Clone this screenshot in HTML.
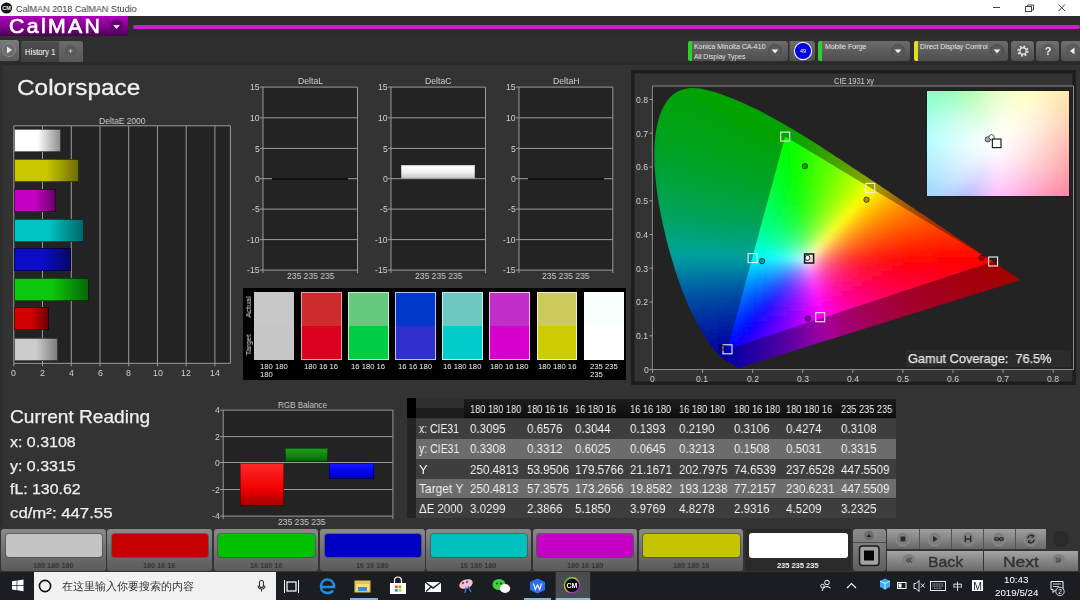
<!DOCTYPE html><html><head><meta charset="utf-8"><style>
html,body{margin:0;padding:0;width:1080px;height:600px;overflow:hidden;background:#333;font-family:"Liberation Sans",sans-serif;}
.t{position:absolute;white-space:pre;transform-origin:0 0;will-change:transform;}
svg{position:absolute;left:0;top:0;}
</style></head><body>
<div style="position:absolute;left:0px;top:0px;width:1080px;height:16px;background:#fff"></div>
<svg width="20" height="16" style="left:0;top:0"><circle cx="6.5" cy="8" r="5.6" fill="#111"/><text x="6.5" y="10" font-size="5.5" font-weight="bold" fill="#eee" text-anchor="middle" font-family="Liberation Sans">CM</text></svg>
<div class="t" style="left:15.60px;top:4.50px;font-size:9.22px;line-height:9.22px;color:#333;transform:scaleX(0.9809);">CalMAN 2018 CalMAN Studio</div>
<svg width="100" height="16" style="left:980px;top:0"><line x1="13" y1="7.5" x2="20" y2="7.5" stroke="#444" stroke-width="1"/><rect x="45.5" y="6.5" width="6" height="5" fill="none" stroke="#444"/><path d="M47.5 6.5v-1.5h6v5h-1.5" fill="none" stroke="#444"/><path d="M78.5 4.5l6.5 6.5M85 4.5l-6.5 6.5" stroke="#444" stroke-width="1"/></svg>
<div style="position:absolute;left:0px;top:16px;width:1080px;height:20px;background:#2c2c2c"></div>
<div style="position:absolute;left:0px;top:16px;width:128px;height:20.3px;background:linear-gradient(#ac00b8,#8a0096 45%,#5a0064 85%,#44004c)"></div>
<div class="t" style="left:9.00px;top:16.89px;font-size:19.97px;line-height:19.97px;color:#fff;transform:scaleX(1.0662);-webkit-text-stroke:0.7px #fff;letter-spacing:2.2px;">CalMAN</div>
<svg width="20" height="20" style="left:106px;top:16px"><circle cx="10.5" cy="10.5" r="7" fill="#5e0066" opacity="0.8"/><path d="M7 9h7l-3.5 4z" fill="#f4d8f4"/></svg>
<div style="position:absolute;left:133px;top:24.5px;width:947px;height:4px;background:#d21ad6;border-radius:2px"></div>
<div style="position:absolute;left:0px;top:36px;width:1080px;height:26px;background:#2e2e2e"></div>
<div style="position:absolute;left:0px;top:40px;width:18.5px;height:20.5px;background:linear-gradient(#7a7a7a,#5a5a5a);border-radius:0 3px 3px 0"></div>
<svg width="20" height="22" style="left:0;top:39px"><circle cx="9" cy="11" r="6.5" fill="#6c6c6c" stroke="#888" stroke-width="1"/><path d="M7 7.5l5 3.5l-5 3.5z" fill="#eee"/></svg>
<div style="position:absolute;left:20.5px;top:40.5px;width:38px;height:21px;background:linear-gradient(#4c4c4c,#3e3e3e);border-radius:3px 0 0 0;border-top:1px solid #5a5a5a"></div>
<div class="t" style="left:24.50px;top:48.03px;font-size:8.94px;line-height:8.94px;color:#e4e4e4;transform:scaleX(0.8649);-webkit-text-stroke:0.2px #e4e4e4;">History 1</div>
<div style="position:absolute;left:58.5px;top:40.5px;width:24.5px;height:21px;background:linear-gradient(#6a6a6a,#585858);border-radius:0 3px 0 0"></div>
<svg width="26" height="22" style="left:58px;top:40px"><circle cx="12.5" cy="11" r="6" fill="#5a5a5a"/><path d="M10.5 11h4M12.5 9v4" stroke="#ccc" stroke-width="0.8"/></svg>
<div style="position:absolute;left:0px;top:61.5px;width:1080px;height:3px;background:#2a2a2a"></div>
<div style="position:absolute;left:0px;top:64px;width:3px;height:463px;background:#2c2c2c"></div>
<div style="position:absolute;left:688.3px;top:40.5px;width:100.20000000000005px;height:20.5px;background:linear-gradient(#6c6c6c,#4e4e4e);border-radius:3px"></div>
<div style="position:absolute;left:688.3px;top:41px;width:4px;height:20px;background:#2ed02e;border-radius:2px 0 0 2px"></div>
<div class="t" style="left:694.20px;top:43.28px;font-size:7.82px;line-height:7.82px;color:#eee;transform:scaleX(0.8951);">Konica Minolta CA-410</div>
<div class="t" style="left:694.20px;top:52.68px;font-size:7.82px;line-height:7.82px;color:#eee;transform:scaleX(0.8669);">All Display Types</div>
<svg width="20" height="20" style="left:765.4px;top:40.8px"><circle cx="10" cy="10" r="7" fill="#5a5a5a"/><circle cx="10" cy="10" r="6.2" fill="none" stroke="#4a4a4a" stroke-width="1"/><path d="M6.6 8.6h6.8l-3.4 3.6z" fill="#f4f4f4"/></svg>
<div style="position:absolute;left:788.5px;top:40.5px;width:25.5px;height:20.5px;background:linear-gradient(#6c6c6c,#4e4e4e);border-radius:0 3px 3px 0;border-left:1px solid #444"></div>
<svg width="22" height="22" style="left:792px;top:40px"><circle cx="11" cy="11" r="8.6" fill="#0000e0" stroke="#e8e8ff" stroke-width="1.2"/><text x="11" y="13" font-size="5.5" fill="#fff" text-anchor="middle" font-family="Liberation Sans">49</text></svg>
<div style="position:absolute;left:818px;top:40.5px;width:91.60000000000002px;height:20.5px;background:linear-gradient(#6c6c6c,#4e4e4e);border-radius:3px"></div>
<div style="position:absolute;left:818px;top:41px;width:4px;height:20px;background:#2ed02e;border-radius:2px 0 0 2px"></div>
<div class="t" style="left:824.50px;top:43.28px;font-size:7.82px;line-height:7.82px;color:#eee;transform:scaleX(0.9093);">Mobile Forge</div>
<svg width="20" height="20" style="left:888px;top:40.8px"><circle cx="10" cy="10" r="7" fill="#5a5a5a"/><circle cx="10" cy="10" r="6.2" fill="none" stroke="#4a4a4a" stroke-width="1"/><path d="M6.6 8.6h6.8l-3.4 3.6z" fill="#f4f4f4"/></svg>
<div style="position:absolute;left:913.7px;top:40.5px;width:94.29999999999995px;height:20.5px;background:linear-gradient(#6c6c6c,#4e4e4e);border-radius:3px"></div>
<div style="position:absolute;left:913.7px;top:41px;width:4px;height:20px;background:#e0e020;border-radius:2px 0 0 2px"></div>
<div class="t" style="left:919.80px;top:43.28px;font-size:7.82px;line-height:7.82px;color:#eee;transform:scaleX(0.8992);">Direct Display Control</div>
<svg width="20" height="20" style="left:986.7px;top:40.8px"><circle cx="10" cy="10" r="7" fill="#5a5a5a"/><circle cx="10" cy="10" r="6.2" fill="none" stroke="#4a4a4a" stroke-width="1"/><path d="M6.6 8.6h6.8l-3.4 3.6z" fill="#f4f4f4"/></svg>
<div style="position:absolute;left:1011px;top:40.5px;width:23px;height:20px;background:linear-gradient(#707070,#505050);border-radius:3px"></div>
<svg width="24" height="22" style="left:1010.5px;top:40px"><circle cx="12" cy="11" r="7.5" fill="#5a5a5a"/><circle cx="12" cy="11" r="4.6" fill="none" stroke="#ddd" stroke-width="2.2" stroke-dasharray="1.8 1.8"/><circle cx="12" cy="11" r="3.2" fill="none" stroke="#ddd" stroke-width="1.4"/></svg>
<div style="position:absolute;left:1036px;top:40.5px;width:23px;height:20px;background:linear-gradient(#707070,#505050);border-radius:3px"></div>
<svg width="24" height="22" style="left:1035.5px;top:40px"><circle cx="12" cy="11" r="7.5" fill="#5a5a5a"/><text x="12" y="15" font-size="11" font-weight="bold" fill="#eee" text-anchor="middle" font-family="Liberation Sans">?</text></svg>
<div style="position:absolute;left:1061px;top:40.5px;width:23px;height:20px;background:linear-gradient(#707070,#505050);border-radius:3px"></div>
<svg width="24" height="22" style="left:1060.5px;top:40px"><circle cx="12" cy="11" r="7.5" fill="#5a5a5a"/><path d="M13.5 7.5v7l-4.5-3.5z" fill="#eee"/></svg>
<div class="t" style="left:16.70px;top:77.18px;font-size:22.35px;line-height:22.35px;color:#f0f0f0;transform:scaleX(1.0909);-webkit-text-stroke:0.3px #f0f0f0;">Colorspace</div>
<div style="position:absolute;left:13.8px;top:125.8px;width:216.6px;height:237.5px;background:#232323"></div>
<div class="t" style="left:98.75px;top:116.87px;font-size:8.66px;line-height:8.66px;color:#ccc;transform:scaleX(0.9757);">DeltaE 2000</div>
<svg width="1080" height="600" style="left:0;top:0"><line x1="42.5" y1="125.8" x2="42.5" y2="366.3" stroke="#9a9a9a" stroke-width="1"/><line x1="71.3" y1="125.8" x2="71.3" y2="366.3" stroke="#9a9a9a" stroke-width="1"/><line x1="100.0" y1="125.8" x2="100.0" y2="366.3" stroke="#9a9a9a" stroke-width="1"/><line x1="128.7" y1="125.8" x2="128.7" y2="366.3" stroke="#9a9a9a" stroke-width="1"/><line x1="157.4" y1="125.8" x2="157.4" y2="366.3" stroke="#9a9a9a" stroke-width="1"/><line x1="186.2" y1="125.8" x2="186.2" y2="366.3" stroke="#9a9a9a" stroke-width="1"/><line x1="214.9" y1="125.8" x2="214.9" y2="366.3" stroke="#9a9a9a" stroke-width="1"/><path d="M13.8 366.3 V125.8 H230.4 V363.3 H13.8" fill="none" stroke="#9a9a9a" stroke-width="1"/></svg>
<div class="t" style="left:11.35px;top:368.95px;font-size:8.80px;line-height:8.80px;color:#cfcfcf;transform:scaleX(1.0000);">0</div>
<div class="t" style="left:40.08px;top:368.95px;font-size:8.80px;line-height:8.80px;color:#cfcfcf;transform:scaleX(1.0000);">2</div>
<div class="t" style="left:68.81px;top:368.95px;font-size:8.80px;line-height:8.80px;color:#cfcfcf;transform:scaleX(1.0000);">4</div>
<div class="t" style="left:97.54px;top:368.95px;font-size:8.80px;line-height:8.80px;color:#cfcfcf;transform:scaleX(1.0000);">6</div>
<div class="t" style="left:126.27px;top:368.95px;font-size:8.80px;line-height:8.80px;color:#cfcfcf;transform:scaleX(1.0000);">8</div>
<div class="t" style="left:152.55px;top:368.95px;font-size:8.80px;line-height:8.80px;color:#cfcfcf;transform:scaleX(1.0000);">10</div>
<div class="t" style="left:181.28px;top:368.95px;font-size:8.80px;line-height:8.80px;color:#cfcfcf;transform:scaleX(1.0000);">12</div>
<div class="t" style="left:210.01px;top:368.95px;font-size:8.80px;line-height:8.80px;color:#cfcfcf;transform:scaleX(1.0000);">14</div>
<div style="position:absolute;left:14.3px;top:129px;width:46.4px;height:23px;background:linear-gradient(to right,#ffffff 0%,#ffffff 50%,#8a8a8a 100%);box-shadow:inset 0 0 0 1px rgba(0,0,0,0.55)"></div>
<div style="position:absolute;left:14.3px;top:159px;width:64.9px;height:23px;background:linear-gradient(to right,#c8c800 0%,#c8c800 50%,#6a6a00 100%);box-shadow:inset 0 0 0 1px rgba(0,0,0,0.55)"></div>
<div style="position:absolute;left:14.3px;top:188.5px;width:42.1px;height:23px;background:linear-gradient(to right,#c400c4 0%,#c400c4 50%,#640064 100%);box-shadow:inset 0 0 0 1px rgba(0,0,0,0.55)"></div>
<div style="position:absolute;left:14.3px;top:218.5px;width:69.3px;height:23px;background:linear-gradient(to right,#00c4c4 0%,#00c4c4 50%,#006464 100%);box-shadow:inset 0 0 0 1px rgba(0,0,0,0.55)"></div>
<div style="position:absolute;left:14.3px;top:248px;width:57.1px;height:23px;background:linear-gradient(to right,#0c0cc8 0%,#0c0cc8 50%,#060664 100%);box-shadow:inset 0 0 0 1px rgba(0,0,0,0.55)"></div>
<div style="position:absolute;left:14.3px;top:278px;width:74.5px;height:23px;background:linear-gradient(to right,#0cc80c 0%,#0cc80c 50%,#066406 100%);box-shadow:inset 0 0 0 1px rgba(0,0,0,0.55)"></div>
<div style="position:absolute;left:14.3px;top:307px;width:34.3px;height:23px;background:linear-gradient(to right,#d00000 0%,#d00000 50%,#680000 100%);box-shadow:inset 0 0 0 1px rgba(0,0,0,0.55)"></div>
<div style="position:absolute;left:14.3px;top:337.5px;width:43.5px;height:23px;background:linear-gradient(to right,#cccccc 0%,#cccccc 50%,#7a7a7a 100%);box-shadow:inset 0 0 0 1px rgba(0,0,0,0.55)"></div>
<div style="position:absolute;left:263px;top:87px;width:94.5px;height:183px;background:#232323"></div>
<svg width="1080" height="600" style="left:0;top:0"><line x1="260" y1="87.1" x2="357.5" y2="87.1" stroke="#9a9a9a" stroke-width="1"/><line x1="260" y1="117.8" x2="357.5" y2="117.8" stroke="#9a9a9a" stroke-width="1"/><line x1="260" y1="148.4" x2="357.5" y2="148.4" stroke="#9a9a9a" stroke-width="1"/><line x1="260" y1="178.7" x2="357.5" y2="178.7" stroke="#9a9a9a" stroke-width="1"/><line x1="260" y1="209.1" x2="357.5" y2="209.1" stroke="#9a9a9a" stroke-width="1"/><line x1="260" y1="239.6" x2="357.5" y2="239.6" stroke="#9a9a9a" stroke-width="1"/><line x1="260" y1="270.1" x2="357.5" y2="270.1" stroke="#9a9a9a" stroke-width="1"/><path d="M263 87.1V273.1M357.5 87.1V273.1" stroke="#9a9a9a" stroke-width="1"/></svg>
<div class="t" style="left:297.74px;top:77.37px;font-size:8.66px;line-height:8.66px;color:#cfcfcf;transform:scaleX(1.0000);">DeltaL</div>
<div class="t" style="left:249.87px;top:83.37px;font-size:8.66px;line-height:8.66px;color:#cfcfcf;transform:scaleX(1.0000);">15</div>
<div class="t" style="left:249.87px;top:114.07px;font-size:8.66px;line-height:8.66px;color:#cfcfcf;transform:scaleX(1.0000);">10</div>
<div class="t" style="left:254.68px;top:144.67px;font-size:8.66px;line-height:8.66px;color:#cfcfcf;transform:scaleX(1.0000);">5</div>
<div class="t" style="left:254.68px;top:174.97px;font-size:8.66px;line-height:8.66px;color:#cfcfcf;transform:scaleX(1.0000);">0</div>
<div class="t" style="left:251.80px;top:205.37px;font-size:8.66px;line-height:8.66px;color:#cfcfcf;transform:scaleX(1.0000);">-5</div>
<div class="t" style="left:246.99px;top:235.87px;font-size:8.66px;line-height:8.66px;color:#cfcfcf;transform:scaleX(1.0000);">-10</div>
<div class="t" style="left:246.99px;top:266.37px;font-size:8.66px;line-height:8.66px;color:#cfcfcf;transform:scaleX(1.0000);">-15</div>
<div class="t" style="left:286.50px;top:271.57px;font-size:8.66px;line-height:8.66px;color:#cfcfcf;transform:scaleX(0.9865);">235 235 235</div>
<div style="position:absolute;left:391px;top:87px;width:94.5px;height:183px;background:#232323"></div>
<svg width="1080" height="600" style="left:0;top:0"><line x1="388" y1="87.1" x2="485.5" y2="87.1" stroke="#9a9a9a" stroke-width="1"/><line x1="388" y1="117.8" x2="485.5" y2="117.8" stroke="#9a9a9a" stroke-width="1"/><line x1="388" y1="148.4" x2="485.5" y2="148.4" stroke="#9a9a9a" stroke-width="1"/><line x1="388" y1="178.7" x2="485.5" y2="178.7" stroke="#9a9a9a" stroke-width="1"/><line x1="388" y1="209.1" x2="485.5" y2="209.1" stroke="#9a9a9a" stroke-width="1"/><line x1="388" y1="239.6" x2="485.5" y2="239.6" stroke="#9a9a9a" stroke-width="1"/><line x1="388" y1="270.1" x2="485.5" y2="270.1" stroke="#9a9a9a" stroke-width="1"/><path d="M391 87.1V273.1M485.5 87.1V273.1" stroke="#9a9a9a" stroke-width="1"/></svg>
<div class="t" style="left:425.02px;top:77.37px;font-size:8.66px;line-height:8.66px;color:#cfcfcf;transform:scaleX(1.0000);">DeltaC</div>
<div class="t" style="left:377.87px;top:83.37px;font-size:8.66px;line-height:8.66px;color:#cfcfcf;transform:scaleX(1.0000);">15</div>
<div class="t" style="left:377.87px;top:114.07px;font-size:8.66px;line-height:8.66px;color:#cfcfcf;transform:scaleX(1.0000);">10</div>
<div class="t" style="left:382.68px;top:144.67px;font-size:8.66px;line-height:8.66px;color:#cfcfcf;transform:scaleX(1.0000);">5</div>
<div class="t" style="left:382.68px;top:174.97px;font-size:8.66px;line-height:8.66px;color:#cfcfcf;transform:scaleX(1.0000);">0</div>
<div class="t" style="left:379.80px;top:205.37px;font-size:8.66px;line-height:8.66px;color:#cfcfcf;transform:scaleX(1.0000);">-5</div>
<div class="t" style="left:374.99px;top:235.87px;font-size:8.66px;line-height:8.66px;color:#cfcfcf;transform:scaleX(1.0000);">-10</div>
<div class="t" style="left:374.99px;top:266.37px;font-size:8.66px;line-height:8.66px;color:#cfcfcf;transform:scaleX(1.0000);">-15</div>
<div class="t" style="left:414.50px;top:271.57px;font-size:8.66px;line-height:8.66px;color:#cfcfcf;transform:scaleX(0.9865);">235 235 235</div>
<div style="position:absolute;left:519px;top:87px;width:93.79999999999995px;height:183px;background:#232323"></div>
<svg width="1080" height="600" style="left:0;top:0"><line x1="516" y1="87.1" x2="612.8" y2="87.1" stroke="#9a9a9a" stroke-width="1"/><line x1="516" y1="117.8" x2="612.8" y2="117.8" stroke="#9a9a9a" stroke-width="1"/><line x1="516" y1="148.4" x2="612.8" y2="148.4" stroke="#9a9a9a" stroke-width="1"/><line x1="516" y1="178.7" x2="612.8" y2="178.7" stroke="#9a9a9a" stroke-width="1"/><line x1="516" y1="209.1" x2="612.8" y2="209.1" stroke="#9a9a9a" stroke-width="1"/><line x1="516" y1="239.6" x2="612.8" y2="239.6" stroke="#9a9a9a" stroke-width="1"/><line x1="516" y1="270.1" x2="612.8" y2="270.1" stroke="#9a9a9a" stroke-width="1"/><path d="M519 87.1V273.1M612.8 87.1V273.1" stroke="#9a9a9a" stroke-width="1"/></svg>
<div class="t" style="left:552.67px;top:77.37px;font-size:8.66px;line-height:8.66px;color:#cfcfcf;transform:scaleX(1.0000);">DeltaH</div>
<div class="t" style="left:505.87px;top:83.37px;font-size:8.66px;line-height:8.66px;color:#cfcfcf;transform:scaleX(1.0000);">15</div>
<div class="t" style="left:505.87px;top:114.07px;font-size:8.66px;line-height:8.66px;color:#cfcfcf;transform:scaleX(1.0000);">10</div>
<div class="t" style="left:510.68px;top:144.67px;font-size:8.66px;line-height:8.66px;color:#cfcfcf;transform:scaleX(1.0000);">5</div>
<div class="t" style="left:510.68px;top:174.97px;font-size:8.66px;line-height:8.66px;color:#cfcfcf;transform:scaleX(1.0000);">0</div>
<div class="t" style="left:507.80px;top:205.37px;font-size:8.66px;line-height:8.66px;color:#cfcfcf;transform:scaleX(1.0000);">-5</div>
<div class="t" style="left:502.99px;top:235.87px;font-size:8.66px;line-height:8.66px;color:#cfcfcf;transform:scaleX(1.0000);">-10</div>
<div class="t" style="left:502.99px;top:266.37px;font-size:8.66px;line-height:8.66px;color:#cfcfcf;transform:scaleX(1.0000);">-15</div>
<div class="t" style="left:542.15px;top:271.57px;font-size:8.66px;line-height:8.66px;color:#cfcfcf;transform:scaleX(0.9865);">235 235 235</div>
<div style="position:absolute;left:272px;top:177.7px;width:76px;height:2px;background:#111"></div>
<div style="position:absolute;left:528px;top:177.7px;width:76px;height:2px;background:#111"></div>
<div style="position:absolute;left:401px;top:165px;width:74.4px;height:13.7px;background:linear-gradient(#ffffff,#f2f2f2 50%,#bdbdbd);box-shadow:inset 0 0 0 1px rgba(0,0,0,0.2)"></div>
<div style="position:absolute;left:243.2px;top:288.2px;width:383px;height:92.2px;background:#000"></div>
<div class="t" style="left:248.6px;top:306.6px;font-size:7.6px;line-height:8px;color:#ddd;transform:translate(-50%,-50%) rotate(-90deg);transform-origin:50% 50%">Actual</div>
<div class="t" style="left:248.6px;top:345px;font-size:7.6px;line-height:8px;color:#ddd;transform:translate(-50%,-50%) rotate(-90deg);transform-origin:50% 50%">Target</div>
<div style="position:absolute;left:253.9px;top:291.6px;width:40.5px;height:68.2px;background:linear-gradient(#c8c8c8 0,#c8c8c8 50%,#c6c6c6 50%,#c6c6c6 100%);box-shadow:inset 0 0 0 1px #c8c8c8"></div>
<div class="t" style="left:260.27px;top:363.30px;font-size:7.68px;line-height:7.68px;color:#eee;transform:scaleX(1.0000);">180 180</div>
<div class="t" style="left:260.27px;top:370.70px;font-size:7.68px;line-height:7.68px;color:#eee;transform:scaleX(1.0000);">180</div>
<div style="position:absolute;left:301.0px;top:291.6px;width:40.5px;height:68.2px;background:linear-gradient(#cc2c2c 0,#cc2c2c 50%,#dc0020 50%,#dc0020 100%);box-shadow:inset 0 0 0 1px #e8a0a0"></div>
<div class="t" style="left:304.17px;top:363.30px;font-size:7.68px;line-height:7.68px;color:#eee;transform:scaleX(1.0000);">180 16 16</div>
<div style="position:absolute;left:348.1px;top:291.6px;width:40.5px;height:68.2px;background:linear-gradient(#66c97f 0,#66c97f 50%,#00cc44 50%,#00cc44 100%);box-shadow:inset 0 0 0 1px #c0f0c8"></div>
<div class="t" style="left:351.27px;top:363.30px;font-size:7.68px;line-height:7.68px;color:#eee;transform:scaleX(1.0000);">16 180 16</div>
<div style="position:absolute;left:395.20000000000005px;top:291.6px;width:40.5px;height:68.2px;background:linear-gradient(#0038cc 0,#0038cc 50%,#3030cc 50%,#3030cc 100%);box-shadow:inset 0 0 0 1px #c0c0f0"></div>
<div class="t" style="left:398.37px;top:363.30px;font-size:7.68px;line-height:7.68px;color:#eee;transform:scaleX(1.0000);">16 16 180</div>
<div style="position:absolute;left:442.3px;top:291.6px;width:40.5px;height:68.2px;background:linear-gradient(#6cc8c0 0,#6cc8c0 50%,#00cccc 50%,#00cccc 100%);box-shadow:inset 0 0 0 1px #c0f0f0"></div>
<div class="t" style="left:443.33px;top:363.30px;font-size:7.68px;line-height:7.68px;color:#eee;transform:scaleX(1.0000);">16 180 180</div>
<div style="position:absolute;left:489.4px;top:291.6px;width:40.5px;height:68.2px;background:linear-gradient(#c030c8 0,#c030c8 50%,#d800cc 50%,#d800cc 100%);box-shadow:inset 0 0 0 1px #f0c0f0"></div>
<div class="t" style="left:490.43px;top:363.30px;font-size:7.68px;line-height:7.68px;color:#eee;transform:scaleX(1.0000);">180 16 180</div>
<div style="position:absolute;left:536.5px;top:291.6px;width:40.5px;height:68.2px;background:linear-gradient(#cccc5c 0,#cccc5c 50%,#cccc00 50%,#cccc00 100%);box-shadow:inset 0 0 0 1px #f0f0c0"></div>
<div class="t" style="left:537.53px;top:363.30px;font-size:7.68px;line-height:7.68px;color:#eee;transform:scaleX(1.0000);">180 180 16</div>
<div style="position:absolute;left:583.6px;top:291.6px;width:40.5px;height:68.2px;background:linear-gradient(#f8fffc 0,#f8fffc 50%,#ffffff 50%,#ffffff 100%);box-shadow:inset 0 0 0 1px #ffffff"></div>
<div class="t" style="left:589.97px;top:363.30px;font-size:7.68px;line-height:7.68px;color:#eee;transform:scaleX(1.0000);">235 235</div>
<div class="t" style="left:589.97px;top:370.70px;font-size:7.68px;line-height:7.68px;color:#eee;transform:scaleX(1.0000);">235</div>
<div style="position:absolute;left:630.5px;top:69.5px;width:445px;height:315.5px;background:#333;box-shadow:inset 0 0 0 3.5px #1d1d1d"></div>
<div class="t" style="left:834.00px;top:76.97px;font-size:8.66px;line-height:8.66px;color:#d0d0d0;transform:scaleX(0.8480);">CIE 1931 xy</div>
<div style="position:absolute;left:652.4px;top:86px;width:421.1px;height:283.5px;background:#232323"></div>
<svg width="1080" height="600" style="left:0;top:0"><clipPath id="cL"><path d="M739.6 367.8 L739.6 367.8 L739.5 367.8 L739.4 367.9 L739.3 367.9 L739.2 367.9 L739.1 367.9 L739.1 367.9 L739.0 367.9 L738.9 367.9 L738.9 367.9 L738.8 367.9 L738.8 367.9 L738.7 367.9 L738.7 367.9 L738.6 367.9 L738.6 367.9 L738.5 367.9 L738.4 367.8 L738.4 367.8 L738.3 367.8 L738.2 367.7 L738.1 367.7 L738.0 367.7 L737.8 367.6 L737.7 367.5 L737.6 367.5 L737.5 367.4 L737.3 367.3 L737.2 367.3 L737.0 367.2 L736.8 367.1 L736.7 367.0 L736.5 366.9 L736.2 366.7 L736.0 366.6 L735.8 366.5 L735.6 366.3 L735.3 366.2 L735.0 366.0 L734.8 365.8 L734.5 365.6 L734.2 365.5 L733.8 365.3 L733.5 365.1 L733.1 364.8 L732.7 364.6 L732.3 364.4 L731.8 364.1 L731.4 363.8 L730.9 363.5 L730.3 363.2 L729.8 362.9 L729.3 362.6 L728.7 362.2 L728.1 361.8 L727.4 361.4 L726.7 361.0 L726.0 360.5 L725.3 360.0 L724.5 359.5 L723.8 358.9 L723.0 358.3 L722.1 357.6 L721.2 356.9 L720.3 356.0 L719.3 355.1 L718.2 354.0 L717.0 352.8 L715.8 351.5 L714.6 350.0 L713.3 348.4 L711.9 346.6 L710.4 344.7 L708.9 342.6 L707.3 340.2 L705.6 337.6 L703.9 334.8 L702.1 331.7 L700.1 328.4 L698.1 324.7 L696.0 320.7 L693.8 316.5 L691.5 311.9 L689.1 307.0 L686.8 301.8 L684.5 296.1 L682.1 290.1 L679.8 283.7 L677.4 277.0 L675.1 269.9 L672.9 262.5 L670.5 254.7 L668.3 246.7 L666.1 238.5 L664.2 230.2 L662.3 221.9 L660.6 213.3 L659.0 204.7 L657.6 196.1 L656.5 187.8 L655.6 179.6 L654.9 171.5 L654.4 163.6 L654.2 155.9 L654.4 148.5 L654.8 141.4 L655.5 134.6 L656.5 128.0 L657.8 121.9 L659.4 116.3 L661.3 111.2 L663.6 106.5 L666.1 102.3 L668.9 98.6 L671.9 95.4 L675.1 93.0 L678.5 91.1 L682.1 89.7 L685.8 88.7 L689.6 88.1 L693.5 87.9 L697.4 88.2 L701.5 88.8 L705.6 89.7 L709.6 90.7 L713.7 91.7 L717.8 93.0 L721.9 94.5 L725.9 96.0 L729.9 97.5 L733.8 99.0 L737.7 100.6 L741.5 102.3 L745.3 104.0 L749.0 105.7 L752.8 107.5 L756.5 109.3 L760.1 111.1 L763.8 113.0 L767.4 114.9 L771.1 116.9 L774.7 118.9 L778.3 120.9 L782.0 123.0 L785.6 125.0 L789.2 127.2 L792.8 129.3 L796.3 131.5 L799.9 133.6 L803.5 135.8 L807.1 138.1 L810.7 140.3 L814.2 142.6 L817.8 144.8 L821.4 147.1 L825.0 149.4 L828.6 151.7 L832.2 154.1 L835.7 156.4 L839.3 158.7 L842.9 161.1 L846.5 163.4 L850.0 165.8 L853.6 168.2 L857.2 170.5 L860.7 172.9 L864.3 175.2 L867.8 177.6 L871.4 179.9 L874.9 182.3 L878.4 184.6 L881.9 187.0 L885.4 189.3 L888.8 191.6 L892.3 193.9 L895.7 196.2 L899.1 198.5 L902.5 200.8 L905.8 203.0 L909.2 205.3 L912.5 207.5 L915.7 209.7 L919.0 211.9 L922.2 214.0 L925.3 216.1 L928.5 218.2 L931.6 220.3 L934.6 222.3 L937.6 224.4 L940.6 226.3 L943.5 228.3 L946.3 230.2 L949.1 232.1 L951.8 233.9 L954.5 235.7 L957.0 237.4 L959.5 239.1 L961.9 240.7 L964.2 242.2 L966.5 243.8 L968.8 245.3 L971.0 246.8 L973.1 248.2 L975.2 249.6 L977.1 250.9 L979.1 252.2 L980.9 253.4 L982.6 254.6 L984.3 255.7 L986.0 256.8 L987.5 257.8 L989.0 258.8 L990.4 259.8 L991.8 260.7 L993.1 261.6 L994.4 262.4 L995.6 263.2 L996.7 264.0 L997.8 264.7 L998.8 265.4 L999.8 266.1 L1000.8 266.7 L1001.7 267.4 L1002.6 267.9 L1003.4 268.5 L1004.2 269.0 L1005.0 269.5 L1005.7 270.0 L1006.4 270.5 L1007.1 270.9 L1007.7 271.4 L1008.4 271.8 L1009.0 272.2 L1009.5 272.6 L1010.1 273.0 L1010.6 273.4 L1011.1 273.7 L1011.6 274.0 L1012.1 274.3 L1012.6 274.7 L1013.3 275.1 L1014.0 275.6 L1014.8 276.1 L1015.5 276.6 L1016.1 277.0 L1016.6 277.4 L1017.1 277.6 L1017.4 277.9 L1017.8 278.1 L1018.1 278.4 L1018.5 278.6 L1018.9 278.9 L1019.2 279.1 L1019.6 279.3 L1019.8 279.5 L1020.0 279.7 L1020.2 279.8 L1020.3 279.9 L1020.4 279.9 L1020.5 280.0Z"/></clipPath><filter id="fL" x="-5%" y="-5%" width="110%" height="110%"><feGaussianBlur stdDeviation="6.00"/></filter><g clip-path="url(#cL)"><g filter="url(#fL)"><rect x="670" y="79" width="8" height="8" fill="#00a304"/><rect x="678" y="79" width="8" height="8" fill="#00a303"/><rect x="686" y="79" width="8" height="8" fill="#00a301"/><rect x="694" y="79" width="8" height="8" fill="#00a300"/><rect x="702" y="79" width="8" height="8" fill="#00a300"/><rect x="710" y="79" width="8" height="8" fill="#00a300"/><rect x="718" y="79" width="8" height="8" fill="#00a300"/><rect x="662" y="87" width="8" height="8" fill="#00a309"/><rect x="670" y="87" width="8" height="8" fill="#00a307"/><rect x="678" y="87" width="8" height="8" fill="#00a306"/><rect x="686" y="87" width="8" height="8" fill="#00a304"/><rect x="694" y="87" width="8" height="8" fill="#00a302"/><rect x="702" y="87" width="8" height="8" fill="#00a301"/><rect x="710" y="87" width="8" height="8" fill="#00a300"/><rect x="718" y="87" width="8" height="8" fill="#00a300"/><rect x="726" y="87" width="8" height="8" fill="#00a300"/><rect x="734" y="87" width="8" height="8" fill="#00a300"/><rect x="654" y="95" width="8" height="8" fill="#00a30e"/><rect x="662" y="95" width="8" height="8" fill="#00a30c"/><rect x="670" y="95" width="8" height="8" fill="#00a30b"/><rect x="678" y="95" width="8" height="8" fill="#00a309"/><rect x="686" y="95" width="8" height="8" fill="#00a307"/><rect x="694" y="95" width="8" height="8" fill="#00a305"/><rect x="702" y="95" width="8" height="8" fill="#00a304"/><rect x="710" y="95" width="8" height="8" fill="#00a302"/><rect x="718" y="95" width="8" height="8" fill="#00a300"/><rect x="726" y="95" width="8" height="8" fill="#00a300"/><rect x="734" y="95" width="8" height="8" fill="#00a300"/><rect x="742" y="95" width="8" height="8" fill="#00a300"/><rect x="750" y="95" width="8" height="8" fill="#00a300"/><rect x="758" y="95" width="8" height="8" fill="#00a300"/><rect x="654" y="103" width="8" height="8" fill="#00a311"/><rect x="662" y="103" width="8" height="8" fill="#00a30f"/><rect x="670" y="103" width="8" height="8" fill="#00a30e"/><rect x="678" y="103" width="8" height="8" fill="#00a30c"/><rect x="686" y="103" width="8" height="8" fill="#00a30a"/><rect x="694" y="103" width="8" height="8" fill="#00a309"/><rect x="702" y="103" width="8" height="8" fill="#00a307"/><rect x="710" y="103" width="8" height="8" fill="#00a305"/><rect x="718" y="103" width="8" height="8" fill="#00a303"/><rect x="726" y="103" width="8" height="8" fill="#00a301"/><rect x="734" y="103" width="8" height="8" fill="#00a300"/><rect x="742" y="103" width="8" height="8" fill="#00a300"/><rect x="750" y="103" width="8" height="8" fill="#00a300"/><rect x="758" y="103" width="8" height="8" fill="#00a300"/><rect x="766" y="103" width="8" height="8" fill="#00a300"/><rect x="774" y="103" width="8" height="8" fill="#00a300"/><rect x="646" y="111" width="8" height="8" fill="#00a316"/><rect x="654" y="111" width="8" height="8" fill="#00a315"/><rect x="662" y="111" width="8" height="8" fill="#00a313"/><rect x="670" y="111" width="8" height="8" fill="#00a311"/><rect x="678" y="111" width="8" height="8" fill="#00a310"/><rect x="686" y="111" width="8" height="8" fill="#00a30e"/><rect x="694" y="111" width="8" height="8" fill="#00a30c"/><rect x="702" y="111" width="8" height="8" fill="#00a30a"/><rect x="710" y="111" width="8" height="8" fill="#00a309"/><rect x="718" y="111" width="8" height="8" fill="#00a307"/><rect x="726" y="111" width="8" height="8" fill="#00a305"/><rect x="734" y="111" width="8" height="8" fill="#00a303"/><rect x="742" y="111" width="8" height="8" fill="#00a301"/><rect x="750" y="111" width="8" height="8" fill="#00a300"/><rect x="758" y="111" width="8" height="8" fill="#00a300"/><rect x="766" y="111" width="8" height="8" fill="#00a300"/><rect x="774" y="111" width="8" height="8" fill="#00a300"/><rect x="782" y="111" width="8" height="8" fill="#00a300"/><rect x="646" y="119" width="8" height="8" fill="#00a31a"/><rect x="654" y="119" width="8" height="8" fill="#00a318"/><rect x="662" y="119" width="8" height="8" fill="#00a317"/><rect x="670" y="119" width="8" height="8" fill="#00a315"/><rect x="678" y="119" width="8" height="8" fill="#00a313"/><rect x="686" y="119" width="8" height="8" fill="#00a312"/><rect x="694" y="119" width="8" height="8" fill="#00a310"/><rect x="702" y="119" width="8" height="8" fill="#00a30e"/><rect x="710" y="119" width="8" height="8" fill="#00a30c"/><rect x="718" y="119" width="8" height="8" fill="#00a30a"/><rect x="726" y="119" width="8" height="8" fill="#00a308"/><rect x="734" y="119" width="8" height="8" fill="#00a306"/><rect x="742" y="119" width="8" height="8" fill="#00a304"/><rect x="750" y="119" width="8" height="8" fill="#00a302"/><rect x="758" y="119" width="8" height="8" fill="#00a300"/><rect x="766" y="119" width="8" height="8" fill="#00a300"/><rect x="774" y="119" width="8" height="8" fill="#00a300"/><rect x="782" y="119" width="8" height="8" fill="#00a300"/><rect x="790" y="119" width="8" height="8" fill="#05a300"/><rect x="798" y="119" width="8" height="8" fill="#0ca300"/><rect x="646" y="127" width="8" height="8" fill="#00a31e"/><rect x="654" y="127" width="8" height="8" fill="#00a31c"/><rect x="662" y="127" width="8" height="8" fill="#00a31b"/><rect x="670" y="127" width="8" height="8" fill="#00a319"/><rect x="678" y="127" width="8" height="8" fill="#00a317"/><rect x="686" y="127" width="8" height="8" fill="#00a316"/><rect x="694" y="127" width="8" height="8" fill="#00a314"/><rect x="702" y="127" width="8" height="8" fill="#00a312"/><rect x="710" y="127" width="8" height="8" fill="#00a310"/><rect x="718" y="127" width="8" height="8" fill="#00a30e"/><rect x="726" y="127" width="8" height="8" fill="#00a30c"/><rect x="734" y="127" width="8" height="8" fill="#00a30a"/><rect x="742" y="127" width="8" height="8" fill="#00a308"/><rect x="750" y="127" width="8" height="8" fill="#00a306"/><rect x="758" y="127" width="8" height="8" fill="#00a304"/><rect x="766" y="127" width="8" height="8" fill="#00a302"/><rect x="774" y="127" width="8" height="8" fill="#00a300"/><rect x="782" y="127" width="8" height="8" fill="#00a300"/><rect x="790" y="127" width="8" height="8" fill="#07a300"/><rect x="798" y="127" width="8" height="8" fill="#0ea300"/><rect x="806" y="127" width="8" height="8" fill="#16a300"/><rect x="814" y="127" width="8" height="8" fill="#1ea300"/><rect x="646" y="135" width="8" height="8" fill="#00a322"/><rect x="654" y="135" width="8" height="8" fill="#00a321"/><rect x="662" y="135" width="8" height="8" fill="#00a31f"/><rect x="670" y="135" width="8" height="8" fill="#00a31d"/><rect x="678" y="135" width="8" height="8" fill="#00a31c"/><rect x="686" y="135" width="8" height="8" fill="#00a31a"/><rect x="694" y="135" width="8" height="8" fill="#00a318"/><rect x="702" y="135" width="8" height="8" fill="#00a316"/><rect x="710" y="135" width="8" height="8" fill="#00a314"/><rect x="718" y="135" width="8" height="8" fill="#00a312"/><rect x="726" y="135" width="8" height="8" fill="#00a310"/><rect x="734" y="135" width="8" height="8" fill="#00a30e"/><rect x="742" y="135" width="8" height="8" fill="#00a30c"/><rect x="750" y="135" width="8" height="8" fill="#00a30a"/><rect x="758" y="135" width="8" height="8" fill="#00a308"/><rect x="766" y="135" width="8" height="8" fill="#00a306"/><rect x="774" y="135" width="8" height="8" fill="#00a303"/><rect x="782" y="135" width="8" height="8" fill="#01a301"/><rect x="790" y="135" width="8" height="8" fill="#09a300"/><rect x="798" y="135" width="8" height="8" fill="#11a300"/><rect x="806" y="135" width="8" height="8" fill="#19a300"/><rect x="814" y="135" width="8" height="8" fill="#22a300"/><rect x="822" y="135" width="8" height="8" fill="#2ba300"/><rect x="646" y="143" width="8" height="8" fill="#00a327"/><rect x="654" y="143" width="8" height="8" fill="#00a325"/><rect x="662" y="143" width="8" height="8" fill="#00a324"/><rect x="670" y="143" width="8" height="8" fill="#00a322"/><rect x="678" y="143" width="8" height="8" fill="#00a320"/><rect x="686" y="143" width="8" height="8" fill="#00a31e"/><rect x="694" y="143" width="8" height="8" fill="#00a31d"/><rect x="702" y="143" width="8" height="8" fill="#00a31b"/><rect x="710" y="143" width="8" height="8" fill="#00a319"/><rect x="718" y="143" width="8" height="8" fill="#00a317"/><rect x="726" y="143" width="8" height="8" fill="#00a315"/><rect x="734" y="143" width="8" height="8" fill="#00a313"/><rect x="742" y="143" width="8" height="8" fill="#00a311"/><rect x="750" y="143" width="8" height="8" fill="#00a30f"/><rect x="758" y="143" width="8" height="8" fill="#00a30c"/><rect x="766" y="143" width="8" height="8" fill="#00a30a"/><rect x="774" y="143" width="8" height="8" fill="#00a308"/><rect x="782" y="143" width="8" height="8" fill="#04a305"/><rect x="790" y="143" width="8" height="8" fill="#0ca303"/><rect x="798" y="143" width="8" height="8" fill="#14a300"/><rect x="806" y="143" width="8" height="8" fill="#1da300"/><rect x="814" y="143" width="8" height="8" fill="#26a300"/><rect x="822" y="143" width="8" height="8" fill="#2fa300"/><rect x="830" y="143" width="8" height="8" fill="#39a300"/><rect x="838" y="143" width="8" height="8" fill="#42a300"/><rect x="646" y="151" width="8" height="8" fill="#00a32c"/><rect x="654" y="151" width="8" height="8" fill="#00a32a"/><rect x="662" y="151" width="8" height="8" fill="#00a329"/><rect x="670" y="151" width="8" height="8" fill="#00a327"/><rect x="678" y="151" width="8" height="8" fill="#00a325"/><rect x="686" y="151" width="8" height="8" fill="#00a323"/><rect x="694" y="151" width="8" height="8" fill="#00a322"/><rect x="702" y="151" width="8" height="8" fill="#00a320"/><rect x="710" y="151" width="8" height="8" fill="#00a31e"/><rect x="718" y="151" width="8" height="8" fill="#00a31c"/><rect x="726" y="151" width="8" height="8" fill="#00a31a"/><rect x="734" y="151" width="8" height="8" fill="#00a318"/><rect x="742" y="151" width="8" height="8" fill="#00a316"/><rect x="750" y="151" width="8" height="8" fill="#00a313"/><rect x="758" y="151" width="8" height="8" fill="#00a311"/><rect x="766" y="151" width="8" height="8" fill="#00a30f"/><rect x="774" y="151" width="8" height="8" fill="#00a30c"/><rect x="782" y="151" width="8" height="8" fill="#06a30a"/><rect x="790" y="151" width="8" height="8" fill="#0fa307"/><rect x="798" y="151" width="8" height="8" fill="#18a305"/><rect x="806" y="151" width="8" height="8" fill="#21a302"/><rect x="814" y="151" width="8" height="8" fill="#2aa300"/><rect x="822" y="151" width="8" height="8" fill="#34a300"/><rect x="830" y="151" width="8" height="8" fill="#3ea300"/><rect x="838" y="151" width="8" height="8" fill="#48a300"/><rect x="846" y="151" width="8" height="8" fill="#53a300"/><rect x="646" y="159" width="8" height="8" fill="#00a331"/><rect x="654" y="159" width="8" height="8" fill="#00a330"/><rect x="662" y="159" width="8" height="8" fill="#00a32e"/><rect x="670" y="159" width="8" height="8" fill="#00a32c"/><rect x="678" y="159" width="8" height="8" fill="#00a32b"/><rect x="686" y="159" width="8" height="8" fill="#00a329"/><rect x="694" y="159" width="8" height="8" fill="#00a327"/><rect x="702" y="159" width="8" height="8" fill="#00a325"/><rect x="710" y="159" width="8" height="8" fill="#00a323"/><rect x="718" y="159" width="8" height="8" fill="#00a321"/><rect x="726" y="159" width="8" height="8" fill="#00a31f"/><rect x="734" y="159" width="8" height="8" fill="#00a31d"/><rect x="742" y="159" width="8" height="8" fill="#00a31b"/><rect x="750" y="159" width="8" height="8" fill="#00a319"/><rect x="758" y="159" width="8" height="8" fill="#00a316"/><rect x="766" y="159" width="8" height="8" fill="#00a314"/><rect x="774" y="159" width="8" height="8" fill="#00a312"/><rect x="782" y="159" width="8" height="8" fill="#09a30f"/><rect x="790" y="159" width="8" height="8" fill="#12a30c"/><rect x="798" y="159" width="8" height="8" fill="#1ba30a"/><rect x="806" y="159" width="8" height="8" fill="#25a307"/><rect x="814" y="159" width="8" height="8" fill="#2fa304"/><rect x="822" y="159" width="8" height="8" fill="#39a301"/><rect x="830" y="159" width="8" height="8" fill="#44a300"/><rect x="838" y="159" width="8" height="8" fill="#4fa300"/><rect x="846" y="159" width="8" height="8" fill="#5aa300"/><rect x="854" y="159" width="8" height="8" fill="#66a300"/><rect x="862" y="159" width="8" height="8" fill="#73a300"/><rect x="646" y="167" width="8" height="8" fill="#00a337"/><rect x="654" y="167" width="8" height="8" fill="#00a335"/><rect x="662" y="167" width="8" height="8" fill="#00a334"/><rect x="670" y="167" width="8" height="8" fill="#00a332"/><rect x="678" y="167" width="8" height="8" fill="#00a330"/><rect x="686" y="167" width="8" height="8" fill="#00a32f"/><rect x="694" y="167" width="8" height="8" fill="#00a32d"/><rect x="702" y="167" width="8" height="8" fill="#00a32b"/><rect x="710" y="167" width="8" height="8" fill="#00a329"/><rect x="718" y="167" width="8" height="8" fill="#00a327"/><rect x="726" y="167" width="8" height="8" fill="#00a325"/><rect x="734" y="167" width="8" height="8" fill="#00a323"/><rect x="742" y="167" width="8" height="8" fill="#00a321"/><rect x="750" y="167" width="8" height="8" fill="#00a31e"/><rect x="758" y="167" width="8" height="8" fill="#00a31c"/><rect x="766" y="167" width="8" height="8" fill="#00a31a"/><rect x="774" y="167" width="8" height="8" fill="#02a317"/><rect x="782" y="167" width="8" height="8" fill="#0ca315"/><rect x="790" y="167" width="8" height="8" fill="#15a312"/><rect x="798" y="167" width="8" height="8" fill="#1fa30f"/><rect x="806" y="167" width="8" height="8" fill="#29a30c"/><rect x="814" y="167" width="8" height="8" fill="#34a30a"/><rect x="822" y="167" width="8" height="8" fill="#3fa307"/><rect x="830" y="167" width="8" height="8" fill="#4aa303"/><rect x="838" y="167" width="8" height="8" fill="#56a300"/><rect x="846" y="167" width="8" height="8" fill="#63a300"/><rect x="854" y="167" width="8" height="8" fill="#6fa300"/><rect x="862" y="167" width="8" height="8" fill="#7da300"/><rect x="870" y="167" width="8" height="8" fill="#8aa300"/><rect x="646" y="175" width="8" height="8" fill="#00a33d"/><rect x="654" y="175" width="8" height="8" fill="#00a33c"/><rect x="662" y="175" width="8" height="8" fill="#00a33a"/><rect x="670" y="175" width="8" height="8" fill="#00a338"/><rect x="678" y="175" width="8" height="8" fill="#00a337"/><rect x="686" y="175" width="8" height="8" fill="#00a335"/><rect x="694" y="175" width="8" height="8" fill="#00a333"/><rect x="702" y="175" width="8" height="8" fill="#00a331"/><rect x="710" y="175" width="8" height="8" fill="#00a32f"/><rect x="718" y="175" width="8" height="8" fill="#00a32d"/><rect x="726" y="175" width="8" height="8" fill="#00a32b"/><rect x="734" y="175" width="8" height="8" fill="#00a329"/><rect x="742" y="175" width="8" height="8" fill="#00a327"/><rect x="750" y="175" width="8" height="8" fill="#00a325"/><rect x="758" y="175" width="8" height="8" fill="#00a322"/><rect x="766" y="175" width="8" height="8" fill="#00a320"/><rect x="774" y="175" width="8" height="8" fill="#05a31d"/><rect x="782" y="175" width="8" height="8" fill="#0fa31b"/><rect x="790" y="175" width="8" height="8" fill="#19a318"/><rect x="798" y="175" width="8" height="8" fill="#24a315"/><rect x="806" y="175" width="8" height="8" fill="#2ea313"/><rect x="814" y="175" width="8" height="8" fill="#3aa310"/><rect x="822" y="175" width="8" height="8" fill="#46a30d"/><rect x="830" y="175" width="8" height="8" fill="#52a309"/><rect x="838" y="175" width="8" height="8" fill="#5ea306"/><rect x="846" y="175" width="8" height="8" fill="#6ca303"/><rect x="854" y="175" width="8" height="8" fill="#79a300"/><rect x="862" y="175" width="8" height="8" fill="#88a300"/><rect x="870" y="175" width="8" height="8" fill="#97a300"/><rect x="878" y="175" width="8" height="8" fill="#a3a000"/><rect x="886" y="175" width="8" height="8" fill="#a39200"/><rect x="646" y="183" width="8" height="8" fill="#00a344"/><rect x="654" y="183" width="8" height="8" fill="#00a342"/><rect x="662" y="183" width="8" height="8" fill="#00a341"/><rect x="670" y="183" width="8" height="8" fill="#00a33f"/><rect x="678" y="183" width="8" height="8" fill="#00a33d"/><rect x="686" y="183" width="8" height="8" fill="#00a33c"/><rect x="694" y="183" width="8" height="8" fill="#00a33a"/><rect x="702" y="183" width="8" height="8" fill="#00a338"/><rect x="710" y="183" width="8" height="8" fill="#00a336"/><rect x="718" y="183" width="8" height="8" fill="#00a334"/><rect x="726" y="183" width="8" height="8" fill="#00a332"/><rect x="734" y="183" width="8" height="8" fill="#00a330"/><rect x="742" y="183" width="8" height="8" fill="#00a32e"/><rect x="750" y="183" width="8" height="8" fill="#00a32c"/><rect x="758" y="183" width="8" height="8" fill="#00a329"/><rect x="766" y="183" width="8" height="8" fill="#00a327"/><rect x="774" y="183" width="8" height="8" fill="#08a324"/><rect x="782" y="183" width="8" height="8" fill="#13a322"/><rect x="790" y="183" width="8" height="8" fill="#1da31f"/><rect x="798" y="183" width="8" height="8" fill="#29a31c"/><rect x="806" y="183" width="8" height="8" fill="#34a319"/><rect x="814" y="183" width="8" height="8" fill="#40a316"/><rect x="822" y="183" width="8" height="8" fill="#4da313"/><rect x="830" y="183" width="8" height="8" fill="#5aa310"/><rect x="838" y="183" width="8" height="8" fill="#68a30d"/><rect x="846" y="183" width="8" height="8" fill="#76a309"/><rect x="854" y="183" width="8" height="8" fill="#85a305"/><rect x="862" y="183" width="8" height="8" fill="#95a302"/><rect x="870" y="183" width="8" height="8" fill="#a3a200"/><rect x="878" y="183" width="8" height="8" fill="#a39200"/><rect x="886" y="183" width="8" height="8" fill="#a38500"/><rect x="894" y="183" width="8" height="8" fill="#a37a00"/><rect x="646" y="191" width="8" height="8" fill="#00a34b"/><rect x="654" y="191" width="8" height="8" fill="#00a34a"/><rect x="662" y="191" width="8" height="8" fill="#00a348"/><rect x="670" y="191" width="8" height="8" fill="#00a347"/><rect x="678" y="191" width="8" height="8" fill="#00a345"/><rect x="686" y="191" width="8" height="8" fill="#00a343"/><rect x="694" y="191" width="8" height="8" fill="#00a341"/><rect x="702" y="191" width="8" height="8" fill="#00a340"/><rect x="710" y="191" width="8" height="8" fill="#00a33e"/><rect x="718" y="191" width="8" height="8" fill="#00a33c"/><rect x="726" y="191" width="8" height="8" fill="#00a33a"/><rect x="734" y="191" width="8" height="8" fill="#00a338"/><rect x="742" y="191" width="8" height="8" fill="#00a336"/><rect x="750" y="191" width="8" height="8" fill="#00a333"/><rect x="758" y="191" width="8" height="8" fill="#00a331"/><rect x="766" y="191" width="8" height="8" fill="#01a32f"/><rect x="774" y="191" width="8" height="8" fill="#0ca32c"/><rect x="782" y="191" width="8" height="8" fill="#17a32a"/><rect x="790" y="191" width="8" height="8" fill="#22a327"/><rect x="798" y="191" width="8" height="8" fill="#2ea324"/><rect x="806" y="191" width="8" height="8" fill="#3ba321"/><rect x="814" y="191" width="8" height="8" fill="#48a31e"/><rect x="822" y="191" width="8" height="8" fill="#55a31b"/><rect x="830" y="191" width="8" height="8" fill="#63a318"/><rect x="838" y="191" width="8" height="8" fill="#72a314"/><rect x="846" y="191" width="8" height="8" fill="#82a311"/><rect x="854" y="191" width="8" height="8" fill="#92a30d"/><rect x="862" y="191" width="8" height="8" fill="#a3a309"/><rect x="870" y="191" width="8" height="8" fill="#a39304"/><rect x="878" y="191" width="8" height="8" fill="#a38500"/><rect x="886" y="191" width="8" height="8" fill="#a37900"/><rect x="894" y="191" width="8" height="8" fill="#a36f00"/><rect x="902" y="191" width="8" height="8" fill="#a36500"/><rect x="910" y="191" width="8" height="8" fill="#a35d00"/><rect x="646" y="199" width="8" height="8" fill="#00a353"/><rect x="654" y="199" width="8" height="8" fill="#00a352"/><rect x="662" y="199" width="8" height="8" fill="#00a350"/><rect x="670" y="199" width="8" height="8" fill="#00a34f"/><rect x="678" y="199" width="8" height="8" fill="#00a34d"/><rect x="686" y="199" width="8" height="8" fill="#00a34b"/><rect x="694" y="199" width="8" height="8" fill="#00a34a"/><rect x="702" y="199" width="8" height="8" fill="#00a348"/><rect x="710" y="199" width="8" height="8" fill="#00a346"/><rect x="718" y="199" width="8" height="8" fill="#00a344"/><rect x="726" y="199" width="8" height="8" fill="#00a342"/><rect x="734" y="199" width="8" height="8" fill="#00a340"/><rect x="742" y="199" width="8" height="8" fill="#00a33e"/><rect x="750" y="199" width="8" height="8" fill="#00a33c"/><rect x="758" y="199" width="8" height="8" fill="#00a33a"/><rect x="766" y="199" width="8" height="8" fill="#04a337"/><rect x="774" y="199" width="8" height="8" fill="#0fa335"/><rect x="782" y="199" width="8" height="8" fill="#1ba332"/><rect x="790" y="199" width="8" height="8" fill="#28a330"/><rect x="798" y="199" width="8" height="8" fill="#34a32d"/><rect x="806" y="199" width="8" height="8" fill="#42a32a"/><rect x="814" y="199" width="8" height="8" fill="#50a327"/><rect x="822" y="199" width="8" height="8" fill="#5fa324"/><rect x="830" y="199" width="8" height="8" fill="#6ea320"/><rect x="838" y="199" width="8" height="8" fill="#7ea31d"/><rect x="846" y="199" width="8" height="8" fill="#8fa319"/><rect x="854" y="199" width="8" height="8" fill="#a1a315"/><rect x="862" y="199" width="8" height="8" fill="#a39410"/><rect x="870" y="199" width="8" height="8" fill="#a3850b"/><rect x="878" y="199" width="8" height="8" fill="#a37906"/><rect x="886" y="199" width="8" height="8" fill="#a36e02"/><rect x="894" y="199" width="8" height="8" fill="#a36400"/><rect x="902" y="199" width="8" height="8" fill="#a35b00"/><rect x="910" y="199" width="8" height="8" fill="#a35400"/><rect x="918" y="199" width="8" height="8" fill="#a34d00"/><rect x="646" y="207" width="8" height="8" fill="#00a35c"/><rect x="654" y="207" width="8" height="8" fill="#00a35b"/><rect x="662" y="207" width="8" height="8" fill="#00a359"/><rect x="670" y="207" width="8" height="8" fill="#00a358"/><rect x="678" y="207" width="8" height="8" fill="#00a356"/><rect x="686" y="207" width="8" height="8" fill="#00a355"/><rect x="694" y="207" width="8" height="8" fill="#00a353"/><rect x="702" y="207" width="8" height="8" fill="#00a351"/><rect x="710" y="207" width="8" height="8" fill="#00a350"/><rect x="718" y="207" width="8" height="8" fill="#00a34e"/><rect x="726" y="207" width="8" height="8" fill="#00a34c"/><rect x="734" y="207" width="8" height="8" fill="#00a34a"/><rect x="742" y="207" width="8" height="8" fill="#00a348"/><rect x="750" y="207" width="8" height="8" fill="#00a346"/><rect x="758" y="207" width="8" height="8" fill="#00a343"/><rect x="766" y="207" width="8" height="8" fill="#07a341"/><rect x="774" y="207" width="8" height="8" fill="#14a33f"/><rect x="782" y="207" width="8" height="8" fill="#20a33c"/><rect x="790" y="207" width="8" height="8" fill="#2ea33a"/><rect x="798" y="207" width="8" height="8" fill="#3ca337"/><rect x="806" y="207" width="8" height="8" fill="#4aa334"/><rect x="814" y="207" width="8" height="8" fill="#5aa331"/><rect x="822" y="207" width="8" height="8" fill="#6aa32e"/><rect x="830" y="207" width="8" height="8" fill="#7ba32a"/><rect x="838" y="207" width="8" height="8" fill="#8ca327"/><rect x="846" y="207" width="8" height="8" fill="#9fa323"/><rect x="854" y="207" width="8" height="8" fill="#a3951c"/><rect x="862" y="207" width="8" height="8" fill="#a38516"/><rect x="870" y="207" width="8" height="8" fill="#a37811"/><rect x="878" y="207" width="8" height="8" fill="#a36c0c"/><rect x="886" y="207" width="8" height="8" fill="#a36208"/><rect x="894" y="207" width="8" height="8" fill="#a35a04"/><rect x="902" y="207" width="8" height="8" fill="#a35201"/><rect x="910" y="207" width="8" height="8" fill="#a34b00"/><rect x="918" y="207" width="8" height="8" fill="#a34500"/><rect x="926" y="207" width="8" height="8" fill="#a33f00"/><rect x="934" y="207" width="8" height="8" fill="#a33a00"/><rect x="646" y="215" width="8" height="8" fill="#00a366"/><rect x="654" y="215" width="8" height="8" fill="#00a364"/><rect x="662" y="215" width="8" height="8" fill="#00a363"/><rect x="670" y="215" width="8" height="8" fill="#00a362"/><rect x="678" y="215" width="8" height="8" fill="#00a360"/><rect x="686" y="215" width="8" height="8" fill="#00a35f"/><rect x="694" y="215" width="8" height="8" fill="#00a35d"/><rect x="702" y="215" width="8" height="8" fill="#00a35c"/><rect x="710" y="215" width="8" height="8" fill="#00a35a"/><rect x="718" y="215" width="8" height="8" fill="#00a358"/><rect x="726" y="215" width="8" height="8" fill="#00a357"/><rect x="734" y="215" width="8" height="8" fill="#00a355"/><rect x="742" y="215" width="8" height="8" fill="#00a353"/><rect x="750" y="215" width="8" height="8" fill="#00a351"/><rect x="758" y="215" width="8" height="8" fill="#00a34f"/><rect x="766" y="215" width="8" height="8" fill="#0ba34c"/><rect x="774" y="215" width="8" height="8" fill="#18a34a"/><rect x="782" y="215" width="8" height="8" fill="#26a348"/><rect x="790" y="215" width="8" height="8" fill="#35a345"/><rect x="798" y="215" width="8" height="8" fill="#44a342"/><rect x="806" y="215" width="8" height="8" fill="#54a33f"/><rect x="814" y="215" width="8" height="8" fill="#65a33d"/><rect x="822" y="215" width="8" height="8" fill="#76a339"/><rect x="830" y="215" width="8" height="8" fill="#89a336"/><rect x="838" y="215" width="8" height="8" fill="#9da333"/><rect x="846" y="215" width="8" height="8" fill="#a3962b"/><rect x="854" y="215" width="8" height="8" fill="#a38523"/><rect x="862" y="215" width="8" height="8" fill="#a3771c"/><rect x="870" y="215" width="8" height="8" fill="#a36b17"/><rect x="878" y="215" width="8" height="8" fill="#a36112"/><rect x="886" y="215" width="8" height="8" fill="#a3580d"/><rect x="894" y="215" width="8" height="8" fill="#a35009"/><rect x="902" y="215" width="8" height="8" fill="#a34806"/><rect x="910" y="215" width="8" height="8" fill="#a34203"/><rect x="918" y="215" width="8" height="8" fill="#a33c00"/><rect x="926" y="215" width="8" height="8" fill="#a33700"/><rect x="934" y="215" width="8" height="8" fill="#a33200"/><rect x="942" y="215" width="8" height="8" fill="#a32e00"/><rect x="654" y="223" width="8" height="8" fill="#00a36f"/><rect x="662" y="223" width="8" height="8" fill="#00a36e"/><rect x="670" y="223" width="8" height="8" fill="#00a36d"/><rect x="678" y="223" width="8" height="8" fill="#00a36c"/><rect x="686" y="223" width="8" height="8" fill="#00a36a"/><rect x="694" y="223" width="8" height="8" fill="#00a369"/><rect x="702" y="223" width="8" height="8" fill="#00a367"/><rect x="710" y="223" width="8" height="8" fill="#00a366"/><rect x="718" y="223" width="8" height="8" fill="#00a364"/><rect x="726" y="223" width="8" height="8" fill="#00a363"/><rect x="734" y="223" width="8" height="8" fill="#00a361"/><rect x="742" y="223" width="8" height="8" fill="#00a35f"/><rect x="750" y="223" width="8" height="8" fill="#00a35d"/><rect x="758" y="223" width="8" height="8" fill="#02a35b"/><rect x="766" y="223" width="8" height="8" fill="#10a359"/><rect x="774" y="223" width="8" height="8" fill="#1ea357"/><rect x="782" y="223" width="8" height="8" fill="#2da355"/><rect x="790" y="223" width="8" height="8" fill="#3da352"/><rect x="798" y="223" width="8" height="8" fill="#4da350"/><rect x="806" y="223" width="8" height="8" fill="#5fa34d"/><rect x="814" y="223" width="8" height="8" fill="#72a34a"/><rect x="822" y="223" width="8" height="8" fill="#85a347"/><rect x="830" y="223" width="8" height="8" fill="#9aa344"/><rect x="838" y="223" width="8" height="8" fill="#a3973c"/><rect x="846" y="223" width="8" height="8" fill="#a38532"/><rect x="854" y="223" width="8" height="8" fill="#a37629"/><rect x="862" y="223" width="8" height="8" fill="#a36a22"/><rect x="870" y="223" width="8" height="8" fill="#a35f1c"/><rect x="878" y="223" width="8" height="8" fill="#a35517"/><rect x="886" y="223" width="8" height="8" fill="#a34d12"/><rect x="894" y="223" width="8" height="8" fill="#a3460e"/><rect x="902" y="223" width="8" height="8" fill="#a33f0b"/><rect x="910" y="223" width="8" height="8" fill="#a33a07"/><rect x="918" y="223" width="8" height="8" fill="#a33404"/><rect x="926" y="223" width="8" height="8" fill="#a33002"/><rect x="934" y="223" width="8" height="8" fill="#a32b00"/><rect x="942" y="223" width="8" height="8" fill="#a32700"/><rect x="950" y="223" width="8" height="8" fill="#a32400"/><rect x="958" y="223" width="8" height="8" fill="#a32000"/><rect x="654" y="231" width="8" height="8" fill="#00a37b"/><rect x="662" y="231" width="8" height="8" fill="#00a37a"/><rect x="670" y="231" width="8" height="8" fill="#00a379"/><rect x="678" y="231" width="8" height="8" fill="#00a378"/><rect x="686" y="231" width="8" height="8" fill="#00a377"/><rect x="694" y="231" width="8" height="8" fill="#00a376"/><rect x="702" y="231" width="8" height="8" fill="#00a375"/><rect x="710" y="231" width="8" height="8" fill="#00a373"/><rect x="718" y="231" width="8" height="8" fill="#00a372"/><rect x="726" y="231" width="8" height="8" fill="#00a370"/><rect x="734" y="231" width="8" height="8" fill="#00a36f"/><rect x="742" y="231" width="8" height="8" fill="#00a36d"/><rect x="750" y="231" width="8" height="8" fill="#00a36c"/><rect x="758" y="231" width="8" height="8" fill="#06a36a"/><rect x="766" y="231" width="8" height="8" fill="#15a368"/><rect x="774" y="231" width="8" height="8" fill="#25a366"/><rect x="782" y="231" width="8" height="8" fill="#35a364"/><rect x="790" y="231" width="8" height="8" fill="#46a362"/><rect x="798" y="231" width="8" height="8" fill="#59a35f"/><rect x="806" y="231" width="8" height="8" fill="#6ca35d"/><rect x="814" y="231" width="8" height="8" fill="#81a35a"/><rect x="822" y="231" width="8" height="8" fill="#97a358"/><rect x="830" y="231" width="8" height="8" fill="#a3984f"/><rect x="838" y="231" width="8" height="8" fill="#a38542"/><rect x="846" y="231" width="8" height="8" fill="#a37538"/><rect x="854" y="231" width="8" height="8" fill="#a3682f"/><rect x="862" y="231" width="8" height="8" fill="#a35d28"/><rect x="870" y="231" width="8" height="8" fill="#a35322"/><rect x="878" y="231" width="8" height="8" fill="#a34a1c"/><rect x="886" y="231" width="8" height="8" fill="#a34317"/><rect x="894" y="231" width="8" height="8" fill="#a33c13"/><rect x="902" y="231" width="8" height="8" fill="#a3370f"/><rect x="910" y="231" width="8" height="8" fill="#a3310c"/><rect x="918" y="231" width="8" height="8" fill="#a32c09"/><rect x="926" y="231" width="8" height="8" fill="#a32806"/><rect x="934" y="231" width="8" height="8" fill="#a32403"/><rect x="942" y="231" width="8" height="8" fill="#a32101"/><rect x="950" y="231" width="8" height="8" fill="#a31d00"/><rect x="958" y="231" width="8" height="8" fill="#a31a00"/><rect x="966" y="231" width="8" height="8" fill="#a31700"/><rect x="654" y="239" width="8" height="8" fill="#00a389"/><rect x="662" y="239" width="8" height="8" fill="#00a388"/><rect x="670" y="239" width="8" height="8" fill="#00a387"/><rect x="678" y="239" width="8" height="8" fill="#00a387"/><rect x="686" y="239" width="8" height="8" fill="#00a386"/><rect x="694" y="239" width="8" height="8" fill="#00a385"/><rect x="702" y="239" width="8" height="8" fill="#00a384"/><rect x="710" y="239" width="8" height="8" fill="#00a383"/><rect x="718" y="239" width="8" height="8" fill="#00a381"/><rect x="726" y="239" width="8" height="8" fill="#00a380"/><rect x="734" y="239" width="8" height="8" fill="#00a37f"/><rect x="742" y="239" width="8" height="8" fill="#00a37e"/><rect x="750" y="239" width="8" height="8" fill="#00a37c"/><rect x="758" y="239" width="8" height="8" fill="#0ba37b"/><rect x="766" y="239" width="8" height="8" fill="#1ba379"/><rect x="774" y="239" width="8" height="8" fill="#2ca378"/><rect x="782" y="239" width="8" height="8" fill="#3ea376"/><rect x="790" y="239" width="8" height="8" fill="#52a374"/><rect x="798" y="239" width="8" height="8" fill="#66a372"/><rect x="806" y="239" width="8" height="8" fill="#7ca370"/><rect x="814" y="239" width="8" height="8" fill="#94a36e"/><rect x="822" y="239" width="8" height="8" fill="#a39a66"/><rect x="830" y="239" width="8" height="8" fill="#a38556"/><rect x="838" y="239" width="8" height="8" fill="#a37449"/><rect x="846" y="239" width="8" height="8" fill="#a3663e"/><rect x="854" y="239" width="8" height="8" fill="#a35a35"/><rect x="862" y="239" width="8" height="8" fill="#a3502e"/><rect x="870" y="239" width="8" height="8" fill="#a34827"/><rect x="878" y="239" width="8" height="8" fill="#a34021"/><rect x="886" y="239" width="8" height="8" fill="#a3391c"/><rect x="894" y="239" width="8" height="8" fill="#a33318"/><rect x="902" y="239" width="8" height="8" fill="#a32e14"/><rect x="910" y="239" width="8" height="8" fill="#a32910"/><rect x="918" y="239" width="8" height="8" fill="#a3250d"/><rect x="926" y="239" width="8" height="8" fill="#a3210a"/><rect x="934" y="239" width="8" height="8" fill="#a31d07"/><rect x="942" y="239" width="8" height="8" fill="#a31a04"/><rect x="950" y="239" width="8" height="8" fill="#a31702"/><rect x="958" y="239" width="8" height="8" fill="#a31400"/><rect x="966" y="239" width="8" height="8" fill="#a31200"/><rect x="974" y="239" width="8" height="8" fill="#a30f00"/><rect x="982" y="239" width="8" height="8" fill="#a30d00"/><rect x="654" y="247" width="8" height="8" fill="#00a399"/><rect x="662" y="247" width="8" height="8" fill="#00a398"/><rect x="670" y="247" width="8" height="8" fill="#00a397"/><rect x="678" y="247" width="8" height="8" fill="#00a397"/><rect x="686" y="247" width="8" height="8" fill="#00a396"/><rect x="694" y="247" width="8" height="8" fill="#00a396"/><rect x="702" y="247" width="8" height="8" fill="#00a395"/><rect x="710" y="247" width="8" height="8" fill="#00a394"/><rect x="718" y="247" width="8" height="8" fill="#00a394"/><rect x="726" y="247" width="8" height="8" fill="#00a393"/><rect x="734" y="247" width="8" height="8" fill="#00a392"/><rect x="742" y="247" width="8" height="8" fill="#00a391"/><rect x="750" y="247" width="8" height="8" fill="#00a390"/><rect x="758" y="247" width="8" height="8" fill="#10a38f"/><rect x="766" y="247" width="8" height="8" fill="#22a38e"/><rect x="774" y="247" width="8" height="8" fill="#35a38d"/><rect x="782" y="247" width="8" height="8" fill="#4aa38c"/><rect x="790" y="247" width="8" height="8" fill="#60a38b"/><rect x="798" y="247" width="8" height="8" fill="#77a389"/><rect x="806" y="247" width="8" height="8" fill="#90a388"/><rect x="814" y="247" width="8" height="8" fill="#a39c80"/><rect x="822" y="247" width="8" height="8" fill="#a3856c"/><rect x="830" y="247" width="8" height="8" fill="#a3735c"/><rect x="838" y="247" width="8" height="8" fill="#a3644f"/><rect x="846" y="247" width="8" height="8" fill="#a35844"/><rect x="854" y="247" width="8" height="8" fill="#a34d3b"/><rect x="862" y="247" width="8" height="8" fill="#a34433"/><rect x="870" y="247" width="8" height="8" fill="#a33d2c"/><rect x="878" y="247" width="8" height="8" fill="#a33626"/><rect x="886" y="247" width="8" height="8" fill="#a33021"/><rect x="894" y="247" width="8" height="8" fill="#a32a1c"/><rect x="902" y="247" width="8" height="8" fill="#a32618"/><rect x="910" y="247" width="8" height="8" fill="#a32114"/><rect x="918" y="247" width="8" height="8" fill="#a31d11"/><rect x="926" y="247" width="8" height="8" fill="#a31a0d"/><rect x="934" y="247" width="8" height="8" fill="#a3170b"/><rect x="942" y="247" width="8" height="8" fill="#a31408"/><rect x="950" y="247" width="8" height="8" fill="#a31106"/><rect x="958" y="247" width="8" height="8" fill="#a30f03"/><rect x="966" y="247" width="8" height="8" fill="#a30c01"/><rect x="974" y="247" width="8" height="8" fill="#a30a00"/><rect x="982" y="247" width="8" height="8" fill="#a30800"/><rect x="990" y="247" width="8" height="8" fill="#a30600"/><rect x="662" y="255" width="8" height="8" fill="#009da3"/><rect x="670" y="255" width="8" height="8" fill="#009da3"/><rect x="678" y="255" width="8" height="8" fill="#009da3"/><rect x="686" y="255" width="8" height="8" fill="#009da3"/><rect x="694" y="255" width="8" height="8" fill="#009da3"/><rect x="702" y="255" width="8" height="8" fill="#009da3"/><rect x="710" y="255" width="8" height="8" fill="#009ea3"/><rect x="718" y="255" width="8" height="8" fill="#009ea3"/><rect x="726" y="255" width="8" height="8" fill="#009ea3"/><rect x="734" y="255" width="8" height="8" fill="#009ea3"/><rect x="742" y="255" width="8" height="8" fill="#009ea3"/><rect x="750" y="255" width="8" height="8" fill="#049fa3"/><rect x="758" y="255" width="8" height="8" fill="#179fa3"/><rect x="766" y="255" width="8" height="8" fill="#2a9fa3"/><rect x="774" y="255" width="8" height="8" fill="#3fa0a3"/><rect x="782" y="255" width="8" height="8" fill="#56a0a3"/><rect x="790" y="255" width="8" height="8" fill="#6fa0a3"/><rect x="798" y="255" width="8" height="8" fill="#89a1a3"/><rect x="806" y="255" width="8" height="8" fill="#a39ea0"/><rect x="814" y="255" width="8" height="8" fill="#a38586"/><rect x="822" y="255" width="8" height="8" fill="#a37172"/><rect x="830" y="255" width="8" height="8" fill="#a36262"/><rect x="838" y="255" width="8" height="8" fill="#a35555"/><rect x="846" y="255" width="8" height="8" fill="#a34a4a"/><rect x="854" y="255" width="8" height="8" fill="#a34140"/><rect x="862" y="255" width="8" height="8" fill="#a33938"/><rect x="870" y="255" width="8" height="8" fill="#a33231"/><rect x="878" y="255" width="8" height="8" fill="#a32c2b"/><rect x="886" y="255" width="8" height="8" fill="#a32725"/><rect x="894" y="255" width="8" height="8" fill="#a32220"/><rect x="902" y="255" width="8" height="8" fill="#a31e1c"/><rect x="910" y="255" width="8" height="8" fill="#a31a18"/><rect x="918" y="255" width="8" height="8" fill="#a31614"/><rect x="926" y="255" width="8" height="8" fill="#a31311"/><rect x="934" y="255" width="8" height="8" fill="#a3100e"/><rect x="942" y="255" width="8" height="8" fill="#a30e0b"/><rect x="950" y="255" width="8" height="8" fill="#a30b09"/><rect x="958" y="255" width="8" height="8" fill="#a30907"/><rect x="966" y="255" width="8" height="8" fill="#a30705"/><rect x="974" y="255" width="8" height="8" fill="#a30503"/><rect x="982" y="255" width="8" height="8" fill="#a30301"/><rect x="990" y="255" width="8" height="8" fill="#a30100"/><rect x="998" y="255" width="8" height="8" fill="#a30000"/><rect x="1006" y="255" width="8" height="8" fill="#a30000"/><rect x="662" y="263" width="8" height="8" fill="#008ca3"/><rect x="670" y="263" width="8" height="8" fill="#008ba3"/><rect x="678" y="263" width="8" height="8" fill="#008ba3"/><rect x="686" y="263" width="8" height="8" fill="#008ba3"/><rect x="694" y="263" width="8" height="8" fill="#008aa3"/><rect x="702" y="263" width="8" height="8" fill="#008aa3"/><rect x="710" y="263" width="8" height="8" fill="#008aa3"/><rect x="718" y="263" width="8" height="8" fill="#0089a3"/><rect x="726" y="263" width="8" height="8" fill="#0089a3"/><rect x="734" y="263" width="8" height="8" fill="#0088a3"/><rect x="742" y="263" width="8" height="8" fill="#0088a3"/><rect x="750" y="263" width="8" height="8" fill="#0987a3"/><rect x="758" y="263" width="8" height="8" fill="#1a87a3"/><rect x="766" y="263" width="8" height="8" fill="#2d86a3"/><rect x="774" y="263" width="8" height="8" fill="#4086a3"/><rect x="782" y="263" width="8" height="8" fill="#5685a3"/><rect x="790" y="263" width="8" height="8" fill="#6d84a3"/><rect x="798" y="263" width="8" height="8" fill="#8684a3"/><rect x="806" y="263" width="8" height="8" fill="#a183a3"/><rect x="814" y="263" width="8" height="8" fill="#a3708c"/><rect x="822" y="263" width="8" height="8" fill="#a35f78"/><rect x="830" y="263" width="8" height="8" fill="#a35168"/><rect x="838" y="263" width="8" height="8" fill="#a3465a"/><rect x="846" y="263" width="8" height="8" fill="#a33d4f"/><rect x="854" y="263" width="8" height="8" fill="#a33545"/><rect x="862" y="263" width="8" height="8" fill="#a32e3d"/><rect x="870" y="263" width="8" height="8" fill="#a32836"/><rect x="878" y="263" width="8" height="8" fill="#a3222f"/><rect x="886" y="263" width="8" height="8" fill="#a31e2a"/><rect x="894" y="263" width="8" height="8" fill="#a31925"/><rect x="902" y="263" width="8" height="8" fill="#a31620"/><rect x="910" y="263" width="8" height="8" fill="#a3121c"/><rect x="918" y="263" width="8" height="8" fill="#a30f18"/><rect x="926" y="263" width="8" height="8" fill="#a30c15"/><rect x="934" y="263" width="8" height="8" fill="#a30a12"/><rect x="942" y="263" width="8" height="8" fill="#a3070f"/><rect x="950" y="263" width="8" height="8" fill="#a3050c"/><rect x="958" y="263" width="8" height="8" fill="#a3030a"/><rect x="966" y="263" width="8" height="8" fill="#a30108"/><rect x="974" y="263" width="8" height="8" fill="#a30006"/><rect x="982" y="263" width="8" height="8" fill="#a30004"/><rect x="990" y="263" width="8" height="8" fill="#a30002"/><rect x="998" y="263" width="8" height="8" fill="#a30000"/><rect x="1006" y="263" width="8" height="8" fill="#a30000"/><rect x="1014" y="263" width="8" height="8" fill="#a30000"/><rect x="662" y="271" width="8" height="8" fill="#007ca3"/><rect x="670" y="271" width="8" height="8" fill="#007ba3"/><rect x="678" y="271" width="8" height="8" fill="#007aa3"/><rect x="686" y="271" width="8" height="8" fill="#007aa3"/><rect x="694" y="271" width="8" height="8" fill="#0079a3"/><rect x="702" y="271" width="8" height="8" fill="#0078a3"/><rect x="710" y="271" width="8" height="8" fill="#0077a3"/><rect x="718" y="271" width="8" height="8" fill="#0077a3"/><rect x="726" y="271" width="8" height="8" fill="#0076a3"/><rect x="734" y="271" width="8" height="8" fill="#0075a3"/><rect x="742" y="271" width="8" height="8" fill="#0074a3"/><rect x="750" y="271" width="8" height="8" fill="#0c73a3"/><rect x="758" y="271" width="8" height="8" fill="#1d71a3"/><rect x="766" y="271" width="8" height="8" fill="#2f70a3"/><rect x="774" y="271" width="8" height="8" fill="#426fa3"/><rect x="782" y="271" width="8" height="8" fill="#566da3"/><rect x="790" y="271" width="8" height="8" fill="#6b6ca3"/><rect x="798" y="271" width="8" height="8" fill="#836aa3"/><rect x="806" y="271" width="8" height="8" fill="#9c69a3"/><rect x="814" y="271" width="8" height="8" fill="#a35c92"/><rect x="822" y="271" width="8" height="8" fill="#a34d7e"/><rect x="830" y="271" width="8" height="8" fill="#a3426d"/><rect x="838" y="271" width="8" height="8" fill="#a3385f"/><rect x="846" y="271" width="8" height="8" fill="#a33054"/><rect x="854" y="271" width="8" height="8" fill="#a3294a"/><rect x="862" y="271" width="8" height="8" fill="#a32342"/><rect x="870" y="271" width="8" height="8" fill="#a31e3a"/><rect x="878" y="271" width="8" height="8" fill="#a31934"/><rect x="886" y="271" width="8" height="8" fill="#a3152e"/><rect x="894" y="271" width="8" height="8" fill="#a31129"/><rect x="902" y="271" width="8" height="8" fill="#a30e24"/><rect x="910" y="271" width="8" height="8" fill="#a30b20"/><rect x="918" y="271" width="8" height="8" fill="#a3081c"/><rect x="926" y="271" width="8" height="8" fill="#a30618"/><rect x="934" y="271" width="8" height="8" fill="#a30415"/><rect x="942" y="271" width="8" height="8" fill="#a30212"/><rect x="950" y="271" width="8" height="8" fill="#a3000f"/><rect x="958" y="271" width="8" height="8" fill="#a3000d"/><rect x="966" y="271" width="8" height="8" fill="#a3000b"/><rect x="974" y="271" width="8" height="8" fill="#a30008"/><rect x="982" y="271" width="8" height="8" fill="#a30006"/><rect x="990" y="271" width="8" height="8" fill="#a30005"/><rect x="998" y="271" width="8" height="8" fill="#a30003"/><rect x="1006" y="271" width="8" height="8" fill="#a30001"/><rect x="1014" y="271" width="8" height="8" fill="#a30000"/><rect x="1022" y="271" width="8" height="8" fill="#a30000"/><rect x="670" y="279" width="8" height="8" fill="#006ca3"/><rect x="678" y="279" width="8" height="8" fill="#006ba3"/><rect x="686" y="279" width="8" height="8" fill="#006aa3"/><rect x="694" y="279" width="8" height="8" fill="#0069a3"/><rect x="702" y="279" width="8" height="8" fill="#0068a3"/><rect x="710" y="279" width="8" height="8" fill="#0067a3"/><rect x="718" y="279" width="8" height="8" fill="#0065a3"/><rect x="726" y="279" width="8" height="8" fill="#0064a3"/><rect x="734" y="279" width="8" height="8" fill="#0063a3"/><rect x="742" y="279" width="8" height="8" fill="#0161a3"/><rect x="750" y="279" width="8" height="8" fill="#1060a3"/><rect x="758" y="279" width="8" height="8" fill="#205ea3"/><rect x="766" y="279" width="8" height="8" fill="#315ca3"/><rect x="774" y="279" width="8" height="8" fill="#425aa3"/><rect x="782" y="279" width="8" height="8" fill="#5658a3"/><rect x="790" y="279" width="8" height="8" fill="#6a56a3"/><rect x="798" y="279" width="8" height="8" fill="#8054a3"/><rect x="806" y="279" width="8" height="8" fill="#9752a3"/><rect x="814" y="279" width="8" height="8" fill="#a34997"/><rect x="822" y="279" width="8" height="8" fill="#a33d83"/><rect x="830" y="279" width="8" height="8" fill="#a33372"/><rect x="838" y="279" width="8" height="8" fill="#a32b65"/><rect x="846" y="279" width="8" height="8" fill="#a32459"/><rect x="854" y="279" width="8" height="8" fill="#a31e4f"/><rect x="862" y="279" width="8" height="8" fill="#a31946"/><rect x="870" y="279" width="8" height="8" fill="#a3143f"/><rect x="878" y="279" width="8" height="8" fill="#a31038"/><rect x="886" y="279" width="8" height="8" fill="#a30d32"/><rect x="894" y="279" width="8" height="8" fill="#a3092d"/><rect x="902" y="279" width="8" height="8" fill="#a30728"/><rect x="910" y="279" width="8" height="8" fill="#a30423"/><rect x="918" y="279" width="8" height="8" fill="#a3021f"/><rect x="926" y="279" width="8" height="8" fill="#a3001c"/><rect x="934" y="279" width="8" height="8" fill="#a30019"/><rect x="942" y="279" width="8" height="8" fill="#a30015"/><rect x="950" y="279" width="8" height="8" fill="#a30013"/><rect x="958" y="279" width="8" height="8" fill="#a30010"/><rect x="966" y="279" width="8" height="8" fill="#a3000e"/><rect x="974" y="279" width="8" height="8" fill="#a3000b"/><rect x="982" y="279" width="8" height="8" fill="#a30009"/><rect x="990" y="279" width="8" height="8" fill="#a30007"/><rect x="998" y="279" width="8" height="8" fill="#a30005"/><rect x="1006" y="279" width="8" height="8" fill="#a30004"/><rect x="1014" y="279" width="8" height="8" fill="#a30002"/><rect x="1022" y="279" width="8" height="8" fill="#a30001"/><rect x="670" y="287" width="8" height="8" fill="#005ea3"/><rect x="678" y="287" width="8" height="8" fill="#005da3"/><rect x="686" y="287" width="8" height="8" fill="#005ca3"/><rect x="694" y="287" width="8" height="8" fill="#005aa3"/><rect x="702" y="287" width="8" height="8" fill="#0059a3"/><rect x="710" y="287" width="8" height="8" fill="#0057a3"/><rect x="718" y="287" width="8" height="8" fill="#0056a3"/><rect x="726" y="287" width="8" height="8" fill="#0054a3"/><rect x="734" y="287" width="8" height="8" fill="#0052a3"/><rect x="742" y="287" width="8" height="8" fill="#0551a3"/><rect x="750" y="287" width="8" height="8" fill="#134fa3"/><rect x="758" y="287" width="8" height="8" fill="#224da3"/><rect x="766" y="287" width="8" height="8" fill="#324aa3"/><rect x="774" y="287" width="8" height="8" fill="#4348a3"/><rect x="782" y="287" width="8" height="8" fill="#5546a3"/><rect x="790" y="287" width="8" height="8" fill="#6943a3"/><rect x="798" y="287" width="8" height="8" fill="#7d40a3"/><rect x="806" y="287" width="8" height="8" fill="#933da3"/><rect x="814" y="287" width="8" height="8" fill="#a3379c"/><rect x="822" y="287" width="8" height="8" fill="#a32d88"/><rect x="830" y="287" width="8" height="8" fill="#a32577"/><rect x="838" y="287" width="8" height="8" fill="#a31e69"/><rect x="846" y="287" width="8" height="8" fill="#a3185e"/><rect x="854" y="287" width="8" height="8" fill="#a31353"/><rect x="862" y="287" width="8" height="8" fill="#a30f4b"/><rect x="870" y="287" width="8" height="8" fill="#a30b43"/><rect x="878" y="287" width="8" height="8" fill="#a3083c"/><rect x="886" y="287" width="8" height="8" fill="#a30536"/><rect x="894" y="287" width="8" height="8" fill="#a30230"/><rect x="902" y="287" width="8" height="8" fill="#a3002b"/><rect x="910" y="287" width="8" height="8" fill="#a30027"/><rect x="918" y="287" width="8" height="8" fill="#a30023"/><rect x="926" y="287" width="8" height="8" fill="#a3001f"/><rect x="934" y="287" width="8" height="8" fill="#a3001c"/><rect x="942" y="287" width="8" height="8" fill="#a30019"/><rect x="950" y="287" width="8" height="8" fill="#a30016"/><rect x="958" y="287" width="8" height="8" fill="#a30013"/><rect x="966" y="287" width="8" height="8" fill="#a30011"/><rect x="974" y="287" width="8" height="8" fill="#a3000e"/><rect x="982" y="287" width="8" height="8" fill="#a3000c"/><rect x="990" y="287" width="8" height="8" fill="#a3000a"/><rect x="998" y="287" width="8" height="8" fill="#a30008"/><rect x="1006" y="287" width="8" height="8" fill="#a30006"/><rect x="1014" y="287" width="8" height="8" fill="#a30005"/><rect x="670" y="295" width="8" height="8" fill="#0051a3"/><rect x="678" y="295" width="8" height="8" fill="#0050a3"/><rect x="686" y="295" width="8" height="8" fill="#004ea3"/><rect x="694" y="295" width="8" height="8" fill="#004da3"/><rect x="702" y="295" width="8" height="8" fill="#004ba3"/><rect x="710" y="295" width="8" height="8" fill="#0049a3"/><rect x="718" y="295" width="8" height="8" fill="#0047a3"/><rect x="726" y="295" width="8" height="8" fill="#0045a3"/><rect x="734" y="295" width="8" height="8" fill="#0043a3"/><rect x="742" y="295" width="8" height="8" fill="#0841a3"/><rect x="750" y="295" width="8" height="8" fill="#163fa3"/><rect x="758" y="295" width="8" height="8" fill="#243da3"/><rect x="766" y="295" width="8" height="8" fill="#343aa3"/><rect x="774" y="295" width="8" height="8" fill="#4437a3"/><rect x="782" y="295" width="8" height="8" fill="#5535a3"/><rect x="790" y="295" width="8" height="8" fill="#6831a3"/><rect x="798" y="295" width="8" height="8" fill="#7b2ea3"/><rect x="806" y="295" width="8" height="8" fill="#902ba3"/><rect x="814" y="295" width="8" height="8" fill="#a327a0"/><rect x="822" y="295" width="8" height="8" fill="#a31e8c"/><rect x="830" y="295" width="8" height="8" fill="#a3187c"/><rect x="838" y="295" width="8" height="8" fill="#a3126e"/><rect x="846" y="295" width="8" height="8" fill="#a30d62"/><rect x="854" y="295" width="8" height="8" fill="#a30958"/><rect x="862" y="295" width="8" height="8" fill="#a3054f"/><rect x="870" y="295" width="8" height="8" fill="#a30247"/><rect x="878" y="295" width="8" height="8" fill="#a30040"/><rect x="886" y="295" width="8" height="8" fill="#a3003a"/><rect x="894" y="295" width="8" height="8" fill="#a30034"/><rect x="902" y="295" width="8" height="8" fill="#a3002f"/><rect x="910" y="295" width="8" height="8" fill="#a3002a"/><rect x="918" y="295" width="8" height="8" fill="#a30026"/><rect x="926" y="295" width="8" height="8" fill="#a30022"/><rect x="934" y="295" width="8" height="8" fill="#a3001f"/><rect x="942" y="295" width="8" height="8" fill="#a3001c"/><rect x="950" y="295" width="8" height="8" fill="#a30019"/><rect x="958" y="295" width="8" height="8" fill="#a30016"/><rect x="966" y="295" width="8" height="8" fill="#a30013"/><rect x="974" y="295" width="8" height="8" fill="#a30011"/><rect x="982" y="295" width="8" height="8" fill="#a3000f"/><rect x="990" y="295" width="8" height="8" fill="#a3000d"/><rect x="678" y="303" width="8" height="8" fill="#0044a3"/><rect x="686" y="303" width="8" height="8" fill="#0042a3"/><rect x="694" y="303" width="8" height="8" fill="#0040a3"/><rect x="702" y="303" width="8" height="8" fill="#003ea3"/><rect x="710" y="303" width="8" height="8" fill="#003ca3"/><rect x="718" y="303" width="8" height="8" fill="#003aa3"/><rect x="726" y="303" width="8" height="8" fill="#0038a3"/><rect x="734" y="303" width="8" height="8" fill="#0036a3"/><rect x="742" y="303" width="8" height="8" fill="#0b33a3"/><rect x="750" y="303" width="8" height="8" fill="#1831a3"/><rect x="758" y="303" width="8" height="8" fill="#262ea3"/><rect x="766" y="303" width="8" height="8" fill="#352ba3"/><rect x="774" y="303" width="8" height="8" fill="#4528a3"/><rect x="782" y="303" width="8" height="8" fill="#5525a3"/><rect x="790" y="303" width="8" height="8" fill="#6722a3"/><rect x="798" y="303" width="8" height="8" fill="#791ea3"/><rect x="806" y="303" width="8" height="8" fill="#8d1ba3"/><rect x="814" y="303" width="8" height="8" fill="#a217a3"/><rect x="822" y="303" width="8" height="8" fill="#a31091"/><rect x="830" y="303" width="8" height="8" fill="#a30b80"/><rect x="838" y="303" width="8" height="8" fill="#a30672"/><rect x="846" y="303" width="8" height="8" fill="#a30266"/><rect x="854" y="303" width="8" height="8" fill="#a3005c"/><rect x="862" y="303" width="8" height="8" fill="#a30053"/><rect x="870" y="303" width="8" height="8" fill="#a3004b"/><rect x="878" y="303" width="8" height="8" fill="#a30044"/><rect x="886" y="303" width="8" height="8" fill="#a3003d"/><rect x="894" y="303" width="8" height="8" fill="#a30038"/><rect x="902" y="303" width="8" height="8" fill="#a30033"/><rect x="910" y="303" width="8" height="8" fill="#a3002e"/><rect x="918" y="303" width="8" height="8" fill="#a3002a"/><rect x="926" y="303" width="8" height="8" fill="#a30026"/><rect x="934" y="303" width="8" height="8" fill="#a30022"/><rect x="942" y="303" width="8" height="8" fill="#a3001f"/><rect x="950" y="303" width="8" height="8" fill="#a3001c"/><rect x="958" y="303" width="8" height="8" fill="#a30019"/><rect x="966" y="303" width="8" height="8" fill="#a30016"/><rect x="678" y="311" width="8" height="8" fill="#0038a3"/><rect x="686" y="311" width="8" height="8" fill="#0036a3"/><rect x="694" y="311" width="8" height="8" fill="#0034a3"/><rect x="702" y="311" width="8" height="8" fill="#0032a3"/><rect x="710" y="311" width="8" height="8" fill="#0030a3"/><rect x="718" y="311" width="8" height="8" fill="#002ea3"/><rect x="726" y="311" width="8" height="8" fill="#002ba3"/><rect x="734" y="311" width="8" height="8" fill="#0229a3"/><rect x="742" y="311" width="8" height="8" fill="#0e26a3"/><rect x="750" y="311" width="8" height="8" fill="#1b24a3"/><rect x="758" y="311" width="8" height="8" fill="#2821a3"/><rect x="766" y="311" width="8" height="8" fill="#371ea3"/><rect x="774" y="311" width="8" height="8" fill="#451aa3"/><rect x="782" y="311" width="8" height="8" fill="#5517a3"/><rect x="790" y="311" width="8" height="8" fill="#6614a3"/><rect x="798" y="311" width="8" height="8" fill="#7710a3"/><rect x="806" y="311" width="8" height="8" fill="#8a0ca3"/><rect x="814" y="311" width="8" height="8" fill="#9e08a3"/><rect x="822" y="311" width="8" height="8" fill="#a30395"/><rect x="830" y="311" width="8" height="8" fill="#a30085"/><rect x="838" y="311" width="8" height="8" fill="#a30077"/><rect x="846" y="311" width="8" height="8" fill="#a3006a"/><rect x="854" y="311" width="8" height="8" fill="#a30060"/><rect x="862" y="311" width="8" height="8" fill="#a30057"/><rect x="870" y="311" width="8" height="8" fill="#a3004f"/><rect x="878" y="311" width="8" height="8" fill="#a30048"/><rect x="886" y="311" width="8" height="8" fill="#a30041"/><rect x="894" y="311" width="8" height="8" fill="#a3003b"/><rect x="902" y="311" width="8" height="8" fill="#a30036"/><rect x="910" y="311" width="8" height="8" fill="#a30031"/><rect x="918" y="311" width="8" height="8" fill="#a3002d"/><rect x="926" y="311" width="8" height="8" fill="#a30029"/><rect x="934" y="311" width="8" height="8" fill="#a30025"/><rect x="942" y="311" width="8" height="8" fill="#a30022"/><rect x="686" y="319" width="8" height="8" fill="#002ca3"/><rect x="694" y="319" width="8" height="8" fill="#0029a3"/><rect x="702" y="319" width="8" height="8" fill="#0027a3"/><rect x="710" y="319" width="8" height="8" fill="#0025a3"/><rect x="718" y="319" width="8" height="8" fill="#0022a3"/><rect x="726" y="319" width="8" height="8" fill="#0020a3"/><rect x="734" y="319" width="8" height="8" fill="#051da3"/><rect x="742" y="319" width="8" height="8" fill="#111aa3"/><rect x="750" y="319" width="8" height="8" fill="#1d17a3"/><rect x="758" y="319" width="8" height="8" fill="#2a14a3"/><rect x="766" y="319" width="8" height="8" fill="#3811a3"/><rect x="774" y="319" width="8" height="8" fill="#460ea3"/><rect x="782" y="319" width="8" height="8" fill="#550aa3"/><rect x="790" y="319" width="8" height="8" fill="#6507a3"/><rect x="798" y="319" width="8" height="8" fill="#7603a3"/><rect x="806" y="319" width="8" height="8" fill="#8700a3"/><rect x="814" y="319" width="8" height="8" fill="#9a00a3"/><rect x="822" y="319" width="8" height="8" fill="#a30099"/><rect x="830" y="319" width="8" height="8" fill="#a30089"/><rect x="838" y="319" width="8" height="8" fill="#a3007b"/><rect x="846" y="319" width="8" height="8" fill="#a3006e"/><rect x="854" y="319" width="8" height="8" fill="#a30064"/><rect x="862" y="319" width="8" height="8" fill="#a3005b"/><rect x="870" y="319" width="8" height="8" fill="#a30052"/><rect x="878" y="319" width="8" height="8" fill="#a3004b"/><rect x="886" y="319" width="8" height="8" fill="#a30045"/><rect x="894" y="319" width="8" height="8" fill="#a3003f"/><rect x="902" y="319" width="8" height="8" fill="#a30039"/><rect x="910" y="319" width="8" height="8" fill="#a30035"/><rect x="918" y="319" width="8" height="8" fill="#a30030"/><rect x="686" y="327" width="8" height="8" fill="#0021a3"/><rect x="694" y="327" width="8" height="8" fill="#001fa3"/><rect x="702" y="327" width="8" height="8" fill="#001da3"/><rect x="710" y="327" width="8" height="8" fill="#001aa3"/><rect x="718" y="327" width="8" height="8" fill="#0018a3"/><rect x="726" y="327" width="8" height="8" fill="#0015a3"/><rect x="734" y="327" width="8" height="8" fill="#0812a3"/><rect x="742" y="327" width="8" height="8" fill="#130fa3"/><rect x="750" y="327" width="8" height="8" fill="#1f0ca3"/><rect x="758" y="327" width="8" height="8" fill="#2c09a3"/><rect x="766" y="327" width="8" height="8" fill="#3906a3"/><rect x="774" y="327" width="8" height="8" fill="#4702a3"/><rect x="782" y="327" width="8" height="8" fill="#5500a3"/><rect x="790" y="327" width="8" height="8" fill="#6400a3"/><rect x="798" y="327" width="8" height="8" fill="#7400a3"/><rect x="806" y="327" width="8" height="8" fill="#8500a3"/><rect x="814" y="327" width="8" height="8" fill="#9700a3"/><rect x="822" y="327" width="8" height="8" fill="#a3009d"/><rect x="830" y="327" width="8" height="8" fill="#a3008d"/><rect x="838" y="327" width="8" height="8" fill="#a3007e"/><rect x="846" y="327" width="8" height="8" fill="#a30072"/><rect x="854" y="327" width="8" height="8" fill="#a30068"/><rect x="862" y="327" width="8" height="8" fill="#a3005e"/><rect x="870" y="327" width="8" height="8" fill="#a30056"/><rect x="878" y="327" width="8" height="8" fill="#a3004f"/><rect x="886" y="327" width="8" height="8" fill="#a30048"/><rect x="694" y="335" width="8" height="8" fill="#0016a3"/><rect x="702" y="335" width="8" height="8" fill="#0013a3"/><rect x="710" y="335" width="8" height="8" fill="#0011a3"/><rect x="718" y="335" width="8" height="8" fill="#000ea3"/><rect x="726" y="335" width="8" height="8" fill="#000ba3"/><rect x="734" y="335" width="8" height="8" fill="#0a08a3"/><rect x="742" y="335" width="8" height="8" fill="#1505a3"/><rect x="750" y="335" width="8" height="8" fill="#2102a3"/><rect x="758" y="335" width="8" height="8" fill="#2d00a3"/><rect x="766" y="335" width="8" height="8" fill="#3a00a3"/><rect x="774" y="335" width="8" height="8" fill="#4700a3"/><rect x="782" y="335" width="8" height="8" fill="#5500a3"/><rect x="790" y="335" width="8" height="8" fill="#6400a3"/><rect x="798" y="335" width="8" height="8" fill="#7300a3"/><rect x="806" y="335" width="8" height="8" fill="#8300a3"/><rect x="814" y="335" width="8" height="8" fill="#9400a3"/><rect x="822" y="335" width="8" height="8" fill="#a300a1"/><rect x="830" y="335" width="8" height="8" fill="#a30090"/><rect x="838" y="335" width="8" height="8" fill="#a30082"/><rect x="846" y="335" width="8" height="8" fill="#a30076"/><rect x="854" y="335" width="8" height="8" fill="#a3006b"/><rect x="862" y="335" width="8" height="8" fill="#a30062"/><rect x="694" y="343" width="8" height="8" fill="#000da3"/><rect x="702" y="343" width="8" height="8" fill="#000aa3"/><rect x="710" y="343" width="8" height="8" fill="#0007a3"/><rect x="718" y="343" width="8" height="8" fill="#0005a3"/><rect x="726" y="343" width="8" height="8" fill="#0202a3"/><rect x="734" y="343" width="8" height="8" fill="#0d00a3"/><rect x="742" y="343" width="8" height="8" fill="#1800a3"/><rect x="750" y="343" width="8" height="8" fill="#2300a3"/><rect x="758" y="343" width="8" height="8" fill="#2f00a3"/><rect x="766" y="343" width="8" height="8" fill="#3b00a3"/><rect x="774" y="343" width="8" height="8" fill="#4800a3"/><rect x="782" y="343" width="8" height="8" fill="#5500a3"/><rect x="790" y="343" width="8" height="8" fill="#6300a3"/><rect x="798" y="343" width="8" height="8" fill="#7200a3"/><rect x="806" y="343" width="8" height="8" fill="#8100a3"/><rect x="814" y="343" width="8" height="8" fill="#9100a3"/><rect x="822" y="343" width="8" height="8" fill="#a200a3"/><rect x="830" y="343" width="8" height="8" fill="#a30094"/><rect x="838" y="343" width="8" height="8" fill="#a30086"/><rect x="702" y="351" width="8" height="8" fill="#0001a3"/><rect x="710" y="351" width="8" height="8" fill="#0000a3"/><rect x="718" y="351" width="8" height="8" fill="#0000a3"/><rect x="726" y="351" width="8" height="8" fill="#0500a3"/><rect x="734" y="351" width="8" height="8" fill="#0f00a3"/><rect x="742" y="351" width="8" height="8" fill="#1900a3"/><rect x="750" y="351" width="8" height="8" fill="#2400a3"/><rect x="758" y="351" width="8" height="8" fill="#3000a3"/><rect x="766" y="351" width="8" height="8" fill="#3c00a3"/><rect x="774" y="351" width="8" height="8" fill="#4800a3"/><rect x="782" y="351" width="8" height="8" fill="#5500a3"/><rect x="790" y="351" width="8" height="8" fill="#6200a3"/><rect x="798" y="351" width="8" height="8" fill="#7000a3"/><rect x="806" y="351" width="8" height="8" fill="#7f00a3"/><rect x="814" y="351" width="8" height="8" fill="#8f00a3"/><rect x="710" y="359" width="8" height="8" fill="#0000a3"/><rect x="718" y="359" width="8" height="8" fill="#0000a3"/><rect x="726" y="359" width="8" height="8" fill="#0700a3"/><rect x="734" y="359" width="8" height="8" fill="#1100a3"/><rect x="742" y="359" width="8" height="8" fill="#1b00a3"/><rect x="750" y="359" width="8" height="8" fill="#2600a3"/><rect x="758" y="359" width="8" height="8" fill="#3100a3"/><rect x="766" y="359" width="8" height="8" fill="#3c00a3"/><rect x="774" y="359" width="8" height="8" fill="#4800a3"/><rect x="782" y="359" width="8" height="8" fill="#5500a3"/><rect x="790" y="359" width="8" height="8" fill="#6200a3"/><rect x="718" y="367" width="8" height="8" fill="#0000a3"/><rect x="726" y="367" width="8" height="8" fill="#0900a3"/><rect x="734" y="367" width="8" height="8" fill="#1200a3"/><rect x="742" y="367" width="8" height="8" fill="#1c00a3"/><rect x="750" y="367" width="8" height="8" fill="#2700a3"/><rect x="758" y="367" width="8" height="8" fill="#3200a3"/><rect x="734" y="375" width="8" height="8" fill="#1200a3"/></g></g><clipPath id="cT"><path d="M993.1 261.5 L785.2 136.6 L727.5 349.2Z"/></clipPath><filter id="fT" x="-5%" y="-5%" width="110%" height="110%"><feGaussianBlur stdDeviation="3.75"/></filter><g clip-path="url(#cT)"><g filter="url(#fT)"><rect x="777" y="131" width="5" height="5" fill="#00ff00"/><rect x="782" y="131" width="5" height="5" fill="#00ff00"/><rect x="787" y="131" width="5" height="5" fill="#05ff00"/><rect x="792" y="131" width="5" height="5" fill="#0dff00"/><rect x="777" y="136" width="5" height="5" fill="#00ff04"/><rect x="782" y="136" width="5" height="5" fill="#00ff02"/><rect x="787" y="136" width="5" height="5" fill="#07ff00"/><rect x="792" y="136" width="5" height="5" fill="#0fff00"/><rect x="797" y="136" width="5" height="5" fill="#17ff00"/><rect x="777" y="141" width="5" height="5" fill="#00ff08"/><rect x="782" y="141" width="5" height="5" fill="#00ff04"/><rect x="787" y="141" width="5" height="5" fill="#06ff00"/><rect x="792" y="141" width="5" height="5" fill="#10ff00"/><rect x="797" y="141" width="5" height="5" fill="#19ff00"/><rect x="802" y="141" width="5" height="5" fill="#22ff00"/><rect x="807" y="141" width="5" height="5" fill="#2aff00"/><rect x="772" y="146" width="5" height="5" fill="#00ff0f"/><rect x="777" y="146" width="5" height="5" fill="#00ff0d"/><rect x="782" y="146" width="5" height="5" fill="#00ff06"/><rect x="787" y="146" width="5" height="5" fill="#05ff00"/><rect x="792" y="146" width="5" height="5" fill="#0fff00"/><rect x="797" y="146" width="5" height="5" fill="#1aff00"/><rect x="802" y="146" width="5" height="5" fill="#25ff00"/><rect x="807" y="146" width="5" height="5" fill="#2dff00"/><rect x="812" y="146" width="5" height="5" fill="#36ff00"/><rect x="817" y="146" width="5" height="5" fill="#3fff00"/><rect x="772" y="151" width="5" height="5" fill="#00ff14"/><rect x="777" y="151" width="5" height="5" fill="#00ff11"/><rect x="782" y="151" width="5" height="5" fill="#00ff09"/><rect x="787" y="151" width="5" height="5" fill="#03ff01"/><rect x="792" y="151" width="5" height="5" fill="#0eff00"/><rect x="797" y="151" width="5" height="5" fill="#19ff00"/><rect x="802" y="151" width="5" height="5" fill="#24ff00"/><rect x="807" y="151" width="5" height="5" fill="#2fff00"/><rect x="812" y="151" width="5" height="5" fill="#3aff00"/><rect x="817" y="151" width="5" height="5" fill="#43ff00"/><rect x="822" y="151" width="5" height="5" fill="#4dff00"/><rect x="772" y="156" width="5" height="5" fill="#00ff18"/><rect x="777" y="156" width="5" height="5" fill="#00ff16"/><rect x="782" y="156" width="5" height="5" fill="#00ff0c"/><rect x="787" y="156" width="5" height="5" fill="#01ff01"/><rect x="792" y="156" width="5" height="5" fill="#0dff01"/><rect x="797" y="156" width="5" height="5" fill="#18ff01"/><rect x="802" y="156" width="5" height="5" fill="#24ff00"/><rect x="807" y="156" width="5" height="5" fill="#30ff00"/><rect x="812" y="156" width="5" height="5" fill="#3bff00"/><rect x="817" y="156" width="5" height="5" fill="#47ff00"/><rect x="822" y="156" width="5" height="5" fill="#52ff00"/><rect x="827" y="156" width="5" height="5" fill="#5cff00"/><rect x="832" y="156" width="5" height="5" fill="#66ff00"/><rect x="772" y="161" width="5" height="5" fill="#00ff1e"/><rect x="777" y="161" width="5" height="5" fill="#00ff19"/><rect x="782" y="161" width="5" height="5" fill="#01ff0f"/><rect x="787" y="161" width="5" height="5" fill="#02ff04"/><rect x="792" y="161" width="5" height="5" fill="#0cff02"/><rect x="797" y="161" width="5" height="5" fill="#18ff01"/><rect x="802" y="161" width="5" height="5" fill="#24ff01"/><rect x="807" y="161" width="5" height="5" fill="#30ff01"/><rect x="812" y="161" width="5" height="5" fill="#3cff00"/><rect x="817" y="161" width="5" height="5" fill="#48ff00"/><rect x="822" y="161" width="5" height="5" fill="#55ff00"/><rect x="827" y="161" width="5" height="5" fill="#61ff00"/><rect x="832" y="161" width="5" height="5" fill="#6cff00"/><rect x="837" y="161" width="5" height="5" fill="#77ff00"/><rect x="767" y="166" width="5" height="5" fill="#00ff25"/><rect x="772" y="166" width="5" height="5" fill="#00ff23"/><rect x="777" y="166" width="5" height="5" fill="#00ff1c"/><rect x="782" y="166" width="5" height="5" fill="#01ff12"/><rect x="787" y="166" width="5" height="5" fill="#02ff07"/><rect x="792" y="166" width="5" height="5" fill="#0bff02"/><rect x="797" y="166" width="5" height="5" fill="#17ff02"/><rect x="802" y="166" width="5" height="5" fill="#24ff02"/><rect x="807" y="166" width="5" height="5" fill="#30ff01"/><rect x="812" y="166" width="5" height="5" fill="#3dff01"/><rect x="817" y="166" width="5" height="5" fill="#4aff01"/><rect x="822" y="166" width="5" height="5" fill="#57ff00"/><rect x="827" y="166" width="5" height="5" fill="#64ff00"/><rect x="832" y="166" width="5" height="5" fill="#71ff00"/><rect x="837" y="166" width="5" height="5" fill="#7dff00"/><rect x="842" y="166" width="5" height="5" fill="#89ff00"/><rect x="847" y="166" width="5" height="5" fill="#95ff00"/><rect x="767" y="171" width="5" height="5" fill="#00ff2b"/><rect x="772" y="171" width="5" height="5" fill="#00ff29"/><rect x="777" y="171" width="5" height="5" fill="#00ff20"/><rect x="782" y="171" width="5" height="5" fill="#01ff15"/><rect x="787" y="171" width="5" height="5" fill="#03ff0a"/><rect x="792" y="171" width="5" height="5" fill="#0aff04"/><rect x="797" y="171" width="5" height="5" fill="#17ff03"/><rect x="802" y="171" width="5" height="5" fill="#24ff03"/><rect x="807" y="171" width="5" height="5" fill="#31ff02"/><rect x="812" y="171" width="5" height="5" fill="#3fff02"/><rect x="817" y="171" width="5" height="5" fill="#4cff01"/><rect x="822" y="171" width="5" height="5" fill="#5aff01"/><rect x="827" y="171" width="5" height="5" fill="#67ff00"/><rect x="832" y="171" width="5" height="5" fill="#75ff00"/><rect x="837" y="171" width="5" height="5" fill="#82ff00"/><rect x="842" y="171" width="5" height="5" fill="#90ff00"/><rect x="847" y="171" width="5" height="5" fill="#9dff00"/><rect x="852" y="171" width="5" height="5" fill="#aaff00"/><rect x="857" y="171" width="5" height="5" fill="#b7ff00"/><rect x="767" y="176" width="5" height="5" fill="#00ff32"/><rect x="772" y="176" width="5" height="5" fill="#00ff2e"/><rect x="777" y="176" width="5" height="5" fill="#00ff24"/><rect x="782" y="176" width="5" height="5" fill="#02ff19"/><rect x="787" y="176" width="5" height="5" fill="#03ff0e"/><rect x="792" y="176" width="5" height="5" fill="#09ff05"/><rect x="797" y="176" width="5" height="5" fill="#16ff05"/><rect x="802" y="176" width="5" height="5" fill="#24ff04"/><rect x="807" y="176" width="5" height="5" fill="#32ff03"/><rect x="812" y="176" width="5" height="5" fill="#40ff03"/><rect x="817" y="176" width="5" height="5" fill="#4fff02"/><rect x="822" y="176" width="5" height="5" fill="#5dff02"/><rect x="827" y="176" width="5" height="5" fill="#6bff01"/><rect x="832" y="176" width="5" height="5" fill="#79ff01"/><rect x="837" y="176" width="5" height="5" fill="#88ff00"/><rect x="842" y="176" width="5" height="5" fill="#96ff00"/><rect x="847" y="176" width="5" height="5" fill="#a5ff00"/><rect x="852" y="176" width="5" height="5" fill="#b3ff00"/><rect x="857" y="176" width="5" height="5" fill="#c1ff00"/><rect x="862" y="176" width="5" height="5" fill="#cfff00"/><rect x="767" y="181" width="5" height="5" fill="#00ff38"/><rect x="772" y="181" width="5" height="5" fill="#00ff33"/><rect x="777" y="181" width="5" height="5" fill="#01ff28"/><rect x="782" y="181" width="5" height="5" fill="#02ff1e"/><rect x="787" y="181" width="5" height="5" fill="#04ff13"/><rect x="792" y="181" width="5" height="5" fill="#08ff07"/><rect x="797" y="181" width="5" height="5" fill="#16ff07"/><rect x="802" y="181" width="5" height="5" fill="#25ff06"/><rect x="807" y="181" width="5" height="5" fill="#34ff05"/><rect x="812" y="181" width="5" height="5" fill="#43ff04"/><rect x="817" y="181" width="5" height="5" fill="#51ff03"/><rect x="822" y="181" width="5" height="5" fill="#60ff03"/><rect x="827" y="181" width="5" height="5" fill="#70ff02"/><rect x="832" y="181" width="5" height="5" fill="#7fff02"/><rect x="837" y="181" width="5" height="5" fill="#8eff01"/><rect x="842" y="181" width="5" height="5" fill="#9dff01"/><rect x="847" y="181" width="5" height="5" fill="#adff00"/><rect x="852" y="181" width="5" height="5" fill="#bcff00"/><rect x="857" y="181" width="5" height="5" fill="#cbff00"/><rect x="862" y="181" width="5" height="5" fill="#dbff00"/><rect x="867" y="181" width="5" height="5" fill="#eaff00"/><rect x="872" y="181" width="5" height="5" fill="#f9ff00"/><rect x="762" y="186" width="5" height="5" fill="#00ff42"/><rect x="767" y="186" width="5" height="5" fill="#00ff3f"/><rect x="772" y="186" width="5" height="5" fill="#00ff38"/><rect x="777" y="186" width="5" height="5" fill="#01ff2d"/><rect x="782" y="186" width="5" height="5" fill="#03ff23"/><rect x="787" y="186" width="5" height="5" fill="#06ff18"/><rect x="792" y="186" width="5" height="5" fill="#09ff0c"/><rect x="797" y="186" width="5" height="5" fill="#17ff09"/><rect x="802" y="186" width="5" height="5" fill="#26ff08"/><rect x="807" y="186" width="5" height="5" fill="#36ff07"/><rect x="812" y="186" width="5" height="5" fill="#45ff06"/><rect x="817" y="186" width="5" height="5" fill="#55ff05"/><rect x="822" y="186" width="5" height="5" fill="#65ff04"/><rect x="827" y="186" width="5" height="5" fill="#75ff04"/><rect x="832" y="186" width="5" height="5" fill="#85ff03"/><rect x="837" y="186" width="5" height="5" fill="#95ff02"/><rect x="842" y="186" width="5" height="5" fill="#a5ff02"/><rect x="847" y="186" width="5" height="5" fill="#b6ff01"/><rect x="852" y="186" width="5" height="5" fill="#c6ff01"/><rect x="857" y="186" width="5" height="5" fill="#d6ff00"/><rect x="862" y="186" width="5" height="5" fill="#e7ff00"/><rect x="867" y="186" width="5" height="5" fill="#f7ff00"/><rect x="872" y="186" width="5" height="5" fill="#fff700"/><rect x="877" y="186" width="5" height="5" fill="#ffe800"/><rect x="882" y="186" width="5" height="5" fill="#ffda00"/><rect x="762" y="191" width="5" height="5" fill="#00ff49"/><rect x="767" y="191" width="5" height="5" fill="#00ff47"/><rect x="772" y="191" width="5" height="5" fill="#00ff3d"/><rect x="777" y="191" width="5" height="5" fill="#02ff33"/><rect x="782" y="191" width="5" height="5" fill="#04ff28"/><rect x="787" y="191" width="5" height="5" fill="#07ff1d"/><rect x="792" y="191" width="5" height="5" fill="#0bff11"/><rect x="797" y="191" width="5" height="5" fill="#17ff0c"/><rect x="802" y="191" width="5" height="5" fill="#27ff0b"/><rect x="807" y="191" width="5" height="5" fill="#38ff0a"/><rect x="812" y="191" width="5" height="5" fill="#48ff09"/><rect x="817" y="191" width="5" height="5" fill="#59ff08"/><rect x="822" y="191" width="5" height="5" fill="#6aff07"/><rect x="827" y="191" width="5" height="5" fill="#7bff06"/><rect x="832" y="191" width="5" height="5" fill="#8cff05"/><rect x="837" y="191" width="5" height="5" fill="#9dff04"/><rect x="842" y="191" width="5" height="5" fill="#afff03"/><rect x="847" y="191" width="5" height="5" fill="#c0ff02"/><rect x="852" y="191" width="5" height="5" fill="#d2ff02"/><rect x="857" y="191" width="5" height="5" fill="#e3ff01"/><rect x="862" y="191" width="5" height="5" fill="#f5ff01"/><rect x="867" y="191" width="5" height="5" fill="#fff800"/><rect x="872" y="191" width="5" height="5" fill="#ffe800"/><rect x="877" y="191" width="5" height="5" fill="#ffdb00"/><rect x="882" y="191" width="5" height="5" fill="#ffce00"/><rect x="887" y="191" width="5" height="5" fill="#ffc200"/><rect x="762" y="196" width="5" height="5" fill="#00ff51"/><rect x="767" y="196" width="5" height="5" fill="#00ff4d"/><rect x="772" y="196" width="5" height="5" fill="#01ff43"/><rect x="777" y="196" width="5" height="5" fill="#02ff39"/><rect x="782" y="196" width="5" height="5" fill="#05ff2e"/><rect x="787" y="196" width="5" height="5" fill="#08ff23"/><rect x="792" y="196" width="5" height="5" fill="#0dff17"/><rect x="797" y="196" width="5" height="5" fill="#18ff10"/><rect x="802" y="196" width="5" height="5" fill="#29ff0e"/><rect x="807" y="196" width="5" height="5" fill="#3bff0d"/><rect x="812" y="196" width="5" height="5" fill="#4cff0c"/><rect x="817" y="196" width="5" height="5" fill="#5eff0b"/><rect x="822" y="196" width="5" height="5" fill="#70ff09"/><rect x="827" y="196" width="5" height="5" fill="#82ff08"/><rect x="832" y="196" width="5" height="5" fill="#95ff07"/><rect x="837" y="196" width="5" height="5" fill="#a7ff06"/><rect x="842" y="196" width="5" height="5" fill="#baff05"/><rect x="847" y="196" width="5" height="5" fill="#ccff04"/><rect x="852" y="196" width="5" height="5" fill="#dfff03"/><rect x="857" y="196" width="5" height="5" fill="#f2ff02"/><rect x="862" y="196" width="5" height="5" fill="#fff902"/><rect x="867" y="196" width="5" height="5" fill="#ffe801"/><rect x="872" y="196" width="5" height="5" fill="#ffd900"/><rect x="877" y="196" width="5" height="5" fill="#ffcc00"/><rect x="882" y="196" width="5" height="5" fill="#ffc100"/><rect x="887" y="196" width="5" height="5" fill="#ffb600"/><rect x="892" y="196" width="5" height="5" fill="#ffac00"/><rect x="897" y="196" width="5" height="5" fill="#ffa300"/><rect x="757" y="201" width="5" height="5" fill="#00ff5c"/><rect x="762" y="201" width="5" height="5" fill="#00ff5a"/><rect x="767" y="201" width="5" height="5" fill="#00ff54"/><rect x="772" y="201" width="5" height="5" fill="#01ff4a"/><rect x="777" y="201" width="5" height="5" fill="#03ff40"/><rect x="782" y="201" width="5" height="5" fill="#06ff35"/><rect x="787" y="201" width="5" height="5" fill="#0aff2a"/><rect x="792" y="201" width="5" height="5" fill="#10ff1e"/><rect x="797" y="201" width="5" height="5" fill="#19ff15"/><rect x="802" y="201" width="5" height="5" fill="#2cff13"/><rect x="807" y="201" width="5" height="5" fill="#3eff11"/><rect x="812" y="201" width="5" height="5" fill="#51ff10"/><rect x="817" y="201" width="5" height="5" fill="#64ff0e"/><rect x="822" y="201" width="5" height="5" fill="#78ff0d"/><rect x="827" y="201" width="5" height="5" fill="#8bff0c"/><rect x="832" y="201" width="5" height="5" fill="#9fff0a"/><rect x="837" y="201" width="5" height="5" fill="#b3ff09"/><rect x="842" y="201" width="5" height="5" fill="#c7ff08"/><rect x="847" y="201" width="5" height="5" fill="#dbff06"/><rect x="852" y="201" width="5" height="5" fill="#efff05"/><rect x="857" y="201" width="5" height="5" fill="#fffb04"/><rect x="862" y="201" width="5" height="5" fill="#ffe803"/><rect x="867" y="201" width="5" height="5" fill="#ffd802"/><rect x="872" y="201" width="5" height="5" fill="#ffca01"/><rect x="877" y="201" width="5" height="5" fill="#ffbe01"/><rect x="882" y="201" width="5" height="5" fill="#ffb300"/><rect x="887" y="201" width="5" height="5" fill="#ffaa00"/><rect x="892" y="201" width="5" height="5" fill="#ffa100"/><rect x="897" y="201" width="5" height="5" fill="#ff9900"/><rect x="902" y="201" width="5" height="5" fill="#ff9000"/><rect x="907" y="201" width="5" height="5" fill="#ff8900"/><rect x="757" y="206" width="5" height="5" fill="#00ff66"/><rect x="762" y="206" width="5" height="5" fill="#00ff63"/><rect x="767" y="206" width="5" height="5" fill="#00ff5c"/><rect x="772" y="206" width="5" height="5" fill="#02ff52"/><rect x="777" y="206" width="5" height="5" fill="#04ff48"/><rect x="782" y="206" width="5" height="5" fill="#08ff3d"/><rect x="787" y="206" width="5" height="5" fill="#0dff32"/><rect x="792" y="206" width="5" height="5" fill="#13ff26"/><rect x="797" y="206" width="5" height="5" fill="#1bff1a"/><rect x="802" y="206" width="5" height="5" fill="#2fff19"/><rect x="807" y="206" width="5" height="5" fill="#43ff17"/><rect x="812" y="206" width="5" height="5" fill="#57ff15"/><rect x="817" y="206" width="5" height="5" fill="#6cff13"/><rect x="822" y="206" width="5" height="5" fill="#80ff12"/><rect x="827" y="206" width="5" height="5" fill="#95ff10"/><rect x="832" y="206" width="5" height="5" fill="#abff0e"/><rect x="837" y="206" width="5" height="5" fill="#c0ff0d"/><rect x="842" y="206" width="5" height="5" fill="#d6ff0b"/><rect x="847" y="206" width="5" height="5" fill="#ebff0a"/><rect x="852" y="206" width="5" height="5" fill="#fffc08"/><rect x="857" y="206" width="5" height="5" fill="#ffe806"/><rect x="862" y="206" width="5" height="5" fill="#ffd704"/><rect x="867" y="206" width="5" height="5" fill="#ffc803"/><rect x="872" y="206" width="5" height="5" fill="#ffbb02"/><rect x="877" y="206" width="5" height="5" fill="#ffb001"/><rect x="882" y="206" width="5" height="5" fill="#ffa501"/><rect x="887" y="206" width="5" height="5" fill="#ff9c00"/><rect x="892" y="206" width="5" height="5" fill="#ff9400"/><rect x="897" y="206" width="5" height="5" fill="#ff8d00"/><rect x="902" y="206" width="5" height="5" fill="#ff8700"/><rect x="907" y="206" width="5" height="5" fill="#ff7f00"/><rect x="912" y="206" width="5" height="5" fill="#ff7900"/><rect x="757" y="211" width="5" height="5" fill="#00ff70"/><rect x="762" y="211" width="5" height="5" fill="#00ff6d"/><rect x="767" y="211" width="5" height="5" fill="#01ff64"/><rect x="772" y="211" width="5" height="5" fill="#02ff5b"/><rect x="777" y="211" width="5" height="5" fill="#05ff51"/><rect x="782" y="211" width="5" height="5" fill="#0aff46"/><rect x="787" y="211" width="5" height="5" fill="#0fff3b"/><rect x="792" y="211" width="5" height="5" fill="#17ff2f"/><rect x="797" y="211" width="5" height="5" fill="#20ff23"/><rect x="802" y="211" width="5" height="5" fill="#33ff1f"/><rect x="807" y="211" width="5" height="5" fill="#49ff1e"/><rect x="812" y="211" width="5" height="5" fill="#5eff1c"/><rect x="817" y="211" width="5" height="5" fill="#74ff1a"/><rect x="822" y="211" width="5" height="5" fill="#8bff18"/><rect x="827" y="211" width="5" height="5" fill="#a2ff16"/><rect x="832" y="211" width="5" height="5" fill="#b9ff14"/><rect x="837" y="211" width="5" height="5" fill="#d0ff12"/><rect x="842" y="211" width="5" height="5" fill="#e7ff10"/><rect x="847" y="211" width="5" height="5" fill="#ffff0e"/><rect x="852" y="211" width="5" height="5" fill="#ffe90b"/><rect x="857" y="211" width="5" height="5" fill="#ffd608"/><rect x="862" y="211" width="5" height="5" fill="#ffc606"/><rect x="867" y="211" width="5" height="5" fill="#ffb804"/><rect x="872" y="211" width="5" height="5" fill="#ffab03"/><rect x="877" y="211" width="5" height="5" fill="#ffa102"/><rect x="882" y="211" width="5" height="5" fill="#ff9701"/><rect x="887" y="211" width="5" height="5" fill="#ff8f01"/><rect x="892" y="211" width="5" height="5" fill="#ff8701"/><rect x="897" y="211" width="5" height="5" fill="#ff8100"/><rect x="902" y="211" width="5" height="5" fill="#ff7b00"/><rect x="907" y="211" width="5" height="5" fill="#ff7500"/><rect x="912" y="211" width="5" height="5" fill="#ff7000"/><rect x="917" y="211" width="5" height="5" fill="#ff6a00"/><rect x="922" y="211" width="5" height="5" fill="#ff6400"/><rect x="757" y="216" width="5" height="5" fill="#00ff7b"/><rect x="762" y="216" width="5" height="5" fill="#00ff77"/><rect x="767" y="216" width="5" height="5" fill="#01ff6e"/><rect x="772" y="216" width="5" height="5" fill="#03ff64"/><rect x="777" y="216" width="5" height="5" fill="#07ff5b"/><rect x="782" y="216" width="5" height="5" fill="#0cff50"/><rect x="787" y="216" width="5" height="5" fill="#13ff45"/><rect x="792" y="216" width="5" height="5" fill="#1bff3a"/><rect x="797" y="216" width="5" height="5" fill="#25ff2e"/><rect x="802" y="216" width="5" height="5" fill="#38ff28"/><rect x="807" y="216" width="5" height="5" fill="#50ff26"/><rect x="812" y="216" width="5" height="5" fill="#67ff24"/><rect x="817" y="216" width="5" height="5" fill="#7fff22"/><rect x="822" y="216" width="5" height="5" fill="#97ff1f"/><rect x="827" y="216" width="5" height="5" fill="#b0ff1d"/><rect x="832" y="216" width="5" height="5" fill="#c9ff1b"/><rect x="837" y="216" width="5" height="5" fill="#e3ff19"/><rect x="842" y="216" width="5" height="5" fill="#fdff17"/><rect x="847" y="216" width="5" height="5" fill="#ffe912"/><rect x="852" y="216" width="5" height="5" fill="#ffd50e"/><rect x="857" y="216" width="5" height="5" fill="#ffc30b"/><rect x="862" y="216" width="5" height="5" fill="#ffb408"/><rect x="867" y="216" width="5" height="5" fill="#ffa706"/><rect x="872" y="216" width="5" height="5" fill="#ff9c05"/><rect x="877" y="216" width="5" height="5" fill="#ff9203"/><rect x="882" y="216" width="5" height="5" fill="#ff8902"/><rect x="887" y="216" width="5" height="5" fill="#ff8102"/><rect x="892" y="216" width="5" height="5" fill="#ff7a01"/><rect x="897" y="216" width="5" height="5" fill="#ff7401"/><rect x="902" y="216" width="5" height="5" fill="#ff6f00"/><rect x="907" y="216" width="5" height="5" fill="#ff6a00"/><rect x="912" y="216" width="5" height="5" fill="#ff6500"/><rect x="917" y="216" width="5" height="5" fill="#ff6100"/><rect x="922" y="216" width="5" height="5" fill="#ff5c00"/><rect x="927" y="216" width="5" height="5" fill="#ff5700"/><rect x="932" y="216" width="5" height="5" fill="#ff5300"/><rect x="752" y="221" width="5" height="5" fill="#00ff89"/><rect x="757" y="221" width="5" height="5" fill="#00ff87"/><rect x="762" y="221" width="5" height="5" fill="#00ff81"/><rect x="767" y="221" width="5" height="5" fill="#02ff79"/><rect x="772" y="221" width="5" height="5" fill="#04ff70"/><rect x="777" y="221" width="5" height="5" fill="#09ff66"/><rect x="782" y="221" width="5" height="5" fill="#0fff5c"/><rect x="787" y="221" width="5" height="5" fill="#17ff52"/><rect x="792" y="221" width="5" height="5" fill="#20ff46"/><rect x="797" y="221" width="5" height="5" fill="#2cff3a"/><rect x="802" y="221" width="5" height="5" fill="#3fff33"/><rect x="807" y="221" width="5" height="5" fill="#58ff30"/><rect x="812" y="221" width="5" height="5" fill="#72ff2e"/><rect x="817" y="221" width="5" height="5" fill="#8cff2b"/><rect x="822" y="221" width="5" height="5" fill="#a7ff29"/><rect x="827" y="221" width="5" height="5" fill="#c2ff27"/><rect x="832" y="221" width="5" height="5" fill="#ddff24"/><rect x="837" y="221" width="5" height="5" fill="#faff22"/><rect x="842" y="221" width="5" height="5" fill="#ffea1b"/><rect x="847" y="221" width="5" height="5" fill="#ffd316"/><rect x="852" y="221" width="5" height="5" fill="#ffc011"/><rect x="857" y="221" width="5" height="5" fill="#ffb00d"/><rect x="862" y="221" width="5" height="5" fill="#ffa20a"/><rect x="867" y="221" width="5" height="5" fill="#ff9608"/><rect x="872" y="221" width="5" height="5" fill="#ff8c06"/><rect x="877" y="221" width="5" height="5" fill="#ff8305"/><rect x="882" y="221" width="5" height="5" fill="#ff7b04"/><rect x="887" y="221" width="5" height="5" fill="#ff7403"/><rect x="892" y="221" width="5" height="5" fill="#ff6d02"/><rect x="897" y="221" width="5" height="5" fill="#ff6801"/><rect x="902" y="221" width="5" height="5" fill="#ff6301"/><rect x="907" y="221" width="5" height="5" fill="#ff5e00"/><rect x="912" y="221" width="5" height="5" fill="#ff5a00"/><rect x="917" y="221" width="5" height="5" fill="#ff5600"/><rect x="922" y="221" width="5" height="5" fill="#ff5300"/><rect x="927" y="221" width="5" height="5" fill="#ff5000"/><rect x="932" y="221" width="5" height="5" fill="#ff4b00"/><rect x="937" y="221" width="5" height="5" fill="#ff4700"/><rect x="752" y="226" width="5" height="5" fill="#00ff95"/><rect x="757" y="226" width="5" height="5" fill="#00ff93"/><rect x="762" y="226" width="5" height="5" fill="#00ff8d"/><rect x="767" y="226" width="5" height="5" fill="#02ff85"/><rect x="772" y="226" width="5" height="5" fill="#06ff7c"/><rect x="777" y="226" width="5" height="5" fill="#0bff73"/><rect x="782" y="226" width="5" height="5" fill="#12ff6a"/><rect x="787" y="226" width="5" height="5" fill="#1bff60"/><rect x="792" y="226" width="5" height="5" fill="#27ff55"/><rect x="797" y="226" width="5" height="5" fill="#35ff49"/><rect x="802" y="226" width="5" height="5" fill="#48ff40"/><rect x="807" y="226" width="5" height="5" fill="#63ff3d"/><rect x="812" y="226" width="5" height="5" fill="#7fff3b"/><rect x="817" y="226" width="5" height="5" fill="#9cff38"/><rect x="822" y="226" width="5" height="5" fill="#b9ff35"/><rect x="827" y="226" width="5" height="5" fill="#d7ff33"/><rect x="832" y="226" width="5" height="5" fill="#f6ff30"/><rect x="837" y="226" width="5" height="5" fill="#ffea28"/><rect x="842" y="226" width="5" height="5" fill="#ffd220"/><rect x="847" y="226" width="5" height="5" fill="#ffbd19"/><rect x="852" y="226" width="5" height="5" fill="#ffac14"/><rect x="857" y="226" width="5" height="5" fill="#ff9d10"/><rect x="862" y="226" width="5" height="5" fill="#ff900d"/><rect x="867" y="226" width="5" height="5" fill="#ff850a"/><rect x="872" y="226" width="5" height="5" fill="#ff7c08"/><rect x="877" y="226" width="5" height="5" fill="#ff7406"/><rect x="882" y="226" width="5" height="5" fill="#ff6c05"/><rect x="887" y="226" width="5" height="5" fill="#ff6604"/><rect x="892" y="226" width="5" height="5" fill="#ff6003"/><rect x="897" y="226" width="5" height="5" fill="#ff5b02"/><rect x="902" y="226" width="5" height="5" fill="#ff5701"/><rect x="907" y="226" width="5" height="5" fill="#ff5201"/><rect x="912" y="226" width="5" height="5" fill="#ff4f01"/><rect x="917" y="226" width="5" height="5" fill="#ff4b00"/><rect x="922" y="226" width="5" height="5" fill="#ff4800"/><rect x="927" y="226" width="5" height="5" fill="#ff4600"/><rect x="932" y="226" width="5" height="5" fill="#ff4300"/><rect x="937" y="226" width="5" height="5" fill="#ff4000"/><rect x="942" y="226" width="5" height="5" fill="#ff3d00"/><rect x="947" y="226" width="5" height="5" fill="#ff3900"/><rect x="752" y="231" width="5" height="5" fill="#00ffa3"/><rect x="757" y="231" width="5" height="5" fill="#00ffa1"/><rect x="762" y="231" width="5" height="5" fill="#01ff9a"/><rect x="767" y="231" width="5" height="5" fill="#03ff93"/><rect x="772" y="231" width="5" height="5" fill="#08ff8b"/><rect x="777" y="231" width="5" height="5" fill="#0eff82"/><rect x="782" y="231" width="5" height="5" fill="#16ff7a"/><rect x="787" y="231" width="5" height="5" fill="#21ff70"/><rect x="792" y="231" width="5" height="5" fill="#2eff66"/><rect x="797" y="231" width="5" height="5" fill="#3eff5b"/><rect x="802" y="231" width="5" height="5" fill="#52ff50"/><rect x="807" y="231" width="5" height="5" fill="#71ff4d"/><rect x="812" y="231" width="5" height="5" fill="#90ff4b"/><rect x="817" y="231" width="5" height="5" fill="#afff48"/><rect x="822" y="231" width="5" height="5" fill="#d0ff45"/><rect x="827" y="231" width="5" height="5" fill="#f2ff42"/><rect x="832" y="231" width="5" height="5" fill="#ffec39"/><rect x="837" y="231" width="5" height="5" fill="#ffd02d"/><rect x="842" y="231" width="5" height="5" fill="#ffba25"/><rect x="847" y="231" width="5" height="5" fill="#ffa71e"/><rect x="852" y="231" width="5" height="5" fill="#ff9718"/><rect x="857" y="231" width="5" height="5" fill="#ff8a13"/><rect x="862" y="231" width="5" height="5" fill="#ff7e10"/><rect x="867" y="231" width="5" height="5" fill="#ff740c"/><rect x="872" y="231" width="5" height="5" fill="#ff6c0a"/><rect x="877" y="231" width="5" height="5" fill="#ff6408"/><rect x="882" y="231" width="5" height="5" fill="#ff5e06"/><rect x="887" y="231" width="5" height="5" fill="#ff5805"/><rect x="892" y="231" width="5" height="5" fill="#ff5304"/><rect x="897" y="231" width="5" height="5" fill="#ff4e03"/><rect x="902" y="231" width="5" height="5" fill="#ff4a02"/><rect x="907" y="231" width="5" height="5" fill="#ff4702"/><rect x="912" y="231" width="5" height="5" fill="#ff4301"/><rect x="917" y="231" width="5" height="5" fill="#ff4001"/><rect x="922" y="231" width="5" height="5" fill="#ff3e00"/><rect x="927" y="231" width="5" height="5" fill="#ff3b00"/><rect x="932" y="231" width="5" height="5" fill="#ff3900"/><rect x="937" y="231" width="5" height="5" fill="#ff3700"/><rect x="942" y="231" width="5" height="5" fill="#ff3500"/><rect x="947" y="231" width="5" height="5" fill="#ff3300"/><rect x="952" y="231" width="5" height="5" fill="#ff2f00"/><rect x="957" y="231" width="5" height="5" fill="#ff2c00"/><rect x="752" y="236" width="5" height="5" fill="#00ffb3"/><rect x="757" y="236" width="5" height="5" fill="#00ffb0"/><rect x="762" y="236" width="5" height="5" fill="#02ffa9"/><rect x="767" y="236" width="5" height="5" fill="#05ffa3"/><rect x="772" y="236" width="5" height="5" fill="#0aff9c"/><rect x="777" y="236" width="5" height="5" fill="#12ff94"/><rect x="782" y="236" width="5" height="5" fill="#1cff8c"/><rect x="787" y="236" width="5" height="5" fill="#28ff83"/><rect x="792" y="236" width="5" height="5" fill="#38ff7a"/><rect x="797" y="236" width="5" height="5" fill="#4bff70"/><rect x="802" y="236" width="5" height="5" fill="#61ff66"/><rect x="807" y="236" width="5" height="5" fill="#82ff62"/><rect x="812" y="236" width="5" height="5" fill="#a4ff5f"/><rect x="817" y="236" width="5" height="5" fill="#c8ff5c"/><rect x="822" y="236" width="5" height="5" fill="#ecff59"/><rect x="827" y="236" width="5" height="5" fill="#ffed4e"/><rect x="832" y="236" width="5" height="5" fill="#ffcf3f"/><rect x="837" y="236" width="5" height="5" fill="#ffb633"/><rect x="842" y="236" width="5" height="5" fill="#ffa229"/><rect x="847" y="236" width="5" height="5" fill="#ff9122"/><rect x="852" y="236" width="5" height="5" fill="#ff821c"/><rect x="857" y="236" width="5" height="5" fill="#ff7617"/><rect x="862" y="236" width="5" height="5" fill="#ff6c12"/><rect x="867" y="236" width="5" height="5" fill="#ff630f"/><rect x="872" y="236" width="5" height="5" fill="#ff5c0c"/><rect x="877" y="236" width="5" height="5" fill="#ff550a"/><rect x="882" y="236" width="5" height="5" fill="#ff4f08"/><rect x="887" y="236" width="5" height="5" fill="#ff4a06"/><rect x="892" y="236" width="5" height="5" fill="#ff4505"/><rect x="897" y="236" width="5" height="5" fill="#ff4104"/><rect x="902" y="236" width="5" height="5" fill="#ff3e03"/><rect x="907" y="236" width="5" height="5" fill="#ff3b02"/><rect x="912" y="236" width="5" height="5" fill="#ff3802"/><rect x="917" y="236" width="5" height="5" fill="#ff3501"/><rect x="922" y="236" width="5" height="5" fill="#ff3301"/><rect x="927" y="236" width="5" height="5" fill="#ff3101"/><rect x="932" y="236" width="5" height="5" fill="#ff2f00"/><rect x="937" y="236" width="5" height="5" fill="#ff2d00"/><rect x="942" y="236" width="5" height="5" fill="#ff2c00"/><rect x="947" y="236" width="5" height="5" fill="#ff2a00"/><rect x="952" y="236" width="5" height="5" fill="#ff2900"/><rect x="957" y="236" width="5" height="5" fill="#ff2600"/><rect x="962" y="236" width="5" height="5" fill="#ff2400"/><rect x="747" y="241" width="5" height="5" fill="#00ffc5"/><rect x="752" y="241" width="5" height="5" fill="#00ffc4"/><rect x="757" y="241" width="5" height="5" fill="#00ffc0"/><rect x="762" y="241" width="5" height="5" fill="#03ffbb"/><rect x="767" y="241" width="5" height="5" fill="#07ffb5"/><rect x="772" y="241" width="5" height="5" fill="#0dffaf"/><rect x="777" y="241" width="5" height="5" fill="#16ffa9"/><rect x="782" y="241" width="5" height="5" fill="#22ffa2"/><rect x="787" y="241" width="5" height="5" fill="#31ff9b"/><rect x="792" y="241" width="5" height="5" fill="#43ff93"/><rect x="797" y="241" width="5" height="5" fill="#5aff8a"/><rect x="802" y="241" width="5" height="5" fill="#74ff81"/><rect x="807" y="241" width="5" height="5" fill="#97ff7c"/><rect x="812" y="241" width="5" height="5" fill="#beff79"/><rect x="817" y="241" width="5" height="5" fill="#e6ff76"/><rect x="822" y="241" width="5" height="5" fill="#ffef6a"/><rect x="827" y="241" width="5" height="5" fill="#ffcd56"/><rect x="832" y="241" width="5" height="5" fill="#ffb246"/><rect x="837" y="241" width="5" height="5" fill="#ff9c39"/><rect x="842" y="241" width="5" height="5" fill="#ff8a2f"/><rect x="847" y="241" width="5" height="5" fill="#ff7a26"/><rect x="852" y="241" width="5" height="5" fill="#ff6e1f"/><rect x="857" y="241" width="5" height="5" fill="#ff631a"/><rect x="862" y="241" width="5" height="5" fill="#ff5a15"/><rect x="867" y="241" width="5" height="5" fill="#ff5212"/><rect x="872" y="241" width="5" height="5" fill="#ff4b0e"/><rect x="877" y="241" width="5" height="5" fill="#ff450c"/><rect x="882" y="241" width="5" height="5" fill="#ff400a"/><rect x="887" y="241" width="5" height="5" fill="#ff3c08"/><rect x="892" y="241" width="5" height="5" fill="#ff3806"/><rect x="897" y="241" width="5" height="5" fill="#ff3505"/><rect x="902" y="241" width="5" height="5" fill="#ff3204"/><rect x="907" y="241" width="5" height="5" fill="#ff2f03"/><rect x="912" y="241" width="5" height="5" fill="#ff2c02"/><rect x="917" y="241" width="5" height="5" fill="#ff2a02"/><rect x="922" y="241" width="5" height="5" fill="#ff2801"/><rect x="927" y="241" width="5" height="5" fill="#ff2701"/><rect x="932" y="241" width="5" height="5" fill="#ff2501"/><rect x="937" y="241" width="5" height="5" fill="#ff2400"/><rect x="942" y="241" width="5" height="5" fill="#ff2200"/><rect x="947" y="241" width="5" height="5" fill="#ff2100"/><rect x="952" y="241" width="5" height="5" fill="#ff2000"/><rect x="957" y="241" width="5" height="5" fill="#ff1f00"/><rect x="962" y="241" width="5" height="5" fill="#ff1e00"/><rect x="967" y="241" width="5" height="5" fill="#ff1b00"/><rect x="972" y="241" width="5" height="5" fill="#ff1900"/><rect x="747" y="246" width="5" height="5" fill="#00ffd8"/><rect x="752" y="246" width="5" height="5" fill="#00ffd7"/><rect x="757" y="246" width="5" height="5" fill="#01ffd3"/><rect x="762" y="246" width="5" height="5" fill="#04ffcf"/><rect x="767" y="246" width="5" height="5" fill="#09ffcb"/><rect x="772" y="246" width="5" height="5" fill="#11ffc7"/><rect x="777" y="246" width="5" height="5" fill="#1cffc2"/><rect x="782" y="246" width="5" height="5" fill="#2affbc"/><rect x="787" y="246" width="5" height="5" fill="#3cffb7"/><rect x="792" y="246" width="5" height="5" fill="#52ffb0"/><rect x="797" y="246" width="5" height="5" fill="#6cffaa"/><rect x="802" y="246" width="5" height="5" fill="#8bffa2"/><rect x="807" y="246" width="5" height="5" fill="#b3ff9d"/><rect x="812" y="246" width="5" height="5" fill="#dfff9a"/><rect x="817" y="246" width="5" height="5" fill="#fff28e"/><rect x="822" y="246" width="5" height="5" fill="#ffcc73"/><rect x="827" y="246" width="5" height="5" fill="#ffad5d"/><rect x="832" y="246" width="5" height="5" fill="#ff954c"/><rect x="837" y="246" width="5" height="5" fill="#ff823f"/><rect x="842" y="246" width="5" height="5" fill="#ff7234"/><rect x="847" y="246" width="5" height="5" fill="#ff642b"/><rect x="852" y="246" width="5" height="5" fill="#ff5924"/><rect x="857" y="246" width="5" height="5" fill="#ff501e"/><rect x="862" y="246" width="5" height="5" fill="#ff4819"/><rect x="867" y="246" width="5" height="5" fill="#ff4114"/><rect x="872" y="246" width="5" height="5" fill="#ff3b11"/><rect x="877" y="246" width="5" height="5" fill="#ff360e"/><rect x="882" y="246" width="5" height="5" fill="#ff320c"/><rect x="887" y="246" width="5" height="5" fill="#ff2e0a"/><rect x="892" y="246" width="5" height="5" fill="#ff2b08"/><rect x="897" y="246" width="5" height="5" fill="#ff2806"/><rect x="902" y="246" width="5" height="5" fill="#ff2505"/><rect x="907" y="246" width="5" height="5" fill="#ff2304"/><rect x="912" y="246" width="5" height="5" fill="#ff2103"/><rect x="917" y="246" width="5" height="5" fill="#ff1f03"/><rect x="922" y="246" width="5" height="5" fill="#ff1e02"/><rect x="927" y="246" width="5" height="5" fill="#ff1c01"/><rect x="932" y="246" width="5" height="5" fill="#ff1b01"/><rect x="937" y="246" width="5" height="5" fill="#ff1a01"/><rect x="942" y="246" width="5" height="5" fill="#ff1901"/><rect x="947" y="246" width="5" height="5" fill="#ff1800"/><rect x="952" y="246" width="5" height="5" fill="#ff1700"/><rect x="957" y="246" width="5" height="5" fill="#ff1700"/><rect x="962" y="246" width="5" height="5" fill="#ff1600"/><rect x="967" y="246" width="5" height="5" fill="#ff1500"/><rect x="972" y="246" width="5" height="5" fill="#ff1400"/><rect x="977" y="246" width="5" height="5" fill="#ff1200"/><rect x="982" y="246" width="5" height="5" fill="#ff1000"/><rect x="747" y="251" width="5" height="5" fill="#00ffed"/><rect x="752" y="251" width="5" height="5" fill="#00ffec"/><rect x="757" y="251" width="5" height="5" fill="#02ffea"/><rect x="762" y="251" width="5" height="5" fill="#06ffe7"/><rect x="767" y="251" width="5" height="5" fill="#0cffe5"/><rect x="772" y="251" width="5" height="5" fill="#16ffe2"/><rect x="777" y="251" width="5" height="5" fill="#23ffdf"/><rect x="782" y="251" width="5" height="5" fill="#34ffdc"/><rect x="787" y="251" width="5" height="5" fill="#49ffd9"/><rect x="792" y="251" width="5" height="5" fill="#64ffd5"/><rect x="797" y="251" width="5" height="5" fill="#83ffd0"/><rect x="802" y="251" width="5" height="5" fill="#a9ffcc"/><rect x="807" y="251" width="5" height="5" fill="#d6ffc8"/><rect x="812" y="251" width="5" height="5" fill="#fff5bd"/><rect x="817" y="251" width="5" height="5" fill="#ffca98"/><rect x="822" y="251" width="5" height="5" fill="#ffa87b"/><rect x="827" y="251" width="5" height="5" fill="#ff8e65"/><rect x="832" y="251" width="5" height="5" fill="#ff7953"/><rect x="837" y="251" width="5" height="5" fill="#ff6845"/><rect x="842" y="251" width="5" height="5" fill="#ff5939"/><rect x="847" y="251" width="5" height="5" fill="#ff4e2f"/><rect x="852" y="251" width="5" height="5" fill="#ff4428"/><rect x="857" y="251" width="5" height="5" fill="#ff3c21"/><rect x="862" y="251" width="5" height="5" fill="#ff351c"/><rect x="867" y="251" width="5" height="5" fill="#ff3017"/><rect x="872" y="251" width="5" height="5" fill="#ff2b14"/><rect x="877" y="251" width="5" height="5" fill="#ff2610"/><rect x="882" y="251" width="5" height="5" fill="#ff230e"/><rect x="887" y="251" width="5" height="5" fill="#ff200b"/><rect x="892" y="251" width="5" height="5" fill="#ff1d09"/><rect x="897" y="251" width="5" height="5" fill="#ff1b08"/><rect x="902" y="251" width="5" height="5" fill="#ff1906"/><rect x="907" y="251" width="5" height="5" fill="#ff1705"/><rect x="912" y="251" width="5" height="5" fill="#ff1504"/><rect x="917" y="251" width="5" height="5" fill="#ff1403"/><rect x="922" y="251" width="5" height="5" fill="#ff1303"/><rect x="927" y="251" width="5" height="5" fill="#ff1202"/><rect x="932" y="251" width="5" height="5" fill="#ff1102"/><rect x="937" y="251" width="5" height="5" fill="#ff1001"/><rect x="942" y="251" width="5" height="5" fill="#ff0f01"/><rect x="947" y="251" width="5" height="5" fill="#ff0f01"/><rect x="952" y="251" width="5" height="5" fill="#ff0e00"/><rect x="957" y="251" width="5" height="5" fill="#ff0e00"/><rect x="962" y="251" width="5" height="5" fill="#ff0d00"/><rect x="967" y="251" width="5" height="5" fill="#ff0d00"/><rect x="972" y="251" width="5" height="5" fill="#ff0d00"/><rect x="977" y="251" width="5" height="5" fill="#ff0c00"/><rect x="982" y="251" width="5" height="5" fill="#ff0b00"/><rect x="987" y="251" width="5" height="5" fill="#ff0900"/><rect x="742" y="256" width="5" height="5" fill="#00faff"/><rect x="747" y="256" width="5" height="5" fill="#00faff"/><rect x="752" y="256" width="5" height="5" fill="#00faff"/><rect x="757" y="256" width="5" height="5" fill="#03faff"/><rect x="762" y="256" width="5" height="5" fill="#08faff"/><rect x="767" y="256" width="5" height="5" fill="#10fbff"/><rect x="772" y="256" width="5" height="5" fill="#1cfbff"/><rect x="777" y="256" width="5" height="5" fill="#2bfbff"/><rect x="782" y="256" width="5" height="5" fill="#40fbff"/><rect x="787" y="256" width="5" height="5" fill="#59fcff"/><rect x="792" y="256" width="5" height="5" fill="#79fcff"/><rect x="797" y="256" width="5" height="5" fill="#9ffdff"/><rect x="802" y="256" width="5" height="5" fill="#cdfeff"/><rect x="807" y="256" width="5" height="5" fill="#fffafa"/><rect x="812" y="256" width="5" height="5" fill="#ffc8c8"/><rect x="817" y="256" width="5" height="5" fill="#ffa3a2"/><rect x="822" y="256" width="5" height="5" fill="#ff8684"/><rect x="827" y="256" width="5" height="5" fill="#ff6f6c"/><rect x="832" y="256" width="5" height="5" fill="#ff5c5a"/><rect x="837" y="256" width="5" height="5" fill="#ff4e4b"/><rect x="842" y="256" width="5" height="5" fill="#ff423e"/><rect x="847" y="256" width="5" height="5" fill="#ff3834"/><rect x="852" y="256" width="5" height="5" fill="#ff2f2c"/><rect x="857" y="256" width="5" height="5" fill="#ff2925"/><rect x="862" y="256" width="5" height="5" fill="#ff231f"/><rect x="867" y="256" width="5" height="5" fill="#ff1e1a"/><rect x="872" y="256" width="5" height="5" fill="#ff1a16"/><rect x="877" y="256" width="5" height="5" fill="#ff1713"/><rect x="882" y="256" width="5" height="5" fill="#ff1410"/><rect x="887" y="256" width="5" height="5" fill="#ff110d"/><rect x="892" y="256" width="5" height="5" fill="#ff0f0b"/><rect x="897" y="256" width="5" height="5" fill="#ff0e09"/><rect x="902" y="256" width="5" height="5" fill="#ff0c08"/><rect x="907" y="256" width="5" height="5" fill="#ff0b06"/><rect x="912" y="256" width="5" height="5" fill="#ff0a05"/><rect x="917" y="256" width="5" height="5" fill="#ff0904"/><rect x="922" y="256" width="5" height="5" fill="#ff0804"/><rect x="927" y="256" width="5" height="5" fill="#ff0703"/><rect x="932" y="256" width="5" height="5" fill="#ff0702"/><rect x="937" y="256" width="5" height="5" fill="#ff0602"/><rect x="942" y="256" width="5" height="5" fill="#ff0601"/><rect x="947" y="256" width="5" height="5" fill="#ff0501"/><rect x="952" y="256" width="5" height="5" fill="#ff0501"/><rect x="957" y="256" width="5" height="5" fill="#ff0500"/><rect x="962" y="256" width="5" height="5" fill="#ff0500"/><rect x="967" y="256" width="5" height="5" fill="#ff0500"/><rect x="972" y="256" width="5" height="5" fill="#ff0500"/><rect x="977" y="256" width="5" height="5" fill="#ff0500"/><rect x="982" y="256" width="5" height="5" fill="#ff0400"/><rect x="987" y="256" width="5" height="5" fill="#ff0400"/><rect x="992" y="256" width="5" height="5" fill="#ff0200"/><rect x="997" y="256" width="5" height="5" fill="#ff0100"/><rect x="742" y="261" width="5" height="5" fill="#00e3ff"/><rect x="747" y="261" width="5" height="5" fill="#00e3ff"/><rect x="752" y="261" width="5" height="5" fill="#01e2ff"/><rect x="757" y="261" width="5" height="5" fill="#03e0ff"/><rect x="762" y="261" width="5" height="5" fill="#09ddff"/><rect x="767" y="261" width="5" height="5" fill="#11dbff"/><rect x="772" y="261" width="5" height="5" fill="#1dd9ff"/><rect x="777" y="261" width="5" height="5" fill="#2cd6ff"/><rect x="782" y="261" width="5" height="5" fill="#40d3ff"/><rect x="787" y="261" width="5" height="5" fill="#58d0ff"/><rect x="792" y="261" width="5" height="5" fill="#76cdff"/><rect x="797" y="261" width="5" height="5" fill="#9acaff"/><rect x="802" y="261" width="5" height="5" fill="#c6c6ff"/><rect x="807" y="261" width="5" height="5" fill="#f9c5ff"/><rect x="812" y="261" width="5" height="5" fill="#ffa2d5"/><rect x="817" y="261" width="5" height="5" fill="#ff84b0"/><rect x="822" y="261" width="5" height="5" fill="#ff6c92"/><rect x="827" y="261" width="5" height="5" fill="#ff597b"/><rect x="832" y="261" width="5" height="5" fill="#ff4968"/><rect x="837" y="261" width="5" height="5" fill="#ff3d59"/><rect x="842" y="261" width="5" height="5" fill="#ff334c"/><rect x="847" y="261" width="5" height="5" fill="#ff2b42"/><rect x="852" y="261" width="5" height="5" fill="#ff2439"/><rect x="857" y="261" width="5" height="5" fill="#ff1e31"/><rect x="862" y="261" width="5" height="5" fill="#ff1a2b"/><rect x="867" y="261" width="5" height="5" fill="#ff1626"/><rect x="872" y="261" width="5" height="5" fill="#ff1221"/><rect x="877" y="261" width="5" height="5" fill="#ff0f1d"/><rect x="882" y="261" width="5" height="5" fill="#ff0d1a"/><rect x="887" y="261" width="5" height="5" fill="#ff0b17"/><rect x="892" y="261" width="5" height="5" fill="#ff0914"/><rect x="897" y="261" width="5" height="5" fill="#ff0812"/><rect x="902" y="261" width="5" height="5" fill="#ff0610"/><rect x="907" y="261" width="5" height="5" fill="#ff050e"/><rect x="912" y="261" width="5" height="5" fill="#ff040d"/><rect x="917" y="261" width="5" height="5" fill="#ff040b"/><rect x="922" y="261" width="5" height="5" fill="#ff030a"/><rect x="927" y="261" width="5" height="5" fill="#ff0209"/><rect x="932" y="261" width="5" height="5" fill="#ff0208"/><rect x="937" y="261" width="5" height="5" fill="#ff0107"/><rect x="942" y="261" width="5" height="5" fill="#ff0107"/><rect x="947" y="261" width="5" height="5" fill="#ff0106"/><rect x="952" y="261" width="5" height="5" fill="#ff0105"/><rect x="957" y="261" width="5" height="5" fill="#ff0005"/><rect x="962" y="261" width="5" height="5" fill="#ff0005"/><rect x="967" y="261" width="5" height="5" fill="#ff0004"/><rect x="972" y="261" width="5" height="5" fill="#ff0004"/><rect x="977" y="261" width="5" height="5" fill="#ff0004"/><rect x="982" y="261" width="5" height="5" fill="#ff0003"/><rect x="987" y="261" width="5" height="5" fill="#ff0002"/><rect x="992" y="261" width="5" height="5" fill="#ff0001"/><rect x="997" y="261" width="5" height="5" fill="#ff0000"/><rect x="742" y="266" width="5" height="5" fill="#00ceff"/><rect x="747" y="266" width="5" height="5" fill="#00ceff"/><rect x="752" y="266" width="5" height="5" fill="#01caff"/><rect x="757" y="266" width="5" height="5" fill="#04c6ff"/><rect x="762" y="266" width="5" height="5" fill="#0ac2ff"/><rect x="767" y="266" width="5" height="5" fill="#12bdff"/><rect x="772" y="266" width="5" height="5" fill="#1eb9ff"/><rect x="777" y="266" width="5" height="5" fill="#2db3ff"/><rect x="782" y="266" width="5" height="5" fill="#40aeff"/><rect x="787" y="266" width="5" height="5" fill="#57a8ff"/><rect x="792" y="266" width="5" height="5" fill="#74a2ff"/><rect x="797" y="266" width="5" height="5" fill="#969bff"/><rect x="802" y="266" width="5" height="5" fill="#c299ff"/><rect x="807" y="266" width="5" height="5" fill="#f097ff"/><rect x="812" y="266" width="5" height="5" fill="#ff81e0"/><rect x="817" y="266" width="5" height="5" fill="#ff69bc"/><rect x="822" y="266" width="5" height="5" fill="#ff55a0"/><rect x="827" y="266" width="5" height="5" fill="#ff4689"/><rect x="832" y="266" width="5" height="5" fill="#ff3a76"/><rect x="837" y="266" width="5" height="5" fill="#ff3067"/><rect x="842" y="266" width="5" height="5" fill="#ff285a"/><rect x="847" y="266" width="5" height="5" fill="#ff214f"/><rect x="852" y="266" width="5" height="5" fill="#ff1c46"/><rect x="857" y="266" width="5" height="5" fill="#ff173e"/><rect x="862" y="266" width="5" height="5" fill="#ff1338"/><rect x="867" y="266" width="5" height="5" fill="#ff1032"/><rect x="872" y="266" width="5" height="5" fill="#ff0d2d"/><rect x="877" y="266" width="5" height="5" fill="#ff0b29"/><rect x="882" y="266" width="5" height="5" fill="#ff0925"/><rect x="887" y="266" width="5" height="5" fill="#ff0822"/><rect x="892" y="266" width="5" height="5" fill="#ff061f"/><rect x="897" y="266" width="5" height="5" fill="#ff051d"/><rect x="902" y="266" width="5" height="5" fill="#ff041a"/><rect x="907" y="266" width="5" height="5" fill="#ff0319"/><rect x="912" y="266" width="5" height="5" fill="#ff0317"/><rect x="917" y="266" width="5" height="5" fill="#ff0215"/><rect x="922" y="266" width="5" height="5" fill="#ff0214"/><rect x="927" y="266" width="5" height="5" fill="#ff0113"/><rect x="932" y="266" width="5" height="5" fill="#ff0111"/><rect x="937" y="266" width="5" height="5" fill="#ff0110"/><rect x="942" y="266" width="5" height="5" fill="#ff0010"/><rect x="947" y="266" width="5" height="5" fill="#ff000f"/><rect x="952" y="266" width="5" height="5" fill="#ff000e"/><rect x="957" y="266" width="5" height="5" fill="#ff000d"/><rect x="962" y="266" width="5" height="5" fill="#ff000d"/><rect x="967" y="266" width="5" height="5" fill="#ff000c"/><rect x="972" y="266" width="5" height="5" fill="#ff000b"/><rect x="977" y="266" width="5" height="5" fill="#ff0009"/><rect x="982" y="266" width="5" height="5" fill="#ff0007"/><rect x="987" y="266" width="5" height="5" fill="#ff0005"/><rect x="992" y="266" width="5" height="5" fill="#ff0003"/><rect x="742" y="271" width="5" height="5" fill="#00bbff"/><rect x="747" y="271" width="5" height="5" fill="#00b9ff"/><rect x="752" y="271" width="5" height="5" fill="#02b3ff"/><rect x="757" y="271" width="5" height="5" fill="#05aeff"/><rect x="762" y="271" width="5" height="5" fill="#0ba8ff"/><rect x="767" y="271" width="5" height="5" fill="#14a1ff"/><rect x="772" y="271" width="5" height="5" fill="#1f9aff"/><rect x="777" y="271" width="5" height="5" fill="#2e93ff"/><rect x="782" y="271" width="5" height="5" fill="#408bff"/><rect x="787" y="271" width="5" height="5" fill="#5783ff"/><rect x="792" y="271" width="5" height="5" fill="#727aff"/><rect x="797" y="271" width="5" height="5" fill="#9777ff"/><rect x="802" y="271" width="5" height="5" fill="#bf75ff"/><rect x="807" y="271" width="5" height="5" fill="#e973ff"/><rect x="812" y="271" width="5" height="5" fill="#ff65ea"/><rect x="817" y="271" width="5" height="5" fill="#ff52c8"/><rect x="822" y="271" width="5" height="5" fill="#ff42ac"/><rect x="827" y="271" width="5" height="5" fill="#ff3696"/><rect x="832" y="271" width="5" height="5" fill="#ff2c83"/><rect x="837" y="271" width="5" height="5" fill="#ff2474"/><rect x="842" y="271" width="5" height="5" fill="#ff1e67"/><rect x="847" y="271" width="5" height="5" fill="#ff195c"/><rect x="852" y="271" width="5" height="5" fill="#ff1453"/><rect x="857" y="271" width="5" height="5" fill="#ff114b"/><rect x="862" y="271" width="5" height="5" fill="#ff0e44"/><rect x="867" y="271" width="5" height="5" fill="#ff0b3e"/><rect x="872" y="271" width="5" height="5" fill="#ff0939"/><rect x="877" y="271" width="5" height="5" fill="#ff0835"/><rect x="882" y="271" width="5" height="5" fill="#ff0631"/><rect x="887" y="271" width="5" height="5" fill="#ff052d"/><rect x="892" y="271" width="5" height="5" fill="#ff042a"/><rect x="897" y="271" width="5" height="5" fill="#ff0327"/><rect x="902" y="271" width="5" height="5" fill="#ff0225"/><rect x="907" y="271" width="5" height="5" fill="#ff0223"/><rect x="912" y="271" width="5" height="5" fill="#ff0121"/><rect x="917" y="271" width="5" height="5" fill="#ff011f"/><rect x="922" y="271" width="5" height="5" fill="#ff011d"/><rect x="927" y="271" width="5" height="5" fill="#ff001c"/><rect x="932" y="271" width="5" height="5" fill="#ff001a"/><rect x="937" y="271" width="5" height="5" fill="#ff0019"/><rect x="942" y="271" width="5" height="5" fill="#ff0018"/><rect x="947" y="271" width="5" height="5" fill="#ff0017"/><rect x="952" y="271" width="5" height="5" fill="#ff0016"/><rect x="957" y="271" width="5" height="5" fill="#ff0015"/><rect x="962" y="271" width="5" height="5" fill="#ff0012"/><rect x="967" y="271" width="5" height="5" fill="#ff0010"/><rect x="972" y="271" width="5" height="5" fill="#ff000e"/><rect x="977" y="271" width="5" height="5" fill="#ff000c"/><rect x="737" y="276" width="5" height="5" fill="#00a9ff"/><rect x="742" y="276" width="5" height="5" fill="#00a8ff"/><rect x="747" y="276" width="5" height="5" fill="#00a4ff"/><rect x="752" y="276" width="5" height="5" fill="#029dff"/><rect x="757" y="276" width="5" height="5" fill="#0696ff"/><rect x="762" y="276" width="5" height="5" fill="#0c8fff"/><rect x="767" y="276" width="5" height="5" fill="#1587ff"/><rect x="772" y="276" width="5" height="5" fill="#207eff"/><rect x="777" y="276" width="5" height="5" fill="#2e75ff"/><rect x="782" y="276" width="5" height="5" fill="#406bff"/><rect x="787" y="276" width="5" height="5" fill="#5661ff"/><rect x="792" y="276" width="5" height="5" fill="#755cff"/><rect x="797" y="276" width="5" height="5" fill="#995aff"/><rect x="802" y="276" width="5" height="5" fill="#bd57ff"/><rect x="807" y="276" width="5" height="5" fill="#e455ff"/><rect x="812" y="276" width="5" height="5" fill="#ff4ef3"/><rect x="817" y="276" width="5" height="5" fill="#ff3ed2"/><rect x="822" y="276" width="5" height="5" fill="#ff32b7"/><rect x="827" y="276" width="5" height="5" fill="#ff29a1"/><rect x="832" y="276" width="5" height="5" fill="#ff218f"/><rect x="837" y="276" width="5" height="5" fill="#ff1b80"/><rect x="842" y="276" width="5" height="5" fill="#ff1673"/><rect x="847" y="276" width="5" height="5" fill="#ff1268"/><rect x="852" y="276" width="5" height="5" fill="#ff0e5f"/><rect x="857" y="276" width="5" height="5" fill="#ff0c57"/><rect x="862" y="276" width="5" height="5" fill="#ff0950"/><rect x="867" y="276" width="5" height="5" fill="#ff084a"/><rect x="872" y="276" width="5" height="5" fill="#ff0644"/><rect x="877" y="276" width="5" height="5" fill="#ff053f"/><rect x="882" y="276" width="5" height="5" fill="#ff043b"/><rect x="887" y="276" width="5" height="5" fill="#ff0338"/><rect x="892" y="276" width="5" height="5" fill="#ff0234"/><rect x="897" y="276" width="5" height="5" fill="#ff0231"/><rect x="902" y="276" width="5" height="5" fill="#ff012f"/><rect x="907" y="276" width="5" height="5" fill="#ff012c"/><rect x="912" y="276" width="5" height="5" fill="#ff012a"/><rect x="917" y="276" width="5" height="5" fill="#ff0028"/><rect x="922" y="276" width="5" height="5" fill="#ff0026"/><rect x="927" y="276" width="5" height="5" fill="#ff0025"/><rect x="932" y="276" width="5" height="5" fill="#ff0023"/><rect x="937" y="276" width="5" height="5" fill="#ff0022"/><rect x="942" y="276" width="5" height="5" fill="#ff0020"/><rect x="947" y="276" width="5" height="5" fill="#ff001d"/><rect x="952" y="276" width="5" height="5" fill="#ff001a"/><rect x="957" y="276" width="5" height="5" fill="#ff0018"/><rect x="962" y="276" width="5" height="5" fill="#ff0015"/><rect x="737" y="281" width="5" height="5" fill="#0098ff"/><rect x="742" y="281" width="5" height="5" fill="#0097ff"/><rect x="747" y="281" width="5" height="5" fill="#0190ff"/><rect x="752" y="281" width="5" height="5" fill="#0388ff"/><rect x="757" y="281" width="5" height="5" fill="#0780ff"/><rect x="762" y="281" width="5" height="5" fill="#0d77ff"/><rect x="767" y="281" width="5" height="5" fill="#166eff"/><rect x="772" y="281" width="5" height="5" fill="#2164ff"/><rect x="777" y="281" width="5" height="5" fill="#2f59ff"/><rect x="782" y="281" width="5" height="5" fill="#404dff"/><rect x="787" y="281" width="5" height="5" fill="#5a47ff"/><rect x="792" y="281" width="5" height="5" fill="#7a45ff"/><rect x="797" y="281" width="5" height="5" fill="#9b43ff"/><rect x="802" y="281" width="5" height="5" fill="#bc40ff"/><rect x="807" y="281" width="5" height="5" fill="#df3eff"/><rect x="812" y="281" width="5" height="5" fill="#ff3afb"/><rect x="817" y="281" width="5" height="5" fill="#ff2edb"/><rect x="822" y="281" width="5" height="5" fill="#ff25c1"/><rect x="827" y="281" width="5" height="5" fill="#ff1dac"/><rect x="832" y="281" width="5" height="5" fill="#ff189a"/><rect x="837" y="281" width="5" height="5" fill="#ff138b"/><rect x="842" y="281" width="5" height="5" fill="#ff0f7e"/><rect x="847" y="281" width="5" height="5" fill="#ff0c73"/><rect x="852" y="281" width="5" height="5" fill="#ff0a6a"/><rect x="857" y="281" width="5" height="5" fill="#ff0862"/><rect x="862" y="281" width="5" height="5" fill="#ff065b"/><rect x="867" y="281" width="5" height="5" fill="#ff0554"/><rect x="872" y="281" width="5" height="5" fill="#ff044f"/><rect x="877" y="281" width="5" height="5" fill="#ff034a"/><rect x="882" y="281" width="5" height="5" fill="#ff0245"/><rect x="887" y="281" width="5" height="5" fill="#ff0142"/><rect x="892" y="281" width="5" height="5" fill="#ff013e"/><rect x="897" y="281" width="5" height="5" fill="#ff013b"/><rect x="902" y="281" width="5" height="5" fill="#ff0038"/><rect x="907" y="281" width="5" height="5" fill="#ff0035"/><rect x="912" y="281" width="5" height="5" fill="#ff0033"/><rect x="917" y="281" width="5" height="5" fill="#ff0031"/><rect x="922" y="281" width="5" height="5" fill="#ff002f"/><rect x="927" y="281" width="5" height="5" fill="#ff002c"/><rect x="932" y="281" width="5" height="5" fill="#ff0029"/><rect x="937" y="281" width="5" height="5" fill="#ff0026"/><rect x="942" y="281" width="5" height="5" fill="#ff0023"/><rect x="947" y="281" width="5" height="5" fill="#ff0020"/><rect x="737" y="286" width="5" height="5" fill="#0088ff"/><rect x="742" y="286" width="5" height="5" fill="#0086ff"/><rect x="747" y="286" width="5" height="5" fill="#017dff"/><rect x="752" y="286" width="5" height="5" fill="#0374ff"/><rect x="757" y="286" width="5" height="5" fill="#086bff"/><rect x="762" y="286" width="5" height="5" fill="#0e61ff"/><rect x="767" y="286" width="5" height="5" fill="#1756ff"/><rect x="772" y="286" width="5" height="5" fill="#224bff"/><rect x="777" y="286" width="5" height="5" fill="#303eff"/><rect x="782" y="286" width="5" height="5" fill="#4537ff"/><rect x="787" y="286" width="5" height="5" fill="#6235ff"/><rect x="792" y="286" width="5" height="5" fill="#7f32ff"/><rect x="797" y="286" width="5" height="5" fill="#9d30ff"/><rect x="802" y="286" width="5" height="5" fill="#bc2eff"/><rect x="807" y="286" width="5" height="5" fill="#db2bff"/><rect x="812" y="286" width="5" height="5" fill="#fc29ff"/><rect x="817" y="286" width="5" height="5" fill="#ff21e4"/><rect x="822" y="286" width="5" height="5" fill="#ff1aca"/><rect x="827" y="286" width="5" height="5" fill="#ff14b6"/><rect x="832" y="286" width="5" height="5" fill="#ff10a4"/><rect x="837" y="286" width="5" height="5" fill="#ff0d95"/><rect x="842" y="286" width="5" height="5" fill="#ff0a89"/><rect x="847" y="286" width="5" height="5" fill="#ff087e"/><rect x="852" y="286" width="5" height="5" fill="#ff0674"/><rect x="857" y="286" width="5" height="5" fill="#ff046c"/><rect x="862" y="286" width="5" height="5" fill="#ff0365"/><rect x="867" y="286" width="5" height="5" fill="#ff025f"/><rect x="872" y="286" width="5" height="5" fill="#ff0259"/><rect x="877" y="286" width="5" height="5" fill="#ff0154"/><rect x="882" y="286" width="5" height="5" fill="#ff014f"/><rect x="887" y="286" width="5" height="5" fill="#ff014b"/><rect x="892" y="286" width="5" height="5" fill="#ff0047"/><rect x="897" y="286" width="5" height="5" fill="#ff0044"/><rect x="902" y="286" width="5" height="5" fill="#ff0041"/><rect x="907" y="286" width="5" height="5" fill="#ff003e"/><rect x="912" y="286" width="5" height="5" fill="#ff003b"/><rect x="917" y="286" width="5" height="5" fill="#ff0037"/><rect x="922" y="286" width="5" height="5" fill="#ff0033"/><rect x="927" y="286" width="5" height="5" fill="#ff002f"/><rect x="932" y="286" width="5" height="5" fill="#ff002c"/><rect x="737" y="291" width="5" height="5" fill="#0079ff"/><rect x="742" y="291" width="5" height="5" fill="#0074ff"/><rect x="747" y="291" width="5" height="5" fill="#016bff"/><rect x="752" y="291" width="5" height="5" fill="#0461ff"/><rect x="757" y="291" width="5" height="5" fill="#0956ff"/><rect x="762" y="291" width="5" height="5" fill="#0f4bff"/><rect x="767" y="291" width="5" height="5" fill="#183fff"/><rect x="772" y="291" width="5" height="5" fill="#2333ff"/><rect x="777" y="291" width="5" height="5" fill="#342aff"/><rect x="782" y="291" width="5" height="5" fill="#4e28ff"/><rect x="787" y="291" width="5" height="5" fill="#6826ff"/><rect x="792" y="291" width="5" height="5" fill="#8324ff"/><rect x="797" y="291" width="5" height="5" fill="#9f22ff"/><rect x="802" y="291" width="5" height="5" fill="#bb1fff"/><rect x="807" y="291" width="5" height="5" fill="#d91dff"/><rect x="812" y="291" width="5" height="5" fill="#f61bff"/><rect x="817" y="291" width="5" height="5" fill="#ff16eb"/><rect x="822" y="291" width="5" height="5" fill="#ff11d3"/><rect x="827" y="291" width="5" height="5" fill="#ff0dbf"/><rect x="832" y="291" width="5" height="5" fill="#ff0aae"/><rect x="837" y="291" width="5" height="5" fill="#ff089f"/><rect x="842" y="291" width="5" height="5" fill="#ff0693"/><rect x="847" y="291" width="5" height="5" fill="#ff0488"/><rect x="852" y="291" width="5" height="5" fill="#ff037e"/><rect x="857" y="291" width="5" height="5" fill="#ff0276"/><rect x="862" y="291" width="5" height="5" fill="#ff026f"/><rect x="867" y="291" width="5" height="5" fill="#ff0168"/><rect x="872" y="291" width="5" height="5" fill="#ff0162"/><rect x="877" y="291" width="5" height="5" fill="#ff005d"/><rect x="882" y="291" width="5" height="5" fill="#ff0059"/><rect x="887" y="291" width="5" height="5" fill="#ff0054"/><rect x="892" y="291" width="5" height="5" fill="#ff0051"/><rect x="897" y="291" width="5" height="5" fill="#ff004c"/><rect x="902" y="291" width="5" height="5" fill="#ff0047"/><rect x="907" y="291" width="5" height="5" fill="#ff0043"/><rect x="912" y="291" width="5" height="5" fill="#ff003e"/><rect x="917" y="291" width="5" height="5" fill="#ff003a"/><rect x="732" y="296" width="5" height="5" fill="#006cff"/><rect x="737" y="296" width="5" height="5" fill="#006aff"/><rect x="742" y="296" width="5" height="5" fill="#0063ff"/><rect x="747" y="296" width="5" height="5" fill="#0259ff"/><rect x="752" y="296" width="5" height="5" fill="#054eff"/><rect x="757" y="296" width="5" height="5" fill="#0a43ff"/><rect x="762" y="296" width="5" height="5" fill="#1037ff"/><rect x="767" y="296" width="5" height="5" fill="#192aff"/><rect x="772" y="296" width="5" height="5" fill="#2720ff"/><rect x="777" y="296" width="5" height="5" fill="#3e1eff"/><rect x="782" y="296" width="5" height="5" fill="#561cff"/><rect x="787" y="296" width="5" height="5" fill="#6f1aff"/><rect x="792" y="296" width="5" height="5" fill="#8818ff"/><rect x="797" y="296" width="5" height="5" fill="#a216ff"/><rect x="802" y="296" width="5" height="5" fill="#bc15ff"/><rect x="807" y="296" width="5" height="5" fill="#d613ff"/><rect x="812" y="296" width="5" height="5" fill="#f211ff"/><rect x="817" y="296" width="5" height="5" fill="#ff0ef1"/><rect x="822" y="296" width="5" height="5" fill="#ff0ada"/><rect x="827" y="296" width="5" height="5" fill="#ff08c7"/><rect x="832" y="296" width="5" height="5" fill="#ff06b6"/><rect x="837" y="296" width="5" height="5" fill="#ff04a8"/><rect x="842" y="296" width="5" height="5" fill="#ff039c"/><rect x="847" y="296" width="5" height="5" fill="#ff0291"/><rect x="852" y="296" width="5" height="5" fill="#ff0188"/><rect x="857" y="296" width="5" height="5" fill="#ff017f"/><rect x="862" y="296" width="5" height="5" fill="#ff0078"/><rect x="867" y="296" width="5" height="5" fill="#ff0071"/><rect x="872" y="296" width="5" height="5" fill="#ff006c"/><rect x="877" y="296" width="5" height="5" fill="#ff0066"/><rect x="882" y="296" width="5" height="5" fill="#ff0060"/><rect x="887" y="296" width="5" height="5" fill="#ff005a"/><rect x="892" y="296" width="5" height="5" fill="#ff0055"/><rect x="897" y="296" width="5" height="5" fill="#ff0050"/><rect x="902" y="296" width="5" height="5" fill="#ff004b"/><rect x="732" y="301" width="5" height="5" fill="#005fff"/><rect x="737" y="301" width="5" height="5" fill="#005cff"/><rect x="742" y="301" width="5" height="5" fill="#0153ff"/><rect x="747" y="301" width="5" height="5" fill="#0248ff"/><rect x="752" y="301" width="5" height="5" fill="#063cff"/><rect x="757" y="301" width="5" height="5" fill="#0a30ff"/><rect x="762" y="301" width="5" height="5" fill="#1123ff"/><rect x="767" y="301" width="5" height="5" fill="#1c18ff"/><rect x="772" y="301" width="5" height="5" fill="#3116ff"/><rect x="777" y="301" width="5" height="5" fill="#4714ff"/><rect x="782" y="301" width="5" height="5" fill="#5e13ff"/><rect x="787" y="301" width="5" height="5" fill="#7511ff"/><rect x="792" y="301" width="5" height="5" fill="#8c10ff"/><rect x="797" y="301" width="5" height="5" fill="#a40eff"/><rect x="802" y="301" width="5" height="5" fill="#bc0cff"/><rect x="807" y="301" width="5" height="5" fill="#d50bff"/><rect x="812" y="301" width="5" height="5" fill="#ee09ff"/><rect x="817" y="301" width="5" height="5" fill="#ff08f7"/><rect x="822" y="301" width="5" height="5" fill="#ff05e1"/><rect x="827" y="301" width="5" height="5" fill="#ff04ce"/><rect x="832" y="301" width="5" height="5" fill="#ff02be"/><rect x="837" y="301" width="5" height="5" fill="#ff02b0"/><rect x="842" y="301" width="5" height="5" fill="#ff01a4"/><rect x="847" y="301" width="5" height="5" fill="#ff019a"/><rect x="852" y="301" width="5" height="5" fill="#ff0090"/><rect x="857" y="301" width="5" height="5" fill="#ff0088"/><rect x="862" y="301" width="5" height="5" fill="#ff0081"/><rect x="867" y="301" width="5" height="5" fill="#ff0079"/><rect x="872" y="301" width="5" height="5" fill="#ff0072"/><rect x="877" y="301" width="5" height="5" fill="#ff006b"/><rect x="882" y="301" width="5" height="5" fill="#ff0064"/><rect x="887" y="301" width="5" height="5" fill="#ff005e"/><rect x="732" y="306" width="5" height="5" fill="#0052ff"/><rect x="737" y="306" width="5" height="5" fill="#004eff"/><rect x="742" y="306" width="5" height="5" fill="#0143ff"/><rect x="747" y="306" width="5" height="5" fill="#0337ff"/><rect x="752" y="306" width="5" height="5" fill="#062bff"/><rect x="757" y="306" width="5" height="5" fill="#0b1eff"/><rect x="762" y="306" width="5" height="5" fill="#1311ff"/><rect x="767" y="306" width="5" height="5" fill="#2710ff"/><rect x="772" y="306" width="5" height="5" fill="#3b0eff"/><rect x="777" y="306" width="5" height="5" fill="#500dff"/><rect x="782" y="306" width="5" height="5" fill="#650cff"/><rect x="787" y="306" width="5" height="5" fill="#7b0aff"/><rect x="792" y="306" width="5" height="5" fill="#9009ff"/><rect x="797" y="306" width="5" height="5" fill="#a608ff"/><rect x="802" y="306" width="5" height="5" fill="#bd07ff"/><rect x="807" y="306" width="5" height="5" fill="#d405ff"/><rect x="812" y="306" width="5" height="5" fill="#eb04ff"/><rect x="817" y="306" width="5" height="5" fill="#ff03fc"/><rect x="822" y="306" width="5" height="5" fill="#ff02e7"/><rect x="827" y="306" width="5" height="5" fill="#ff01d5"/><rect x="832" y="306" width="5" height="5" fill="#ff01c6"/><rect x="837" y="306" width="5" height="5" fill="#ff00b8"/><rect x="842" y="306" width="5" height="5" fill="#ff00ac"/><rect x="847" y="306" width="5" height="5" fill="#ff00a2"/><rect x="852" y="306" width="5" height="5" fill="#ff0098"/><rect x="857" y="306" width="5" height="5" fill="#ff008e"/><rect x="862" y="306" width="5" height="5" fill="#ff0085"/><rect x="867" y="306" width="5" height="5" fill="#ff007d"/><rect x="872" y="306" width="5" height="5" fill="#ff0075"/><rect x="727" y="311" width="5" height="5" fill="#0048ff"/><rect x="732" y="311" width="5" height="5" fill="#0045ff"/><rect x="737" y="311" width="5" height="5" fill="#003fff"/><rect x="742" y="311" width="5" height="5" fill="#0133ff"/><rect x="747" y="311" width="5" height="5" fill="#0327ff"/><rect x="752" y="311" width="5" height="5" fill="#071aff"/><rect x="757" y="311" width="5" height="5" fill="#0c0dff"/><rect x="762" y="311" width="5" height="5" fill="#1f0bff"/><rect x="767" y="311" width="5" height="5" fill="#310aff"/><rect x="772" y="311" width="5" height="5" fill="#4509ff"/><rect x="777" y="311" width="5" height="5" fill="#5808ff"/><rect x="782" y="311" width="5" height="5" fill="#6c07ff"/><rect x="787" y="311" width="5" height="5" fill="#8006ff"/><rect x="792" y="311" width="5" height="5" fill="#9405ff"/><rect x="797" y="311" width="5" height="5" fill="#a904ff"/><rect x="802" y="311" width="5" height="5" fill="#be03ff"/><rect x="807" y="311" width="5" height="5" fill="#d302ff"/><rect x="812" y="311" width="5" height="5" fill="#e801ff"/><rect x="817" y="311" width="5" height="5" fill="#fd01ff"/><rect x="822" y="311" width="5" height="5" fill="#ff00ec"/><rect x="827" y="311" width="5" height="5" fill="#ff00db"/><rect x="832" y="311" width="5" height="5" fill="#ff00cc"/><rect x="837" y="311" width="5" height="5" fill="#ff00be"/><rect x="842" y="311" width="5" height="5" fill="#ff00b2"/><rect x="847" y="311" width="5" height="5" fill="#ff00a6"/><rect x="852" y="311" width="5" height="5" fill="#ff009c"/><rect x="857" y="311" width="5" height="5" fill="#ff0092"/><rect x="727" y="316" width="5" height="5" fill="#003cff"/><rect x="732" y="316" width="5" height="5" fill="#003aff"/><rect x="737" y="316" width="5" height="5" fill="#0030ff"/><rect x="742" y="316" width="5" height="5" fill="#0224ff"/><rect x="747" y="316" width="5" height="5" fill="#0418ff"/><rect x="752" y="316" width="5" height="5" fill="#080aff"/><rect x="757" y="316" width="5" height="5" fill="#1808ff"/><rect x="762" y="316" width="5" height="5" fill="#2907ff"/><rect x="767" y="316" width="5" height="5" fill="#3b06ff"/><rect x="772" y="316" width="5" height="5" fill="#4d05ff"/><rect x="777" y="316" width="5" height="5" fill="#6004ff"/><rect x="782" y="316" width="5" height="5" fill="#7303ff"/><rect x="787" y="316" width="5" height="5" fill="#8502ff"/><rect x="792" y="316" width="5" height="5" fill="#9802ff"/><rect x="797" y="316" width="5" height="5" fill="#ac01ff"/><rect x="802" y="316" width="5" height="5" fill="#bf01ff"/><rect x="807" y="316" width="5" height="5" fill="#d200ff"/><rect x="812" y="316" width="5" height="5" fill="#e600ff"/><rect x="817" y="316" width="5" height="5" fill="#fa00ff"/><rect x="822" y="316" width="5" height="5" fill="#ff00f1"/><rect x="827" y="316" width="5" height="5" fill="#ff00e0"/><rect x="832" y="316" width="5" height="5" fill="#ff00d0"/><rect x="837" y="316" width="5" height="5" fill="#ff00c2"/><rect x="842" y="316" width="5" height="5" fill="#ff00b6"/><rect x="727" y="321" width="5" height="5" fill="#0031ff"/><rect x="732" y="321" width="5" height="5" fill="#002eff"/><rect x="737" y="321" width="5" height="5" fill="#0022ff"/><rect x="742" y="321" width="5" height="5" fill="#0216ff"/><rect x="747" y="321" width="5" height="5" fill="#0509ff"/><rect x="752" y="321" width="5" height="5" fill="#1205ff"/><rect x="757" y="321" width="5" height="5" fill="#2304ff"/><rect x="762" y="321" width="5" height="5" fill="#3403ff"/><rect x="767" y="321" width="5" height="5" fill="#4503ff"/><rect x="772" y="321" width="5" height="5" fill="#5602ff"/><rect x="777" y="321" width="5" height="5" fill="#6701ff"/><rect x="782" y="321" width="5" height="5" fill="#7901ff"/><rect x="787" y="321" width="5" height="5" fill="#8a01ff"/><rect x="792" y="321" width="5" height="5" fill="#9c00ff"/><rect x="797" y="321" width="5" height="5" fill="#ae00ff"/><rect x="802" y="321" width="5" height="5" fill="#c000ff"/><rect x="807" y="321" width="5" height="5" fill="#d200ff"/><rect x="812" y="321" width="5" height="5" fill="#e400ff"/><rect x="817" y="321" width="5" height="5" fill="#f600ff"/><rect x="822" y="321" width="5" height="5" fill="#ff00f5"/><rect x="727" y="326" width="5" height="5" fill="#0026ff"/><rect x="732" y="326" width="5" height="5" fill="#0021ff"/><rect x="737" y="326" width="5" height="5" fill="#0115ff"/><rect x="742" y="326" width="5" height="5" fill="#0208ff"/><rect x="747" y="326" width="5" height="5" fill="#0e03ff"/><rect x="752" y="326" width="5" height="5" fill="#1d02ff"/><rect x="757" y="326" width="5" height="5" fill="#2d02ff"/><rect x="762" y="326" width="5" height="5" fill="#3d01ff"/><rect x="767" y="326" width="5" height="5" fill="#4d01ff"/><rect x="772" y="326" width="5" height="5" fill="#5e01ff"/><rect x="777" y="326" width="5" height="5" fill="#6e00ff"/><rect x="782" y="326" width="5" height="5" fill="#7e00ff"/><rect x="787" y="326" width="5" height="5" fill="#8f00ff"/><rect x="792" y="326" width="5" height="5" fill="#9f00ff"/><rect x="797" y="326" width="5" height="5" fill="#ae00ff"/><rect x="802" y="326" width="5" height="5" fill="#bf00ff"/><rect x="807" y="326" width="5" height="5" fill="#cf00ff"/><rect x="722" y="331" width="5" height="5" fill="#001fff"/><rect x="727" y="331" width="5" height="5" fill="#001cff"/><rect x="732" y="331" width="5" height="5" fill="#0014ff"/><rect x="737" y="331" width="5" height="5" fill="#0108ff"/><rect x="742" y="331" width="5" height="5" fill="#0a02ff"/><rect x="747" y="331" width="5" height="5" fill="#1901ff"/><rect x="752" y="331" width="5" height="5" fill="#2801ff"/><rect x="757" y="331" width="5" height="5" fill="#3700ff"/><rect x="762" y="331" width="5" height="5" fill="#4600ff"/><rect x="767" y="331" width="5" height="5" fill="#5500ff"/><rect x="772" y="331" width="5" height="5" fill="#6500ff"/><rect x="777" y="331" width="5" height="5" fill="#7300ff"/><rect x="782" y="331" width="5" height="5" fill="#8100ff"/><rect x="787" y="331" width="5" height="5" fill="#8f00ff"/><rect x="792" y="331" width="5" height="5" fill="#9e00ff"/><rect x="722" y="336" width="5" height="5" fill="#0015ff"/><rect x="727" y="336" width="5" height="5" fill="#0012ff"/><rect x="732" y="336" width="5" height="5" fill="#0008ff"/><rect x="737" y="336" width="5" height="5" fill="#0701ff"/><rect x="742" y="336" width="5" height="5" fill="#1500ff"/><rect x="747" y="336" width="5" height="5" fill="#2300ff"/><rect x="752" y="336" width="5" height="5" fill="#3200ff"/><rect x="757" y="336" width="5" height="5" fill="#4000ff"/><rect x="762" y="336" width="5" height="5" fill="#4c00ff"/><rect x="767" y="336" width="5" height="5" fill="#5900ff"/><rect x="772" y="336" width="5" height="5" fill="#6600ff"/><rect x="777" y="336" width="5" height="5" fill="#7300ff"/><rect x="722" y="341" width="5" height="5" fill="#000cff"/><rect x="727" y="341" width="5" height="5" fill="#0008ff"/><rect x="732" y="341" width="5" height="5" fill="#0500ff"/><rect x="737" y="341" width="5" height="5" fill="#1200ff"/><rect x="742" y="341" width="5" height="5" fill="#2000ff"/><rect x="747" y="341" width="5" height="5" fill="#2b00ff"/><rect x="752" y="341" width="5" height="5" fill="#3600ff"/><rect x="757" y="341" width="5" height="5" fill="#4200ff"/><rect x="762" y="341" width="5" height="5" fill="#4e00ff"/><rect x="722" y="346" width="5" height="5" fill="#0003ff"/><rect x="727" y="346" width="5" height="5" fill="#0300ff"/><rect x="732" y="346" width="5" height="5" fill="#0d00ff"/><rect x="737" y="346" width="5" height="5" fill="#1800ff"/><rect x="742" y="346" width="5" height="5" fill="#2200ff"/><rect x="747" y="346" width="5" height="5" fill="#2d00ff"/><rect x="722" y="351" width="5" height="5" fill="#0000ff"/><rect x="727" y="351" width="5" height="5" fill="#0600ff"/><rect x="732" y="351" width="5" height="5" fill="#1000ff"/></g></g></svg>
<svg width="1080" height="600" style="left:0;top:0"><path d="M652.4 369.5V86H1073.5V369.5H652.4" fill="none" stroke="#8c8c8c" stroke-width="1"/><line x1="649.4" y1="369.5" x2="652.4" y2="369.5" stroke="#9a9a9a"/><line x1="652.4" y1="369.5" x2="652.4" y2="373.0" stroke="#9a9a9a"/><line x1="649.4" y1="335.8" x2="652.4" y2="335.8" stroke="#9a9a9a"/><line x1="702.5" y1="369.5" x2="702.5" y2="373.0" stroke="#9a9a9a"/><line x1="649.4" y1="302.0" x2="652.4" y2="302.0" stroke="#9a9a9a"/><line x1="752.6" y1="369.5" x2="752.6" y2="373.0" stroke="#9a9a9a"/><line x1="649.4" y1="268.2" x2="652.4" y2="268.2" stroke="#9a9a9a"/><line x1="802.7" y1="369.5" x2="802.7" y2="373.0" stroke="#9a9a9a"/><line x1="649.4" y1="234.5" x2="652.4" y2="234.5" stroke="#9a9a9a"/><line x1="852.8" y1="369.5" x2="852.8" y2="373.0" stroke="#9a9a9a"/><line x1="649.4" y1="200.8" x2="652.4" y2="200.8" stroke="#9a9a9a"/><line x1="902.9" y1="369.5" x2="902.9" y2="373.0" stroke="#9a9a9a"/><line x1="649.4" y1="167.0" x2="652.4" y2="167.0" stroke="#9a9a9a"/><line x1="953.0" y1="369.5" x2="953.0" y2="373.0" stroke="#9a9a9a"/><line x1="649.4" y1="133.2" x2="652.4" y2="133.2" stroke="#9a9a9a"/><line x1="1003.1" y1="369.5" x2="1003.1" y2="373.0" stroke="#9a9a9a"/><line x1="649.4" y1="99.5" x2="652.4" y2="99.5" stroke="#9a9a9a"/><line x1="1053.2" y1="369.5" x2="1053.2" y2="373.0" stroke="#9a9a9a"/></svg>
<div class="t" style="left:643.58px;top:365.77px;font-size:8.66px;line-height:8.66px;color:#d0d0d0;transform:scaleX(1.0000);">0</div>
<div class="t" style="left:649.99px;top:374.67px;font-size:8.66px;line-height:8.66px;color:#d0d0d0;transform:scaleX(1.0000);">0</div>
<div class="t" style="left:636.36px;top:332.02px;font-size:8.66px;line-height:8.66px;color:#d0d0d0;transform:scaleX(1.0000);">0.1</div>
<div class="t" style="left:696.48px;top:374.67px;font-size:8.66px;line-height:8.66px;color:#d0d0d0;transform:scaleX(1.0000);">0.1</div>
<div class="t" style="left:636.36px;top:298.27px;font-size:8.66px;line-height:8.66px;color:#d0d0d0;transform:scaleX(1.0000);">0.2</div>
<div class="t" style="left:746.58px;top:374.67px;font-size:8.66px;line-height:8.66px;color:#d0d0d0;transform:scaleX(1.0000);">0.2</div>
<div class="t" style="left:636.36px;top:264.52px;font-size:8.66px;line-height:8.66px;color:#d0d0d0;transform:scaleX(1.0000);">0.3</div>
<div class="t" style="left:796.68px;top:374.67px;font-size:8.66px;line-height:8.66px;color:#d0d0d0;transform:scaleX(1.0000);">0.3</div>
<div class="t" style="left:636.36px;top:230.77px;font-size:8.66px;line-height:8.66px;color:#d0d0d0;transform:scaleX(1.0000);">0.4</div>
<div class="t" style="left:846.78px;top:374.67px;font-size:8.66px;line-height:8.66px;color:#d0d0d0;transform:scaleX(1.0000);">0.4</div>
<div class="t" style="left:636.36px;top:197.02px;font-size:8.66px;line-height:8.66px;color:#d0d0d0;transform:scaleX(1.0000);">0.5</div>
<div class="t" style="left:896.88px;top:374.67px;font-size:8.66px;line-height:8.66px;color:#d0d0d0;transform:scaleX(1.0000);">0.5</div>
<div class="t" style="left:636.36px;top:163.27px;font-size:8.66px;line-height:8.66px;color:#d0d0d0;transform:scaleX(1.0000);">0.6</div>
<div class="t" style="left:946.98px;top:374.67px;font-size:8.66px;line-height:8.66px;color:#d0d0d0;transform:scaleX(1.0000);">0.6</div>
<div class="t" style="left:636.36px;top:129.52px;font-size:8.66px;line-height:8.66px;color:#d0d0d0;transform:scaleX(1.0000);">0.7</div>
<div class="t" style="left:997.08px;top:374.67px;font-size:8.66px;line-height:8.66px;color:#d0d0d0;transform:scaleX(1.0000);">0.7</div>
<div class="t" style="left:636.36px;top:95.77px;font-size:8.66px;line-height:8.66px;color:#d0d0d0;transform:scaleX(1.0000);">0.8</div>
<div class="t" style="left:1047.18px;top:374.67px;font-size:8.66px;line-height:8.66px;color:#d0d0d0;transform:scaleX(1.0000);">0.8</div>
<svg width="1080" height="600" style="left:0;top:0"><rect x="780.7" y="132.1" width="9" height="9" fill="none" stroke="#f0f0f0" stroke-width="1.1"/><rect x="865.8" y="183.4" width="9" height="9" fill="none" stroke="#f0f0f0" stroke-width="1.1"/><rect x="988.6" y="257.0" width="9" height="9" fill="none" stroke="#f0f0f0" stroke-width="1.1"/><rect x="748.1" y="253.6" width="9" height="9" fill="none" stroke="#f0f0f0" stroke-width="1.1"/><rect x="815.7" y="312.7" width="9" height="9" fill="none" stroke="#f0f0f0" stroke-width="1.1"/><rect x="723.0" y="344.8" width="9" height="9" fill="none" stroke="#f0f0f0" stroke-width="1.1"/><rect x="804.6" y="254.0" width="9" height="9" fill="none" stroke="#111" stroke-width="1.5"/><circle cx="804.9" cy="166.2" r="2.7" fill="rgba(0,0,0,0.35)" stroke="rgba(0,0,0,0.6)" stroke-width="1"/><circle cx="866.5" cy="199.7" r="2.7" fill="rgba(0,0,0,0.35)" stroke="rgba(0,0,0,0.6)" stroke-width="1"/><circle cx="981.9" cy="257.7" r="2.7" fill="rgba(0,0,0,0.35)" stroke="rgba(0,0,0,0.6)" stroke-width="1"/><circle cx="762.1" cy="261.1" r="2.7" fill="rgba(0,0,0,0.35)" stroke="rgba(0,0,0,0.6)" stroke-width="1"/><circle cx="808.0" cy="318.6" r="2.7" fill="rgba(0,0,0,0.35)" stroke="rgba(0,0,0,0.6)" stroke-width="1"/><circle cx="722.2" cy="347.7" r="2.7" fill="rgba(0,0,0,0.35)" stroke="rgba(0,0,0,0.6)" stroke-width="1"/><circle cx="807.5" cy="257.9" r="2.5" fill="#fff" stroke="#222" stroke-width="1"/></svg>
<div style="position:absolute;left:926px;top:89.6px;width:144px;height:107.6px;background:#1e1e1e"></div>
<svg width="142" height="105.7" style="left:927px;top:90.6px"><filter id="fI" x="-10%" y="-10%" width="120%" height="120%"><feGaussianBlur stdDeviation="4"/></filter><g filter="url(#fI)"><rect x="-12" y="-12" width="6" height="6" fill="#8bffc6"/><rect x="-6" y="-12" width="6" height="6" fill="#8bffc3"/><rect x="0" y="-12" width="6" height="6" fill="#8affbe"/><rect x="6" y="-12" width="6" height="6" fill="#8affba"/><rect x="12" y="-12" width="6" height="6" fill="#8cffb3"/><rect x="18" y="-12" width="6" height="6" fill="#8fffad"/><rect x="24" y="-12" width="6" height="6" fill="#92ffa6"/><rect x="30" y="-12" width="6" height="6" fill="#95ffa0"/><rect x="36" y="-12" width="6" height="6" fill="#9bff9c"/><rect x="42" y="-12" width="6" height="6" fill="#aaffa1"/><rect x="48" y="-12" width="6" height="6" fill="#b9ffa7"/><rect x="54" y="-12" width="6" height="6" fill="#c7ffac"/><rect x="60" y="-12" width="6" height="6" fill="#d3ffb1"/><rect x="66" y="-12" width="6" height="6" fill="#dfffb5"/><rect x="72" y="-12" width="6" height="6" fill="#e5ffb7"/><rect x="78" y="-12" width="6" height="6" fill="#eaffb7"/><rect x="84" y="-12" width="6" height="6" fill="#efffb7"/><rect x="90" y="-12" width="6" height="6" fill="#f4ffb7"/><rect x="96" y="-12" width="6" height="6" fill="#f8ffb6"/><rect x="102" y="-12" width="6" height="6" fill="#fcffb5"/><rect x="108" y="-12" width="6" height="6" fill="#fffeb5"/><rect x="114" y="-12" width="6" height="6" fill="#fffab6"/><rect x="120" y="-12" width="6" height="6" fill="#fff7b7"/><rect x="126" y="-12" width="6" height="6" fill="#fff4b7"/><rect x="132" y="-12" width="6" height="6" fill="#fff1b7"/><rect x="138" y="-12" width="6" height="6" fill="#ffeeb5"/><rect x="144" y="-12" width="6" height="6" fill="#ffebb3"/><rect x="150" y="-12" width="6" height="6" fill="#ffe8b1"/><rect x="-12" y="-6" width="6" height="6" fill="#8cffcb"/><rect x="-6" y="-6" width="6" height="6" fill="#8bffc7"/><rect x="0" y="-6" width="6" height="6" fill="#8bffc3"/><rect x="6" y="-6" width="6" height="6" fill="#8affbf"/><rect x="12" y="-6" width="6" height="6" fill="#8affb9"/><rect x="18" y="-6" width="6" height="6" fill="#8fffb4"/><rect x="24" y="-6" width="6" height="6" fill="#96ffb1"/><rect x="30" y="-6" width="6" height="6" fill="#9effad"/><rect x="36" y="-6" width="6" height="6" fill="#a4ffaa"/><rect x="42" y="-6" width="6" height="6" fill="#afffab"/><rect x="48" y="-6" width="6" height="6" fill="#beffb0"/><rect x="54" y="-6" width="6" height="6" fill="#cbffb6"/><rect x="60" y="-6" width="6" height="6" fill="#d8ffba"/><rect x="66" y="-6" width="6" height="6" fill="#e3ffbe"/><rect x="72" y="-6" width="6" height="6" fill="#e9ffc0"/><rect x="78" y="-6" width="6" height="6" fill="#eeffc0"/><rect x="84" y="-6" width="6" height="6" fill="#f3ffc0"/><rect x="90" y="-6" width="6" height="6" fill="#f7ffc0"/><rect x="96" y="-6" width="6" height="6" fill="#fbffbe"/><rect x="102" y="-6" width="6" height="6" fill="#ffffbd"/><rect x="108" y="-6" width="6" height="6" fill="#fffbbb"/><rect x="114" y="-6" width="6" height="6" fill="#fff8b9"/><rect x="120" y="-6" width="6" height="6" fill="#fff5b7"/><rect x="126" y="-6" width="6" height="6" fill="#fff1b6"/><rect x="132" y="-6" width="6" height="6" fill="#ffeeb4"/><rect x="138" y="-6" width="6" height="6" fill="#ffeab2"/><rect x="144" y="-6" width="6" height="6" fill="#ffe7b0"/><rect x="150" y="-6" width="6" height="6" fill="#ffe4af"/><rect x="-12" y="0" width="6" height="6" fill="#8dffd0"/><rect x="-6" y="0" width="6" height="6" fill="#8cffcd"/><rect x="0" y="0" width="6" height="6" fill="#8cffc9"/><rect x="6" y="0" width="6" height="6" fill="#8bffc4"/><rect x="12" y="0" width="6" height="6" fill="#91ffc3"/><rect x="18" y="0" width="6" height="6" fill="#97ffc1"/><rect x="24" y="0" width="6" height="6" fill="#9fffbe"/><rect x="30" y="0" width="6" height="6" fill="#a6ffbb"/><rect x="36" y="0" width="6" height="6" fill="#adffb7"/><rect x="42" y="0" width="6" height="6" fill="#b4ffb4"/><rect x="48" y="0" width="6" height="6" fill="#c2ffb9"/><rect x="54" y="0" width="6" height="6" fill="#cfffbf"/><rect x="60" y="0" width="6" height="6" fill="#dbffc3"/><rect x="66" y="0" width="6" height="6" fill="#e6ffc7"/><rect x="72" y="0" width="6" height="6" fill="#ecffc9"/><rect x="78" y="0" width="6" height="6" fill="#f1ffc9"/><rect x="84" y="0" width="6" height="6" fill="#f6ffc9"/><rect x="90" y="0" width="6" height="6" fill="#faffc8"/><rect x="96" y="0" width="6" height="6" fill="#feffc7"/><rect x="102" y="0" width="6" height="6" fill="#fffdc5"/><rect x="108" y="0" width="6" height="6" fill="#fff9c3"/><rect x="114" y="0" width="6" height="6" fill="#fff6c0"/><rect x="120" y="0" width="6" height="6" fill="#fff2bc"/><rect x="126" y="0" width="6" height="6" fill="#ffedb5"/><rect x="132" y="0" width="6" height="6" fill="#ffe9b2"/><rect x="138" y="0" width="6" height="6" fill="#ffe6b0"/><rect x="144" y="0" width="6" height="6" fill="#ffe2ae"/><rect x="150" y="0" width="6" height="6" fill="#ffdfad"/><rect x="-12" y="6" width="6" height="6" fill="#8dffd5"/><rect x="-6" y="6" width="6" height="6" fill="#8dffd2"/><rect x="0" y="6" width="6" height="6" fill="#8fffd0"/><rect x="6" y="6" width="6" height="6" fill="#96ffcf"/><rect x="12" y="6" width="6" height="6" fill="#9cffce"/><rect x="18" y="6" width="6" height="6" fill="#a1ffcc"/><rect x="24" y="6" width="6" height="6" fill="#a7ffca"/><rect x="30" y="6" width="6" height="6" fill="#afffc7"/><rect x="36" y="6" width="6" height="6" fill="#b6ffc4"/><rect x="42" y="6" width="6" height="6" fill="#bcffc1"/><rect x="48" y="6" width="6" height="6" fill="#c6ffc2"/><rect x="54" y="6" width="6" height="6" fill="#d3ffc7"/><rect x="60" y="6" width="6" height="6" fill="#dfffcc"/><rect x="66" y="6" width="6" height="6" fill="#eaffd0"/><rect x="72" y="6" width="6" height="6" fill="#f0ffd1"/><rect x="78" y="6" width="6" height="6" fill="#f4ffd1"/><rect x="84" y="6" width="6" height="6" fill="#f8ffd1"/><rect x="90" y="6" width="6" height="6" fill="#fcffd0"/><rect x="96" y="6" width="6" height="6" fill="#fffece"/><rect x="102" y="6" width="6" height="6" fill="#fffbcc"/><rect x="108" y="6" width="6" height="6" fill="#fff8ca"/><rect x="114" y="6" width="6" height="6" fill="#fff4c6"/><rect x="120" y="6" width="6" height="6" fill="#ffefc0"/><rect x="126" y="6" width="6" height="6" fill="#ffeab9"/><rect x="132" y="6" width="6" height="6" fill="#ffe5b2"/><rect x="138" y="6" width="6" height="6" fill="#ffe1ad"/><rect x="144" y="6" width="6" height="6" fill="#ffddab"/><rect x="150" y="6" width="6" height="6" fill="#ffdaaa"/><rect x="-12" y="12" width="6" height="6" fill="#8effdb"/><rect x="-6" y="12" width="6" height="6" fill="#91ffd9"/><rect x="0" y="12" width="6" height="6" fill="#98ffd9"/><rect x="6" y="12" width="6" height="6" fill="#9fffd8"/><rect x="12" y="12" width="6" height="6" fill="#a5ffd7"/><rect x="18" y="12" width="6" height="6" fill="#abffd7"/><rect x="24" y="12" width="6" height="6" fill="#b1ffd5"/><rect x="30" y="12" width="6" height="6" fill="#b6ffd3"/><rect x="36" y="12" width="6" height="6" fill="#beffd0"/><rect x="42" y="12" width="6" height="6" fill="#c4ffce"/><rect x="48" y="12" width="6" height="6" fill="#caffcb"/><rect x="54" y="12" width="6" height="6" fill="#d7ffcf"/><rect x="60" y="12" width="6" height="6" fill="#e3ffd4"/><rect x="66" y="12" width="6" height="6" fill="#edffd8"/><rect x="72" y="12" width="6" height="6" fill="#f3ffd9"/><rect x="78" y="12" width="6" height="6" fill="#f7ffd9"/><rect x="84" y="12" width="6" height="6" fill="#fbffd8"/><rect x="90" y="12" width="6" height="6" fill="#ffffd7"/><rect x="96" y="12" width="6" height="6" fill="#fffcd6"/><rect x="102" y="12" width="6" height="6" fill="#fff9d3"/><rect x="108" y="12" width="6" height="6" fill="#fff5cf"/><rect x="114" y="12" width="6" height="6" fill="#fff1c9"/><rect x="120" y="12" width="6" height="6" fill="#ffecc3"/><rect x="126" y="12" width="6" height="6" fill="#ffe7bd"/><rect x="132" y="12" width="6" height="6" fill="#ffe2b6"/><rect x="138" y="12" width="6" height="6" fill="#ffdcae"/><rect x="144" y="12" width="6" height="6" fill="#ffd7a9"/><rect x="150" y="12" width="6" height="6" fill="#ffd5a7"/><rect x="-12" y="18" width="6" height="6" fill="#91ffe1"/><rect x="-6" y="18" width="6" height="6" fill="#98ffe1"/><rect x="0" y="18" width="6" height="6" fill="#a0ffe1"/><rect x="6" y="18" width="6" height="6" fill="#a7ffe1"/><rect x="12" y="18" width="6" height="6" fill="#aeffe0"/><rect x="18" y="18" width="6" height="6" fill="#b5ffe0"/><rect x="24" y="18" width="6" height="6" fill="#bbffdf"/><rect x="30" y="18" width="6" height="6" fill="#c0ffde"/><rect x="36" y="18" width="6" height="6" fill="#c5ffdc"/><rect x="42" y="18" width="6" height="6" fill="#ccffd9"/><rect x="48" y="18" width="6" height="6" fill="#d2ffd6"/><rect x="54" y="18" width="6" height="6" fill="#dbffd7"/><rect x="60" y="18" width="6" height="6" fill="#e7ffdc"/><rect x="66" y="18" width="6" height="6" fill="#f1ffe0"/><rect x="72" y="18" width="6" height="6" fill="#f6ffe1"/><rect x="78" y="18" width="6" height="6" fill="#faffe1"/><rect x="84" y="18" width="6" height="6" fill="#fdffe0"/><rect x="90" y="18" width="6" height="6" fill="#fffdde"/><rect x="96" y="18" width="6" height="6" fill="#fffadc"/><rect x="102" y="18" width="6" height="6" fill="#fff7d8"/><rect x="108" y="18" width="6" height="6" fill="#fff3d3"/><rect x="114" y="18" width="6" height="6" fill="#ffeecd"/><rect x="120" y="18" width="6" height="6" fill="#ffe9c6"/><rect x="126" y="18" width="6" height="6" fill="#ffe4bf"/><rect x="132" y="18" width="6" height="6" fill="#ffdfb8"/><rect x="138" y="18" width="6" height="6" fill="#ffd9b1"/><rect x="144" y="18" width="6" height="6" fill="#ffd3a9"/><rect x="150" y="18" width="6" height="6" fill="#ffcea5"/><rect x="-12" y="24" width="6" height="6" fill="#97ffe9"/><rect x="-6" y="24" width="6" height="6" fill="#9fffe8"/><rect x="0" y="24" width="6" height="6" fill="#a7ffe8"/><rect x="6" y="24" width="6" height="6" fill="#afffe8"/><rect x="12" y="24" width="6" height="6" fill="#b6ffe8"/><rect x="18" y="24" width="6" height="6" fill="#bdffe8"/><rect x="24" y="24" width="6" height="6" fill="#c3ffe7"/><rect x="30" y="24" width="6" height="6" fill="#c9ffe7"/><rect x="36" y="24" width="6" height="6" fill="#ceffe6"/><rect x="42" y="24" width="6" height="6" fill="#d3ffe4"/><rect x="48" y="24" width="6" height="6" fill="#d9ffe2"/><rect x="54" y="24" width="6" height="6" fill="#dfffdf"/><rect x="60" y="24" width="6" height="6" fill="#eaffe3"/><rect x="66" y="24" width="6" height="6" fill="#f4ffe7"/><rect x="72" y="24" width="6" height="6" fill="#f9ffe8"/><rect x="78" y="24" width="6" height="6" fill="#fcffe8"/><rect x="84" y="24" width="6" height="6" fill="#ffffe6"/><rect x="90" y="24" width="6" height="6" fill="#fffce5"/><rect x="96" y="24" width="6" height="6" fill="#fff9e1"/><rect x="102" y="24" width="6" height="6" fill="#fff4dc"/><rect x="108" y="24" width="6" height="6" fill="#fff0d6"/><rect x="114" y="24" width="6" height="6" fill="#ffebd0"/><rect x="120" y="24" width="6" height="6" fill="#ffe6c9"/><rect x="126" y="24" width="6" height="6" fill="#ffe1c2"/><rect x="132" y="24" width="6" height="6" fill="#ffdbbb"/><rect x="138" y="24" width="6" height="6" fill="#ffd5b3"/><rect x="144" y="24" width="6" height="6" fill="#ffcfab"/><rect x="150" y="24" width="6" height="6" fill="#ffc8a3"/><rect x="-12" y="30" width="6" height="6" fill="#9cffef"/><rect x="-6" y="30" width="6" height="6" fill="#a5ffef"/><rect x="0" y="30" width="6" height="6" fill="#adffef"/><rect x="6" y="30" width="6" height="6" fill="#b5ffef"/><rect x="12" y="30" width="6" height="6" fill="#bcffef"/><rect x="18" y="30" width="6" height="6" fill="#c3ffef"/><rect x="24" y="30" width="6" height="6" fill="#caffef"/><rect x="30" y="30" width="6" height="6" fill="#d1ffee"/><rect x="36" y="30" width="6" height="6" fill="#d6ffee"/><rect x="42" y="30" width="6" height="6" fill="#dbffed"/><rect x="48" y="30" width="6" height="6" fill="#e0ffec"/><rect x="54" y="30" width="6" height="6" fill="#e6ffe9"/><rect x="60" y="30" width="6" height="6" fill="#edffea"/><rect x="66" y="30" width="6" height="6" fill="#f7ffee"/><rect x="72" y="30" width="6" height="6" fill="#fbffef"/><rect x="78" y="30" width="6" height="6" fill="#feffee"/><rect x="84" y="30" width="6" height="6" fill="#fffdec"/><rect x="90" y="30" width="6" height="6" fill="#fffae9"/><rect x="96" y="30" width="6" height="6" fill="#fff6e4"/><rect x="102" y="30" width="6" height="6" fill="#fff2de"/><rect x="108" y="30" width="6" height="6" fill="#ffedd8"/><rect x="114" y="30" width="6" height="6" fill="#ffe8d2"/><rect x="120" y="30" width="6" height="6" fill="#ffe3cb"/><rect x="126" y="30" width="6" height="6" fill="#ffddc4"/><rect x="132" y="30" width="6" height="6" fill="#ffd7bc"/><rect x="138" y="30" width="6" height="6" fill="#ffd0b4"/><rect x="144" y="30" width="6" height="6" fill="#ffcaac"/><rect x="150" y="30" width="6" height="6" fill="#ffc3a4"/><rect x="-12" y="36" width="6" height="6" fill="#a1fff5"/><rect x="-6" y="36" width="6" height="6" fill="#a9fff5"/><rect x="0" y="36" width="6" height="6" fill="#b2fff5"/><rect x="6" y="36" width="6" height="6" fill="#bafff5"/><rect x="12" y="36" width="6" height="6" fill="#c1fff5"/><rect x="18" y="36" width="6" height="6" fill="#c9fff5"/><rect x="24" y="36" width="6" height="6" fill="#d0fff5"/><rect x="30" y="36" width="6" height="6" fill="#d7fff5"/><rect x="36" y="36" width="6" height="6" fill="#ddfff5"/><rect x="42" y="36" width="6" height="6" fill="#e3fff5"/><rect x="48" y="36" width="6" height="6" fill="#e8fff4"/><rect x="54" y="36" width="6" height="6" fill="#ecfff3"/><rect x="60" y="36" width="6" height="6" fill="#f1fff1"/><rect x="66" y="36" width="6" height="6" fill="#f9fff4"/><rect x="72" y="36" width="6" height="6" fill="#fdfff5"/><rect x="78" y="36" width="6" height="6" fill="#fffef4"/><rect x="84" y="36" width="6" height="6" fill="#fffbf1"/><rect x="90" y="36" width="6" height="6" fill="#fff8ec"/><rect x="96" y="36" width="6" height="6" fill="#fff4e6"/><rect x="102" y="36" width="6" height="6" fill="#ffefe0"/><rect x="108" y="36" width="6" height="6" fill="#ffeada"/><rect x="114" y="36" width="6" height="6" fill="#ffe4d3"/><rect x="120" y="36" width="6" height="6" fill="#ffdfcc"/><rect x="126" y="36" width="6" height="6" fill="#ffd8c4"/><rect x="132" y="36" width="6" height="6" fill="#ffd2bd"/><rect x="138" y="36" width="6" height="6" fill="#ffcbb5"/><rect x="144" y="36" width="6" height="6" fill="#ffc5ac"/><rect x="150" y="36" width="6" height="6" fill="#ffbea4"/><rect x="-12" y="42" width="6" height="6" fill="#a4fffb"/><rect x="-6" y="42" width="6" height="6" fill="#acfffb"/><rect x="0" y="42" width="6" height="6" fill="#b5fffb"/><rect x="6" y="42" width="6" height="6" fill="#bdfffa"/><rect x="12" y="42" width="6" height="6" fill="#c5fffa"/><rect x="18" y="42" width="6" height="6" fill="#cdfffa"/><rect x="24" y="42" width="6" height="6" fill="#d4fffa"/><rect x="30" y="42" width="6" height="6" fill="#dbfffa"/><rect x="36" y="42" width="6" height="6" fill="#e2fffa"/><rect x="42" y="42" width="6" height="6" fill="#e8fffa"/><rect x="48" y="42" width="6" height="6" fill="#edfffa"/><rect x="54" y="42" width="6" height="6" fill="#f2fffa"/><rect x="60" y="42" width="6" height="6" fill="#f6fff9"/><rect x="66" y="42" width="6" height="6" fill="#fcfffa"/><rect x="72" y="42" width="6" height="6" fill="#fffffa"/><rect x="78" y="42" width="6" height="6" fill="#fffdf7"/><rect x="84" y="42" width="6" height="6" fill="#fff9f3"/><rect x="90" y="42" width="6" height="6" fill="#fff5ee"/><rect x="96" y="42" width="6" height="6" fill="#fff0e8"/><rect x="102" y="42" width="6" height="6" fill="#ffebe1"/><rect x="108" y="42" width="6" height="6" fill="#ffe6db"/><rect x="114" y="42" width="6" height="6" fill="#ffe0d3"/><rect x="120" y="42" width="6" height="6" fill="#ffdacc"/><rect x="126" y="42" width="6" height="6" fill="#ffd3c4"/><rect x="132" y="42" width="6" height="6" fill="#ffccbc"/><rect x="138" y="42" width="6" height="6" fill="#ffc6b4"/><rect x="144" y="42" width="6" height="6" fill="#ffbeac"/><rect x="150" y="42" width="6" height="6" fill="#ffb7a3"/><rect x="-12" y="48" width="6" height="6" fill="#a6feff"/><rect x="-6" y="48" width="6" height="6" fill="#aefeff"/><rect x="0" y="48" width="6" height="6" fill="#b7feff"/><rect x="6" y="48" width="6" height="6" fill="#bfffff"/><rect x="12" y="48" width="6" height="6" fill="#c7ffff"/><rect x="18" y="48" width="6" height="6" fill="#cfffff"/><rect x="24" y="48" width="6" height="6" fill="#d6ffff"/><rect x="30" y="48" width="6" height="6" fill="#ddffff"/><rect x="36" y="48" width="6" height="6" fill="#e4ffff"/><rect x="42" y="48" width="6" height="6" fill="#ebfffe"/><rect x="48" y="48" width="6" height="6" fill="#f1fffe"/><rect x="54" y="48" width="6" height="6" fill="#f6fffe"/><rect x="60" y="48" width="6" height="6" fill="#fbfffe"/><rect x="66" y="48" width="6" height="6" fill="#fefffe"/><rect x="72" y="48" width="6" height="6" fill="#fffefd"/><rect x="78" y="48" width="6" height="6" fill="#fffaf8"/><rect x="84" y="48" width="6" height="6" fill="#fff6f3"/><rect x="90" y="48" width="6" height="6" fill="#fff1ee"/><rect x="96" y="48" width="6" height="6" fill="#ffece7"/><rect x="102" y="48" width="6" height="6" fill="#ffe6e1"/><rect x="108" y="48" width="6" height="6" fill="#ffe0da"/><rect x="114" y="48" width="6" height="6" fill="#ffdad2"/><rect x="120" y="48" width="6" height="6" fill="#ffd3cb"/><rect x="126" y="48" width="6" height="6" fill="#ffcdc3"/><rect x="132" y="48" width="6" height="6" fill="#ffc6bb"/><rect x="138" y="48" width="6" height="6" fill="#ffbeb2"/><rect x="144" y="48" width="6" height="6" fill="#ffb7aa"/><rect x="150" y="48" width="6" height="6" fill="#ffafa1"/><rect x="-12" y="54" width="6" height="6" fill="#a7f9ff"/><rect x="-6" y="54" width="6" height="6" fill="#affaff"/><rect x="0" y="54" width="6" height="6" fill="#b8faff"/><rect x="6" y="54" width="6" height="6" fill="#c0faff"/><rect x="12" y="54" width="6" height="6" fill="#c8fbff"/><rect x="18" y="54" width="6" height="6" fill="#d0fbff"/><rect x="24" y="54" width="6" height="6" fill="#d7fbff"/><rect x="30" y="54" width="6" height="6" fill="#defcff"/><rect x="36" y="54" width="6" height="6" fill="#e5fcff"/><rect x="42" y="54" width="6" height="6" fill="#ebfcff"/><rect x="48" y="54" width="6" height="6" fill="#f1fdff"/><rect x="54" y="54" width="6" height="6" fill="#f6fdff"/><rect x="60" y="54" width="6" height="6" fill="#fafdff"/><rect x="66" y="54" width="6" height="6" fill="#fefdff"/><rect x="72" y="54" width="6" height="6" fill="#fffbfc"/><rect x="78" y="54" width="6" height="6" fill="#fff7f7"/><rect x="84" y="54" width="6" height="6" fill="#fff2f2"/><rect x="90" y="54" width="6" height="6" fill="#ffedec"/><rect x="96" y="54" width="6" height="6" fill="#ffe7e6"/><rect x="102" y="54" width="6" height="6" fill="#ffe1df"/><rect x="108" y="54" width="6" height="6" fill="#ffdbd8"/><rect x="114" y="54" width="6" height="6" fill="#ffd5d1"/><rect x="120" y="54" width="6" height="6" fill="#ffcec9"/><rect x="126" y="54" width="6" height="6" fill="#ffc7c1"/><rect x="132" y="54" width="6" height="6" fill="#ffc0b9"/><rect x="138" y="54" width="6" height="6" fill="#ffb8b1"/><rect x="144" y="54" width="6" height="6" fill="#ffb1a8"/><rect x="150" y="54" width="6" height="6" fill="#ffa99f"/><rect x="-12" y="60" width="6" height="6" fill="#a7f5ff"/><rect x="-6" y="60" width="6" height="6" fill="#b0f5ff"/><rect x="0" y="60" width="6" height="6" fill="#b8f6ff"/><rect x="6" y="60" width="6" height="6" fill="#c0f6ff"/><rect x="12" y="60" width="6" height="6" fill="#c8f7ff"/><rect x="18" y="60" width="6" height="6" fill="#cff7ff"/><rect x="24" y="60" width="6" height="6" fill="#d6f8ff"/><rect x="30" y="60" width="6" height="6" fill="#ddf8ff"/><rect x="36" y="60" width="6" height="6" fill="#e4f9ff"/><rect x="42" y="60" width="6" height="6" fill="#eaf9ff"/><rect x="48" y="60" width="6" height="6" fill="#effaff"/><rect x="54" y="60" width="6" height="6" fill="#f3faff"/><rect x="60" y="60" width="6" height="6" fill="#f6f8ff"/><rect x="66" y="60" width="6" height="6" fill="#fdf7ff"/><rect x="72" y="60" width="6" height="6" fill="#fff5fb"/><rect x="78" y="60" width="6" height="6" fill="#fff1f6"/><rect x="84" y="60" width="6" height="6" fill="#ffedf1"/><rect x="90" y="60" width="6" height="6" fill="#ffe8eb"/><rect x="96" y="60" width="6" height="6" fill="#ffe2e4"/><rect x="102" y="60" width="6" height="6" fill="#ffdcdd"/><rect x="108" y="60" width="6" height="6" fill="#ffd5d6"/><rect x="114" y="60" width="6" height="6" fill="#ffcece"/><rect x="120" y="60" width="6" height="6" fill="#ffc8c7"/><rect x="126" y="60" width="6" height="6" fill="#ffc1bf"/><rect x="132" y="60" width="6" height="6" fill="#ffbab7"/><rect x="138" y="60" width="6" height="6" fill="#ffb2ae"/><rect x="144" y="60" width="6" height="6" fill="#ffaba6"/><rect x="150" y="60" width="6" height="6" fill="#ffa39d"/><rect x="-12" y="66" width="6" height="6" fill="#a6f1ff"/><rect x="-6" y="66" width="6" height="6" fill="#aff1ff"/><rect x="0" y="66" width="6" height="6" fill="#b7f2ff"/><rect x="6" y="66" width="6" height="6" fill="#bff2ff"/><rect x="12" y="66" width="6" height="6" fill="#c6f3ff"/><rect x="18" y="66" width="6" height="6" fill="#cdf3ff"/><rect x="24" y="66" width="6" height="6" fill="#d4f4ff"/><rect x="30" y="66" width="6" height="6" fill="#dbf4ff"/><rect x="36" y="66" width="6" height="6" fill="#e1f5ff"/><rect x="42" y="66" width="6" height="6" fill="#e6f5ff"/><rect x="48" y="66" width="6" height="6" fill="#ebf5ff"/><rect x="54" y="66" width="6" height="6" fill="#eff3ff"/><rect x="60" y="66" width="6" height="6" fill="#f4f0ff"/><rect x="66" y="66" width="6" height="6" fill="#fdf1ff"/><rect x="72" y="66" width="6" height="6" fill="#ffeffb"/><rect x="78" y="66" width="6" height="6" fill="#ffebf5"/><rect x="84" y="66" width="6" height="6" fill="#ffe6ee"/><rect x="90" y="66" width="6" height="6" fill="#ffe2e9"/><rect x="96" y="66" width="6" height="6" fill="#ffdde2"/><rect x="102" y="66" width="6" height="6" fill="#ffd7dc"/><rect x="108" y="66" width="6" height="6" fill="#ffd0d5"/><rect x="114" y="66" width="6" height="6" fill="#ffcacd"/><rect x="120" y="66" width="6" height="6" fill="#ffc2c5"/><rect x="126" y="66" width="6" height="6" fill="#ffbbbc"/><rect x="132" y="66" width="6" height="6" fill="#ffb3b4"/><rect x="138" y="66" width="6" height="6" fill="#ffabab"/><rect x="144" y="66" width="6" height="6" fill="#ffa3a2"/><rect x="150" y="66" width="6" height="6" fill="#ff9c9a"/><rect x="-12" y="72" width="6" height="6" fill="#a4ecff"/><rect x="-6" y="72" width="6" height="6" fill="#adedff"/><rect x="0" y="72" width="6" height="6" fill="#b4edff"/><rect x="6" y="72" width="6" height="6" fill="#bceeff"/><rect x="12" y="72" width="6" height="6" fill="#c3efff"/><rect x="18" y="72" width="6" height="6" fill="#caefff"/><rect x="24" y="72" width="6" height="6" fill="#d1f0ff"/><rect x="30" y="72" width="6" height="6" fill="#d7f0ff"/><rect x="36" y="72" width="6" height="6" fill="#ddf0ff"/><rect x="42" y="72" width="6" height="6" fill="#e2f1ff"/><rect x="48" y="72" width="6" height="6" fill="#e6eeff"/><rect x="54" y="72" width="6" height="6" fill="#e8e8ff"/><rect x="60" y="72" width="6" height="6" fill="#f2e9ff"/><rect x="66" y="72" width="6" height="6" fill="#fdeaff"/><rect x="72" y="72" width="6" height="6" fill="#ffe8fb"/><rect x="78" y="72" width="6" height="6" fill="#ffe4f5"/><rect x="84" y="72" width="6" height="6" fill="#ffdfed"/><rect x="90" y="72" width="6" height="6" fill="#ffdae6"/><rect x="96" y="72" width="6" height="6" fill="#ffd5e0"/><rect x="102" y="72" width="6" height="6" fill="#ffd0d9"/><rect x="108" y="72" width="6" height="6" fill="#ffcad3"/><rect x="114" y="72" width="6" height="6" fill="#ffc4cb"/><rect x="120" y="72" width="6" height="6" fill="#ffbdc3"/><rect x="126" y="72" width="6" height="6" fill="#ffb5bb"/><rect x="132" y="72" width="6" height="6" fill="#ffaeb3"/><rect x="138" y="72" width="6" height="6" fill="#ffa6aa"/><rect x="144" y="72" width="6" height="6" fill="#ff9ea1"/><rect x="150" y="72" width="6" height="6" fill="#ff9597"/><rect x="-12" y="78" width="6" height="6" fill="#a2e8ff"/><rect x="-6" y="78" width="6" height="6" fill="#aae8ff"/><rect x="0" y="78" width="6" height="6" fill="#b1e9ff"/><rect x="6" y="78" width="6" height="6" fill="#b9e9ff"/><rect x="12" y="78" width="6" height="6" fill="#c0eaff"/><rect x="18" y="78" width="6" height="6" fill="#c6eaff"/><rect x="24" y="78" width="6" height="6" fill="#cdebff"/><rect x="30" y="78" width="6" height="6" fill="#d2ebff"/><rect x="36" y="78" width="6" height="6" fill="#d8ebff"/><rect x="42" y="78" width="6" height="6" fill="#dce9ff"/><rect x="48" y="78" width="6" height="6" fill="#dfe3ff"/><rect x="54" y="78" width="6" height="6" fill="#e6e1ff"/><rect x="60" y="78" width="6" height="6" fill="#f1e2ff"/><rect x="66" y="78" width="6" height="6" fill="#fce2ff"/><rect x="72" y="78" width="6" height="6" fill="#ffe0fb"/><rect x="78" y="78" width="6" height="6" fill="#ffdcf5"/><rect x="84" y="78" width="6" height="6" fill="#ffd8ed"/><rect x="90" y="78" width="6" height="6" fill="#ffd2e5"/><rect x="96" y="78" width="6" height="6" fill="#ffcddd"/><rect x="102" y="78" width="6" height="6" fill="#ffc8d7"/><rect x="108" y="78" width="6" height="6" fill="#ffc2d0"/><rect x="114" y="78" width="6" height="6" fill="#ffbcc9"/><rect x="120" y="78" width="6" height="6" fill="#ffb6c1"/><rect x="126" y="78" width="6" height="6" fill="#ffafb9"/><rect x="132" y="78" width="6" height="6" fill="#ffa7b1"/><rect x="138" y="78" width="6" height="6" fill="#ffa0a8"/><rect x="144" y="78" width="6" height="6" fill="#ff989f"/><rect x="150" y="78" width="6" height="6" fill="#ff9096"/><rect x="-12" y="84" width="6" height="6" fill="#9ee3ff"/><rect x="-6" y="84" width="6" height="6" fill="#a6e3ff"/><rect x="0" y="84" width="6" height="6" fill="#ade4ff"/><rect x="6" y="84" width="6" height="6" fill="#b4e4ff"/><rect x="12" y="84" width="6" height="6" fill="#bbe5ff"/><rect x="18" y="84" width="6" height="6" fill="#c2e5ff"/><rect x="24" y="84" width="6" height="6" fill="#c8e6ff"/><rect x="30" y="84" width="6" height="6" fill="#cde6ff"/><rect x="36" y="84" width="6" height="6" fill="#d1e3ff"/><rect x="42" y="84" width="6" height="6" fill="#d4ddff"/><rect x="48" y="84" width="6" height="6" fill="#d8d7ff"/><rect x="54" y="84" width="6" height="6" fill="#e4d9ff"/><rect x="60" y="84" width="6" height="6" fill="#f0d9ff"/><rect x="66" y="84" width="6" height="6" fill="#fcd9ff"/><rect x="72" y="84" width="6" height="6" fill="#ffd7fb"/><rect x="78" y="84" width="6" height="6" fill="#ffd4f4"/><rect x="84" y="84" width="6" height="6" fill="#ffcfed"/><rect x="90" y="84" width="6" height="6" fill="#ffcae5"/><rect x="96" y="84" width="6" height="6" fill="#ffc5dc"/><rect x="102" y="84" width="6" height="6" fill="#ffbed3"/><rect x="108" y="84" width="6" height="6" fill="#ffb9cd"/><rect x="114" y="84" width="6" height="6" fill="#ffb4c6"/><rect x="120" y="84" width="6" height="6" fill="#ffaebe"/><rect x="126" y="84" width="6" height="6" fill="#ffa7b7"/><rect x="132" y="84" width="6" height="6" fill="#ffa0ae"/><rect x="138" y="84" width="6" height="6" fill="#ff99a6"/><rect x="144" y="84" width="6" height="6" fill="#ff919d"/><rect x="150" y="84" width="6" height="6" fill="#ff8f9a"/><rect x="-12" y="90" width="6" height="6" fill="#a0e0ff"/><rect x="-6" y="90" width="6" height="6" fill="#a1deff"/><rect x="0" y="90" width="6" height="6" fill="#a9deff"/><rect x="6" y="90" width="6" height="6" fill="#afdfff"/><rect x="12" y="90" width="6" height="6" fill="#b6dfff"/><rect x="18" y="90" width="6" height="6" fill="#bce0ff"/><rect x="24" y="90" width="6" height="6" fill="#c2e0ff"/><rect x="30" y="90" width="6" height="6" fill="#c6ddff"/><rect x="36" y="90" width="6" height="6" fill="#cad6ff"/><rect x="42" y="90" width="6" height="6" fill="#cccfff"/><rect x="48" y="90" width="6" height="6" fill="#d6ceff"/><rect x="54" y="90" width="6" height="6" fill="#e2d0ff"/><rect x="60" y="90" width="6" height="6" fill="#efd1ff"/><rect x="66" y="90" width="6" height="6" fill="#fbd1ff"/><rect x="72" y="90" width="6" height="6" fill="#ffcefb"/><rect x="78" y="90" width="6" height="6" fill="#ffcbf4"/><rect x="84" y="90" width="6" height="6" fill="#ffc7ed"/><rect x="90" y="90" width="6" height="6" fill="#ffc2e5"/><rect x="96" y="90" width="6" height="6" fill="#ffbcdc"/><rect x="102" y="90" width="6" height="6" fill="#ffb6d3"/><rect x="108" y="90" width="6" height="6" fill="#ffafc9"/><rect x="114" y="90" width="6" height="6" fill="#ffaac2"/><rect x="120" y="90" width="6" height="6" fill="#ffa4bb"/><rect x="126" y="90" width="6" height="6" fill="#ff9eb3"/><rect x="132" y="90" width="6" height="6" fill="#ff97ac"/><rect x="138" y="90" width="6" height="6" fill="#ff90a3"/><rect x="144" y="90" width="6" height="6" fill="#ff8e9f"/><rect x="150" y="90" width="6" height="6" fill="#ff8e9d"/><rect x="-12" y="96" width="6" height="6" fill="#a2ddff"/><rect x="-6" y="96" width="6" height="6" fill="#a3dbff"/><rect x="0" y="96" width="6" height="6" fill="#a4d9ff"/><rect x="6" y="96" width="6" height="6" fill="#aad9ff"/><rect x="12" y="96" width="6" height="6" fill="#b0d9ff"/><rect x="18" y="96" width="6" height="6" fill="#b6daff"/><rect x="24" y="96" width="6" height="6" fill="#bbd7ff"/><rect x="30" y="96" width="6" height="6" fill="#bed0ff"/><rect x="36" y="96" width="6" height="6" fill="#c1c8ff"/><rect x="42" y="96" width="6" height="6" fill="#c7c4ff"/><rect x="48" y="96" width="6" height="6" fill="#d4c6ff"/><rect x="54" y="96" width="6" height="6" fill="#e1c7ff"/><rect x="60" y="96" width="6" height="6" fill="#eec7ff"/><rect x="66" y="96" width="6" height="6" fill="#fbc7ff"/><rect x="72" y="96" width="6" height="6" fill="#ffc5fb"/><rect x="78" y="96" width="6" height="6" fill="#ffc1f4"/><rect x="84" y="96" width="6" height="6" fill="#ffbdec"/><rect x="90" y="96" width="6" height="6" fill="#ffb9e4"/><rect x="96" y="96" width="6" height="6" fill="#ffb3db"/><rect x="102" y="96" width="6" height="6" fill="#ffadd2"/><rect x="108" y="96" width="6" height="6" fill="#ffa6c8"/><rect x="114" y="96" width="6" height="6" fill="#ffa0bf"/><rect x="120" y="96" width="6" height="6" fill="#ff9ab8"/><rect x="126" y="96" width="6" height="6" fill="#ff94b0"/><rect x="132" y="96" width="6" height="6" fill="#ff8ea8"/><rect x="138" y="96" width="6" height="6" fill="#ff8ca4"/><rect x="144" y="96" width="6" height="6" fill="#ff8da2"/><rect x="150" y="96" width="6" height="6" fill="#ff8da0"/><rect x="-12" y="102" width="6" height="6" fill="#a3daff"/><rect x="-6" y="102" width="6" height="6" fill="#a4d8ff"/><rect x="0" y="102" width="6" height="6" fill="#a5d6ff"/><rect x="6" y="102" width="6" height="6" fill="#a6d4ff"/><rect x="12" y="102" width="6" height="6" fill="#aad3ff"/><rect x="18" y="102" width="6" height="6" fill="#afd0ff"/><rect x="24" y="102" width="6" height="6" fill="#b3c9ff"/><rect x="30" y="102" width="6" height="6" fill="#b6c2ff"/><rect x="36" y="102" width="6" height="6" fill="#b8b9ff"/><rect x="42" y="102" width="6" height="6" fill="#c5bbff"/><rect x="48" y="102" width="6" height="6" fill="#d2bcff"/><rect x="54" y="102" width="6" height="6" fill="#dfbdff"/><rect x="60" y="102" width="6" height="6" fill="#edbeff"/><rect x="66" y="102" width="6" height="6" fill="#fbbeff"/><rect x="72" y="102" width="6" height="6" fill="#ffbbfb"/><rect x="78" y="102" width="6" height="6" fill="#ffb8f4"/><rect x="84" y="102" width="6" height="6" fill="#ffb4ec"/><rect x="90" y="102" width="6" height="6" fill="#ffafe4"/><rect x="96" y="102" width="6" height="6" fill="#ffaadb"/><rect x="102" y="102" width="6" height="6" fill="#ffa4d2"/><rect x="108" y="102" width="6" height="6" fill="#ff9dc8"/><rect x="114" y="102" width="6" height="6" fill="#ff96be"/><rect x="120" y="102" width="6" height="6" fill="#ff8fb4"/><rect x="126" y="102" width="6" height="6" fill="#ff8bad"/><rect x="132" y="102" width="6" height="6" fill="#ff8baa"/><rect x="138" y="102" width="6" height="6" fill="#ff8ca8"/><rect x="144" y="102" width="6" height="6" fill="#ff8ca5"/><rect x="150" y="102" width="6" height="6" fill="#ff8da3"/><rect x="-12" y="108" width="6" height="6" fill="#a4d7ff"/><rect x="-6" y="108" width="6" height="6" fill="#a5d6ff"/><rect x="0" y="108" width="6" height="6" fill="#a6d4ff"/><rect x="6" y="108" width="6" height="6" fill="#a8d2ff"/><rect x="12" y="108" width="6" height="6" fill="#a8ccff"/><rect x="18" y="108" width="6" height="6" fill="#a8c3ff"/><rect x="24" y="108" width="6" height="6" fill="#aabbff"/><rect x="30" y="108" width="6" height="6" fill="#adb2ff"/><rect x="36" y="108" width="6" height="6" fill="#b5afff"/><rect x="42" y="108" width="6" height="6" fill="#c3b1ff"/><rect x="48" y="108" width="6" height="6" fill="#d0b3ff"/><rect x="54" y="108" width="6" height="6" fill="#deb4ff"/><rect x="60" y="108" width="6" height="6" fill="#ecb4ff"/><rect x="66" y="108" width="6" height="6" fill="#fab4ff"/><rect x="72" y="108" width="6" height="6" fill="#ffb1fc"/><rect x="78" y="108" width="6" height="6" fill="#ffaef4"/><rect x="84" y="108" width="6" height="6" fill="#ffaaec"/><rect x="90" y="108" width="6" height="6" fill="#ffa5e4"/><rect x="96" y="108" width="6" height="6" fill="#ffa0db"/><rect x="102" y="108" width="6" height="6" fill="#ff9ad1"/><rect x="108" y="108" width="6" height="6" fill="#ff94c8"/><rect x="114" y="108" width="6" height="6" fill="#ff8dbe"/><rect x="120" y="108" width="6" height="6" fill="#ff8bb6"/><rect x="126" y="108" width="6" height="6" fill="#ff8ab0"/><rect x="132" y="108" width="6" height="6" fill="#ff8aad"/><rect x="138" y="108" width="6" height="6" fill="#ff8bab"/><rect x="144" y="108" width="6" height="6" fill="#ff8ca8"/><rect x="150" y="108" width="6" height="6" fill="#ff8ca6"/><rect x="-12" y="114" width="6" height="6" fill="#a6d5ff"/><rect x="-6" y="114" width="6" height="6" fill="#a7d4ff"/><rect x="0" y="114" width="6" height="6" fill="#a8d2ff"/><rect x="6" y="114" width="6" height="6" fill="#a8cdff"/><rect x="12" y="114" width="6" height="6" fill="#a8c4ff"/><rect x="18" y="114" width="6" height="6" fill="#a7bbff"/><rect x="24" y="114" width="6" height="6" fill="#a7b1ff"/><rect x="30" y="114" width="6" height="6" fill="#a7a7ff"/><rect x="36" y="114" width="6" height="6" fill="#b3a6ff"/><rect x="42" y="114" width="6" height="6" fill="#c0a7ff"/><rect x="48" y="114" width="6" height="6" fill="#cfa9ff"/><rect x="54" y="114" width="6" height="6" fill="#dda9ff"/><rect x="60" y="114" width="6" height="6" fill="#ebaaff"/><rect x="66" y="114" width="6" height="6" fill="#faaaff"/><rect x="72" y="114" width="6" height="6" fill="#ffa7fc"/><rect x="78" y="114" width="6" height="6" fill="#ffa3f4"/><rect x="84" y="114" width="6" height="6" fill="#ff9fec"/><rect x="90" y="114" width="6" height="6" fill="#ff9be3"/><rect x="96" y="114" width="6" height="6" fill="#ff96db"/><rect x="102" y="114" width="6" height="6" fill="#ff93d2"/><rect x="108" y="114" width="6" height="6" fill="#ff91cb"/><rect x="114" y="114" width="6" height="6" fill="#ff8fc3"/><rect x="120" y="114" width="6" height="6" fill="#ff8dbc"/><rect x="126" y="114" width="6" height="6" fill="#ff8bb6"/><rect x="132" y="114" width="6" height="6" fill="#ff8ab0"/><rect x="138" y="114" width="6" height="6" fill="#ff8aae"/><rect x="144" y="114" width="6" height="6" fill="#ff8bab"/><rect x="150" y="114" width="6" height="6" fill="#ff8ba9"/></g></svg>
<svg width="1080" height="600" style="left:0;top:0"><circle cx="987.8" cy="139.4" r="2.6" fill="#aaa" stroke="#444" stroke-width="0.9"/><circle cx="991.6" cy="137.2" r="2.6" fill="#fff" stroke="#444" stroke-width="0.9"/><rect x="992.4" y="139" width="8.6" height="8.6" fill="none" stroke="#222" stroke-width="1.2"/></svg>
<div style="position:absolute;left:906px;top:350.4px;width:164.7px;height:16.6px;background:#2b2b2b"></div>
<div class="t" style="left:907.80px;top:351.70px;font-size:12.99px;line-height:12.99px;color:#e8e8e8;transform:scaleX(0.9792);-webkit-text-stroke:0.25px #e8e8e8;">Gamut Coverage:  76.5%</div>
<div class="t" style="left:10.30px;top:409.12px;font-size:17.46px;line-height:17.46px;color:#eee;transform:scaleX(1.0961);-webkit-text-stroke:0.25px #eee;">Current Reading</div>
<div class="t" style="left:10.30px;top:434.85px;font-size:14.94px;line-height:14.94px;color:#eee;transform:scaleX(1.0687);-webkit-text-stroke:0.25px #eee;">x: 0.3108</div>
<div class="t" style="left:10.30px;top:458.75px;font-size:14.94px;line-height:14.94px;color:#eee;transform:scaleX(1.0687);-webkit-text-stroke:0.25px #eee;">y: 0.3315</div>
<div class="t" style="left:10.30px;top:481.95px;font-size:14.94px;line-height:14.94px;color:#eee;transform:scaleX(1.0622);-webkit-text-stroke:0.25px #eee;">fL: 130.62</div>
<div class="t" style="left:10.30px;top:505.55px;font-size:14.94px;line-height:14.94px;color:#eee;transform:scaleX(1.1219);-webkit-text-stroke:0.25px #eee;">cd/m²: 447.55</div>
<div style="position:absolute;left:223.2px;top:410.1px;width:169.7px;height:106.0px;background:#232323"></div>
<svg width="1080" height="600" style="left:0;top:0"><line x1="220.2" y1="410.1" x2="392.9" y2="410.1" stroke="#9a9a9a"/><line x1="220.2" y1="436.6" x2="392.9" y2="436.6" stroke="#9a9a9a"/><line x1="220.2" y1="462.5" x2="392.9" y2="462.5" stroke="#9a9a9a"/><line x1="220.2" y1="489.5" x2="392.9" y2="489.5" stroke="#9a9a9a"/><line x1="220.2" y1="516.1" x2="392.9" y2="516.1" stroke="#9a9a9a"/><path d="M223.2 410.1V519.1M392.9 410.1V519.1" stroke="#9a9a9a"/></svg>
<div class="t" style="left:214.88px;top:406.37px;font-size:8.66px;line-height:8.66px;color:#cfcfcf;transform:scaleX(1.0000);">4</div>
<div class="t" style="left:214.88px;top:432.87px;font-size:8.66px;line-height:8.66px;color:#cfcfcf;transform:scaleX(1.0000);">2</div>
<div class="t" style="left:214.88px;top:458.77px;font-size:8.66px;line-height:8.66px;color:#cfcfcf;transform:scaleX(1.0000);">0</div>
<div class="t" style="left:212.00px;top:485.77px;font-size:8.66px;line-height:8.66px;color:#cfcfcf;transform:scaleX(1.0000);">-2</div>
<div class="t" style="left:212.00px;top:512.37px;font-size:8.66px;line-height:8.66px;color:#cfcfcf;transform:scaleX(1.0000);">-4</div>
<div class="t" style="left:277.50px;top:401.07px;font-size:8.66px;line-height:8.66px;color:#cfcfcf;transform:scaleX(0.9340);">RGB Balance</div>
<div class="t" style="left:278.25px;top:517.77px;font-size:8.66px;line-height:8.66px;color:#cfcfcf;transform:scaleX(0.9865);">235 235 235</div>
<div style="position:absolute;left:239.8px;top:462.5px;width:44.2px;height:43.9px;background:linear-gradient(#ff2a2a,#f00000 60%,#a00000);box-shadow:inset 0 0 0 1px rgba(0,0,0,0.4)"></div>
<div style="position:absolute;left:284.9px;top:447.9px;width:43.4px;height:14.6px;background:linear-gradient(#20a020,#108010 60%,#006000);box-shadow:inset 0 0 0 1px rgba(0,0,0,0.45)"></div>
<div style="position:absolute;left:329.4px;top:462.5px;width:44.4px;height:16.2px;background:linear-gradient(#1a1aff,#0000f0 60%,#0000a0);box-shadow:inset 0 0 0 1px rgba(0,0,0,0.45)"></div>
<div style="position:absolute;left:416px;top:397.9px;width:48px;height:10px;background:#2f2f2f"></div>
<div style="position:absolute;left:416px;top:407.9px;width:48px;height:10.4px;background:#1d1d1d"></div>
<div style="position:absolute;left:464px;top:399.2px;width:431.7px;height:19.1px;background:linear-gradient(#1c1c1c,#0e0e0e)"></div>
<div style="position:absolute;left:407px;top:418.5px;width:488.70000000000005px;height:20.100000000000023px;background:#3e3e3e"></div>
<div style="position:absolute;left:407px;top:438.6px;width:488.70000000000005px;height:20.299999999999955px;background:#6c6c6c"></div>
<div style="position:absolute;left:407px;top:458.9px;width:488.70000000000005px;height:19.80000000000001px;background:#3e3e3e"></div>
<div style="position:absolute;left:407px;top:478.7px;width:488.70000000000005px;height:19.80000000000001px;background:#6c6c6c"></div>
<div style="position:absolute;left:407px;top:498.5px;width:488.70000000000005px;height:19.399999999999977px;background:#3e3e3e"></div>
<div style="position:absolute;left:407px;top:397.9px;width:9px;height:20.4px;background:#000"></div>
<div style="position:absolute;left:407px;top:418.3px;width:9px;height:99.6px;background:#242424"></div>
<div class="t" style="left:469.50px;top:404.21px;font-size:10.61px;line-height:10.61px;color:#f0f0f0;transform:scaleX(0.8700);">180 180 180</div>
<div class="t" style="left:526.50px;top:404.21px;font-size:10.61px;line-height:10.61px;color:#f0f0f0;transform:scaleX(0.8700);">180 16 16</div>
<div class="t" style="left:575.20px;top:404.21px;font-size:10.61px;line-height:10.61px;color:#f0f0f0;transform:scaleX(0.8700);">16 180 16</div>
<div class="t" style="left:630.20px;top:404.21px;font-size:10.61px;line-height:10.61px;color:#f0f0f0;transform:scaleX(0.8700);">16 16 180</div>
<div class="t" style="left:679.20px;top:404.21px;font-size:10.61px;line-height:10.61px;color:#f0f0f0;transform:scaleX(0.8700);">16 180 180</div>
<div class="t" style="left:734.20px;top:404.21px;font-size:10.61px;line-height:10.61px;color:#f0f0f0;transform:scaleX(0.8700);">180 16 180</div>
<div class="t" style="left:785.60px;top:404.21px;font-size:10.61px;line-height:10.61px;color:#f0f0f0;transform:scaleX(0.8700);">180 180 16</div>
<div class="t" style="left:841.00px;top:404.21px;font-size:10.61px;line-height:10.61px;color:#f0f0f0;transform:scaleX(0.8700);">235 235 235</div>
<div class="t" style="left:418.70px;top:422.20px;font-size:12.99px;line-height:12.99px;color:#f2f2f2;transform:scaleX(0.8030);">x: CIE31</div>
<div class="t" style="left:469.50px;top:422.20px;font-size:12.99px;line-height:12.99px;color:#f2f2f2;transform:scaleX(0.8950);">0.3095</div>
<div class="t" style="left:526.50px;top:422.20px;font-size:12.99px;line-height:12.99px;color:#f2f2f2;transform:scaleX(0.8950);">0.6576</div>
<div class="t" style="left:575.20px;top:422.20px;font-size:12.99px;line-height:12.99px;color:#f2f2f2;transform:scaleX(0.8950);">0.3044</div>
<div class="t" style="left:630.20px;top:422.20px;font-size:12.99px;line-height:12.99px;color:#f2f2f2;transform:scaleX(0.8950);">0.1393</div>
<div class="t" style="left:679.20px;top:422.20px;font-size:12.99px;line-height:12.99px;color:#f2f2f2;transform:scaleX(0.8950);">0.2190</div>
<div class="t" style="left:734.20px;top:422.20px;font-size:12.99px;line-height:12.99px;color:#f2f2f2;transform:scaleX(0.8950);">0.3106</div>
<div class="t" style="left:785.60px;top:422.20px;font-size:12.99px;line-height:12.99px;color:#f2f2f2;transform:scaleX(0.8950);">0.4274</div>
<div class="t" style="left:841.00px;top:422.20px;font-size:12.99px;line-height:12.99px;color:#f2f2f2;transform:scaleX(0.8950);">0.3108</div>
<div class="t" style="left:418.70px;top:442.30px;font-size:12.99px;line-height:12.99px;color:#f2f2f2;transform:scaleX(0.8131);">y: CIE31</div>
<div class="t" style="left:469.50px;top:442.30px;font-size:12.99px;line-height:12.99px;color:#f2f2f2;transform:scaleX(0.8950);">0.3308</div>
<div class="t" style="left:526.50px;top:442.30px;font-size:12.99px;line-height:12.99px;color:#f2f2f2;transform:scaleX(0.8950);">0.3312</div>
<div class="t" style="left:575.20px;top:442.30px;font-size:12.99px;line-height:12.99px;color:#f2f2f2;transform:scaleX(0.8950);">0.6025</div>
<div class="t" style="left:630.20px;top:442.30px;font-size:12.99px;line-height:12.99px;color:#f2f2f2;transform:scaleX(0.8950);">0.0645</div>
<div class="t" style="left:679.20px;top:442.30px;font-size:12.99px;line-height:12.99px;color:#f2f2f2;transform:scaleX(0.8950);">0.3213</div>
<div class="t" style="left:734.20px;top:442.30px;font-size:12.99px;line-height:12.99px;color:#f2f2f2;transform:scaleX(0.8950);">0.1508</div>
<div class="t" style="left:785.60px;top:442.30px;font-size:12.99px;line-height:12.99px;color:#f2f2f2;transform:scaleX(0.8950);">0.5031</div>
<div class="t" style="left:841.00px;top:442.30px;font-size:12.99px;line-height:12.99px;color:#f2f2f2;transform:scaleX(0.8950);">0.3315</div>
<div class="t" style="left:418.70px;top:462.60px;font-size:12.99px;line-height:12.99px;color:#f2f2f2;transform:scaleX(1.0000);">Y</div>
<div class="t" style="left:469.50px;top:462.60px;font-size:12.99px;line-height:12.99px;color:#f2f2f2;transform:scaleX(0.8950);">250.4813</div>
<div class="t" style="left:526.50px;top:462.60px;font-size:12.99px;line-height:12.99px;color:#f2f2f2;transform:scaleX(0.8950);">53.9506</div>
<div class="t" style="left:575.20px;top:462.60px;font-size:12.99px;line-height:12.99px;color:#f2f2f2;transform:scaleX(0.8950);">179.5766</div>
<div class="t" style="left:630.20px;top:462.60px;font-size:12.99px;line-height:12.99px;color:#f2f2f2;transform:scaleX(0.8950);">21.1671</div>
<div class="t" style="left:679.20px;top:462.60px;font-size:12.99px;line-height:12.99px;color:#f2f2f2;transform:scaleX(0.8950);">202.7975</div>
<div class="t" style="left:734.20px;top:462.60px;font-size:12.99px;line-height:12.99px;color:#f2f2f2;transform:scaleX(0.8950);">74.6539</div>
<div class="t" style="left:785.60px;top:462.60px;font-size:12.99px;line-height:12.99px;color:#f2f2f2;transform:scaleX(0.8950);">237.6528</div>
<div class="t" style="left:841.00px;top:462.60px;font-size:12.99px;line-height:12.99px;color:#f2f2f2;transform:scaleX(0.8950);">447.5509</div>
<div class="t" style="left:418.70px;top:482.40px;font-size:12.99px;line-height:12.99px;color:#f2f2f2;transform:scaleX(0.9224);">Target Y</div>
<div class="t" style="left:469.50px;top:482.40px;font-size:12.99px;line-height:12.99px;color:#f2f2f2;transform:scaleX(0.8950);">250.4813</div>
<div class="t" style="left:526.50px;top:482.40px;font-size:12.99px;line-height:12.99px;color:#f2f2f2;transform:scaleX(0.8950);">57.3575</div>
<div class="t" style="left:575.20px;top:482.40px;font-size:12.99px;line-height:12.99px;color:#f2f2f2;transform:scaleX(0.8950);">173.2656</div>
<div class="t" style="left:630.20px;top:482.40px;font-size:12.99px;line-height:12.99px;color:#f2f2f2;transform:scaleX(0.8950);">19.8582</div>
<div class="t" style="left:679.20px;top:482.40px;font-size:12.99px;line-height:12.99px;color:#f2f2f2;transform:scaleX(0.8950);">193.1238</div>
<div class="t" style="left:734.20px;top:482.40px;font-size:12.99px;line-height:12.99px;color:#f2f2f2;transform:scaleX(0.8950);">77.2157</div>
<div class="t" style="left:785.60px;top:482.40px;font-size:12.99px;line-height:12.99px;color:#f2f2f2;transform:scaleX(0.8950);">230.6231</div>
<div class="t" style="left:841.00px;top:482.40px;font-size:12.99px;line-height:12.99px;color:#f2f2f2;transform:scaleX(0.8950);">447.5509</div>
<div class="t" style="left:418.70px;top:502.20px;font-size:12.99px;line-height:12.99px;color:#f2f2f2;transform:scaleX(0.8808);">ΔE 2000</div>
<div class="t" style="left:469.50px;top:502.20px;font-size:12.99px;line-height:12.99px;color:#f2f2f2;transform:scaleX(0.8950);">3.0299</div>
<div class="t" style="left:526.50px;top:502.20px;font-size:12.99px;line-height:12.99px;color:#f2f2f2;transform:scaleX(0.8950);">2.3866</div>
<div class="t" style="left:575.20px;top:502.20px;font-size:12.99px;line-height:12.99px;color:#f2f2f2;transform:scaleX(0.8950);">5.1850</div>
<div class="t" style="left:630.20px;top:502.20px;font-size:12.99px;line-height:12.99px;color:#f2f2f2;transform:scaleX(0.8950);">3.9769</div>
<div class="t" style="left:679.20px;top:502.20px;font-size:12.99px;line-height:12.99px;color:#f2f2f2;transform:scaleX(0.8950);">4.8278</div>
<div class="t" style="left:734.20px;top:502.20px;font-size:12.99px;line-height:12.99px;color:#f2f2f2;transform:scaleX(0.8950);">2.9316</div>
<div class="t" style="left:785.60px;top:502.20px;font-size:12.99px;line-height:12.99px;color:#f2f2f2;transform:scaleX(0.8950);">4.5209</div>
<div class="t" style="left:841.00px;top:502.20px;font-size:12.99px;line-height:12.99px;color:#f2f2f2;transform:scaleX(0.8950);">3.2325</div>
<div style="position:absolute;left:0px;top:527px;width:1080px;height:45px;background:#333"></div>
<div style="position:absolute;left:1.1px;top:528.9px;width:104.5px;height:42.1px;background:linear-gradient(#8a8a8a,#6e6e6e 60%,#5a5a5a);border-radius:3px"></div>
<div style="position:absolute;left:5.6px;top:533.5px;width:96.4px;height:23.8px;background:#c4c4c4;border-radius:3px;box-shadow:0 0 0 1px rgba(60,60,60,0.5)"></div>
<div class="t" style="left:33.03px;top:562.24px;font-size:8.10px;line-height:8.10px;color:#333;font-weight:bold;transform:scaleX(0.9000);">180 180 180</div>
<div style="position:absolute;left:107.39999999999999px;top:528.9px;width:104.5px;height:42.1px;background:linear-gradient(#8a8a8a,#6e6e6e 60%,#5a5a5a);border-radius:3px"></div>
<div style="position:absolute;left:111.89999999999999px;top:533.5px;width:96.4px;height:23.8px;background:#c40000;border-radius:3px;box-shadow:0 0 0 1px rgba(60,60,60,0.5)"></div>
<div class="t" style="left:143.38px;top:562.24px;font-size:8.10px;line-height:8.10px;color:#333;font-weight:bold;transform:scaleX(0.9000);">180 16 16</div>
<div style="position:absolute;left:213.7px;top:528.9px;width:104.5px;height:42.1px;background:linear-gradient(#8a8a8a,#6e6e6e 60%,#5a5a5a);border-radius:3px"></div>
<div style="position:absolute;left:218.2px;top:533.5px;width:96.4px;height:23.8px;background:#00c000;border-radius:3px;box-shadow:0 0 0 1px rgba(60,60,60,0.5)"></div>
<div class="t" style="left:249.68px;top:562.24px;font-size:8.10px;line-height:8.10px;color:#333;font-weight:bold;transform:scaleX(0.9000);">16 180 16</div>
<div style="position:absolute;left:320.0px;top:528.9px;width:104.5px;height:42.1px;background:linear-gradient(#8a8a8a,#6e6e6e 60%,#5a5a5a);border-radius:3px"></div>
<div style="position:absolute;left:324.5px;top:533.5px;width:96.4px;height:23.8px;background:#0000c4;border-radius:3px;box-shadow:0 0 0 1px rgba(60,60,60,0.5)"></div>
<div class="t" style="left:355.98px;top:562.24px;font-size:8.10px;line-height:8.10px;color:#333;font-weight:bold;transform:scaleX(0.9000);">16 16 180</div>
<div style="position:absolute;left:426.3px;top:528.9px;width:104.5px;height:42.1px;background:linear-gradient(#8a8a8a,#6e6e6e 60%,#5a5a5a);border-radius:3px"></div>
<div style="position:absolute;left:430.8px;top:533.5px;width:96.4px;height:23.8px;background:#00c0c0;border-radius:3px;box-shadow:0 0 0 1px rgba(60,60,60,0.5)"></div>
<div class="t" style="left:460.26px;top:562.24px;font-size:8.10px;line-height:8.10px;color:#333;font-weight:bold;transform:scaleX(0.9000);">16 180 180</div>
<div style="position:absolute;left:532.6px;top:528.9px;width:104.5px;height:42.1px;background:linear-gradient(#8a8a8a,#6e6e6e 60%,#5a5a5a);border-radius:3px"></div>
<div style="position:absolute;left:537.1px;top:533.5px;width:96.4px;height:23.8px;background:#c400c4;border-radius:3px;box-shadow:0 0 0 1px rgba(60,60,60,0.5)"></div>
<div class="t" style="left:566.56px;top:562.24px;font-size:8.10px;line-height:8.10px;color:#333;font-weight:bold;transform:scaleX(0.9000);">180 16 180</div>
<div style="position:absolute;left:638.9px;top:528.9px;width:104.5px;height:42.1px;background:linear-gradient(#8a8a8a,#6e6e6e 60%,#5a5a5a);border-radius:3px"></div>
<div style="position:absolute;left:643.4px;top:533.5px;width:96.4px;height:23.8px;background:#c4c400;border-radius:3px;box-shadow:0 0 0 1px rgba(60,60,60,0.5)"></div>
<div class="t" style="left:672.86px;top:562.24px;font-size:8.10px;line-height:8.10px;color:#333;font-weight:bold;transform:scaleX(0.9000);">180 180 16</div>
<div style="position:absolute;left:744.7px;top:528.9px;width:106px;height:42.1px;background:#2a2a2a;border-radius:3px"></div>
<div style="position:absolute;left:749.4px;top:532.6px;width:98.3px;height:25.2px;background:#fff;border-radius:3px"></div>
<div class="t" style="left:776.98px;top:562.24px;font-size:8.10px;line-height:8.10px;color:#f4f4f4;font-weight:bold;transform:scaleX(0.9200);">235 235 235</div>
<div style="position:absolute;left:852.7px;top:529.4px;width:33.7px;height:41.6px;background:linear-gradient(#8c8c8c,#5e5e5e);border-radius:3px"></div>
<div style="position:absolute;left:852.7px;top:542px;width:33.7px;height:1px;background:#4a4a4a"></div>
<svg width="40" height="46" style="left:852px;top:528px"><circle cx="17" cy="7.5" r="4.8" fill="#6c6c6c"/><path d="M14.5 9l2.5-3l2.5 3z" fill="#222"/><rect x="7.5" y="18" width="19.5" height="19.5" rx="3" fill="#a2a2a2" stroke="#1a1a1a" stroke-width="1.5"/><rect x="12" y="22.5" width="10" height="10" fill="#050505"/></svg>
<div style="position:absolute;left:887px;top:528.7px;width:159px;height:20.5px;background:linear-gradient(#a0a0a0,#8a8a8a 40%,#686868)"></div>
<svg width="24" height="22" style="left:891px;top:527.9px"><circle cx="12" cy="11" r="6.8" fill="#7e7e7e"/><circle cx="12" cy="11" r="6.8" fill="none" stroke="#9a9a9a" stroke-width="0.6"/><rect x="9.6" y="8.6" width="4.8" height="4.8" fill="#2a2a2a"/></svg>
<div style="position:absolute;left:918.9px;top:528.7px;width:1px;height:20.5px;background:#505050"></div>
<svg width="24" height="22" style="left:923px;top:527.9px"><circle cx="12" cy="11" r="6.8" fill="#7e7e7e"/><circle cx="12" cy="11" r="6.8" fill="none" stroke="#9a9a9a" stroke-width="0.6"/><path d="M10 8l4.8 3l-4.8 3z" fill="#2a2a2a"/></svg>
<div style="position:absolute;left:951.3px;top:528.7px;width:1px;height:20.5px;background:#505050"></div>
<svg width="24" height="22" style="left:955.5px;top:527.9px"><circle cx="12" cy="11" r="6.8" fill="#7e7e7e"/><circle cx="12" cy="11" r="6.8" fill="none" stroke="#9a9a9a" stroke-width="0.6"/><path d="M9.3 7.8v6.4M14.7 7.8v6.4M9.3 11h5.4" stroke="#2a2a2a" stroke-width="1.3" fill="none"/></svg>
<div style="position:absolute;left:983.1px;top:528.7px;width:1px;height:20.5px;background:#505050"></div>
<svg width="24" height="22" style="left:987px;top:527.9px"><circle cx="12" cy="11" r="6.8" fill="#7e7e7e"/><circle cx="12" cy="11" r="6.8" fill="none" stroke="#9a9a9a" stroke-width="0.6"/><path d="M12 11c-1.3-1.8-4.2-1.8-4.2 0s2.9 1.8 4.2 0s4.2-1.8 4.2 0s-2.9 1.8-4.2 0z" stroke="#2a2a2a" stroke-width="1.3" fill="none"/></svg>
<div style="position:absolute;left:1015.2px;top:528.7px;width:1px;height:20.5px;background:#505050"></div>
<svg width="24" height="22" style="left:1018.5px;top:527.9px"><circle cx="12" cy="11" r="6.8" fill="#7e7e7e"/><circle cx="12" cy="11" r="6.8" fill="none" stroke="#9a9a9a" stroke-width="0.6"/><path d="M8.8 10.3a3.4 3.4 0 0 1 6-1.8M15.2 11.7a3.4 3.4 0 0 1-6 1.8" stroke="#2a2a2a" stroke-width="1.4" fill="none"/><path d="M14.5 6.8v2.4h-2.4M9.5 15.2v-2.4h2.4" stroke="#2a2a2a" stroke-width="1" fill="none"/></svg>
<div style="position:absolute;left:1046px;top:528.7px;width:34px;height:20.5px;background:#333"></div>
<svg width="30" height="22" style="left:1046px;top:528px"><circle cx="15" cy="11" r="8" fill="#2a2a2a"/></svg>
<div style="position:absolute;left:887px;top:550.5px;width:96px;height:20.4px;background:linear-gradient(#a4a4a4,#8c8c8c 40%,#6a6a6a)"></div>
<div style="position:absolute;left:983.6px;top:550.5px;width:94.2px;height:20.4px;background:linear-gradient(#a4a4a4,#8c8c8c 40%,#6a6a6a)"></div>
<svg width="200" height="22" style="left:880px;top:550px"><circle cx="28.7" cy="10.2" r="6.3" fill="#7e7e7e"/><path d="M29 7.8l-2.2 2.4l2.2 2.4M31.6 7.8l-2.2 2.4l2.2 2.4" stroke="#444" stroke-width="1.2" fill="none"/><circle cx="178.7" cy="10.2" r="6.3" fill="#7e7e7e"/><path d="M175.8 7.8l2.2 2.4l-2.2 2.4M178.4 7.8l2.2 2.4l-2.2 2.4" stroke="#444" stroke-width="1.2" fill="none"/></svg>
<div class="t" style="left:927.80px;top:553.78px;font-size:15.50px;line-height:15.50px;color:#333;transform:scaleX(1.0213);-webkit-text-stroke:0.4px #333;">Back</div>
<div class="t" style="left:1003.00px;top:553.78px;font-size:15.50px;line-height:15.50px;color:#333;transform:scaleX(1.1263);-webkit-text-stroke:0.4px #333;">Next</div>
<div style="position:absolute;left:0px;top:572px;width:1080px;height:28px;background:#1a1e23"></div>
<svg width="30" height="28" style="left:0;top:572px"><path d="M12 9.2l4.6-.65v4.45H12zM17.3 8.45l6.2-.9v5.45h-6.2zM12 13.7h4.6v4.45L12 17.5zM17.3 13.7h6.2v5.45l-6.2-.9z" fill="#fff"/></svg>
<div style="position:absolute;left:33.9px;top:572px;width:241.9px;height:28px;background:#f2f2f2"></div>
<svg width="20" height="28" style="left:36px;top:572px"><circle cx="9" cy="14" r="5.6" fill="none" stroke="#111" stroke-width="1.6"/></svg>
<div class="t" style="left:62px;top:579.5px;font-size:10.6px;line-height:13px;color:#333">在这里输入你要搜索的内容</div>
<svg width="20" height="28" style="left:252px;top:572px"><rect x="7.5" y="8.5" width="4" height="7" rx="2" fill="none" stroke="#333" stroke-width="1.1"/><path d="M6 13.5a3.5 3.5 0 0 0 7 0M9.5 17v2.5" stroke="#333" stroke-width="1.1" fill="none"/></svg>
<svg width="1080" height="28" style="left:0;top:572px"><rect x="287" y="10" width="9" height="9" fill="none" stroke="#fff" stroke-width="1.2"/><path d="M284.5 8v13M298.5 8v13" stroke="#fff" stroke-width="1"/><path d="M321 15h13c0-4.5-2.5-7.5-6.5-7.5S321 10.5 321 14.5c0 4 3 6.5 6.5 6.5c2.5 0 4.5-1 5.5-2.5" fill="none" stroke="#1e8fe0" stroke-width="2.6"/><rect x="354.5" y="8.5" width="16" height="12" fill="#e8c250"/><rect x="356" y="12" width="13" height="7" fill="#f7dd83"/><rect x="358" y="15" width="9" height="4" fill="#3a8fd0"/><rect x="350" y="26" width="28" height="2" fill="#7fb4e6"/><path d="M390 11h16v11h-16z" fill="#fff"/><path d="M394.5 11v-2.5a3.5 3.5 0 0 1 7 0v2.5" fill="none" stroke="#fff" stroke-width="1.2"/><rect x="395" y="13.5" width="2.7" height="2.7" fill="#f25022"/><rect x="398.5" y="13.5" width="2.7" height="2.7" fill="#7fba00"/><rect x="395" y="17" width="2.7" height="2.7" fill="#00a4ef"/><rect x="398.5" y="17" width="2.7" height="2.7" fill="#ffb900"/><path d="M425 10h16v10h-16z" fill="#fff"/><path d="M425 10l8 6l8-6" fill="none" stroke="#1a1e23" stroke-width="1.4"/><path d="M426 19.5l6-5.5" stroke="#1a1e23" stroke-width="1.4"/><ellipse cx="466" cy="12" rx="7" ry="4.5" fill="#f4c0d0" transform="rotate(-20 466 12)"/><circle cx="463" cy="11" r="1.2" fill="#c33"/><circle cx="467" cy="10" r="1.2" fill="#36c"/><path d="M468 14l3 6M466 15l-1 6" stroke="#3a7bd5" stroke-width="1.4"/><ellipse cx="499" cy="12.5" rx="6.5" ry="5.5" fill="#3fd141"/><ellipse cx="505" cy="16.5" rx="5.2" ry="4.4" fill="#fff"/><circle cx="497" cy="11.5" r="0.9" fill="#1a1e23"/><circle cx="501" cy="11.5" r="0.9" fill="#1a1e23"/><path d="M530 10l7.5-3.5l7.5 3.5v8l-7.5 3.5l-7.5-3.5z" fill="#2b6ef5"/><path d="M533.5 11.5l1.8 6l2.2-4.5l2.2 4.5l1.8-6" fill="none" stroke="#fff" stroke-width="1.1"/><rect x="524" y="26" width="27" height="2" fill="#7fb4e6"/><defs><linearGradient id="cmg" x1="0" y1="0" x2="1" y2="1"><stop offset="0" stop-color="#3c3"/><stop offset=".4" stop-color="#cc3"/><stop offset=".7" stop-color="#c3c"/><stop offset="1" stop-color="#63c"/></linearGradient></defs><rect x="555.7" y="0" width="34.5" height="28" fill="#4a4d50"/><circle cx="572" cy="13.3" r="7.6" fill="#050505" stroke="url(#cmg)" stroke-width="1.4"/><text x="572" y="15.9" font-size="7" font-weight="bold" fill="#fff" text-anchor="middle" font-family="Liberation Sans">CM</text><rect x="555.7" y="26" width="34.5" height="2" fill="#8ac0e8"/><circle cx="827" cy="10.5" r="2.3" fill="none" stroke="#fff" stroke-width="1"/><path d="M822 19a5 5 0 0 1 8.5-3" fill="none" stroke="#fff" stroke-width="1"/><circle cx="822.5" cy="14" r="1.8" fill="none" stroke="#fff" stroke-width="0.9"/><path d="M847 16l4.5-4.5l4.5 4.5" fill="none" stroke="#fff" stroke-width="1.1"/><path d="M880 9l5-2.5l5 2.5v6l-5 2.5l-5-2.5z" fill="#3fa9f5"/><path d="M880 9l5 2.5l5-2.5M885 11.5v6" stroke="#fff" stroke-width="0.8" fill="none"/><rect x="897.5" y="10.5" width="8.5" height="6" fill="none" stroke="#fff" stroke-width="1"/><rect x="898.5" y="11.5" width="3" height="4" fill="#fff"/><path d="M914 11.5h2l3-3v11l-3-3h-2z" fill="none" stroke="#fff" stroke-width="0.9"/><path d="M921 11.5l3.5 4M924.5 11.5l-3.5 4" stroke="#fff" stroke-width="0.9"/><rect x="930.5" y="9.5" width="15" height="9" fill="none" stroke="#fff" stroke-width="0.9"/><path d="M932.5 12h11M932.5 14h11M934 16.2h8" stroke="#fff" stroke-width="0.7" stroke-dasharray="1 0.6"/><text x="957.5" y="17.5" font-size="10" fill="#fff" text-anchor="middle">中</text><rect x="972" y="8" width="11" height="11" fill="#fff"/><text x="977.5" y="17.5" font-size="10.5" fill="#1a1e23" text-anchor="middle" font-family="Liberation Sans">M</text><path d="M1051 9.5h12v8h-7l-3 3v-3h-2z" fill="none" stroke="#fff" stroke-width="1"/><path d="M1053 12h8M1053 14.5h6" stroke="#fff" stroke-width="0.8"/><circle cx="1060" cy="19.5" r="4.2" fill="#1a1e23" stroke="#fff" stroke-width="0.8"/><text x="1060" y="22" font-size="6.5" fill="#fff" text-anchor="middle" font-family="Liberation Sans">2</text></svg>
<div class="t" style="left:1004.27px;top:575.42px;font-size:9.78px;line-height:9.78px;color:#fff;transform:scaleX(1.0000);">10:43</div>
<div class="t" style="left:994.76px;top:587.52px;font-size:9.78px;line-height:9.78px;color:#fff;transform:scaleX(1.0000);">2019/5/24</div>
</body></html>
